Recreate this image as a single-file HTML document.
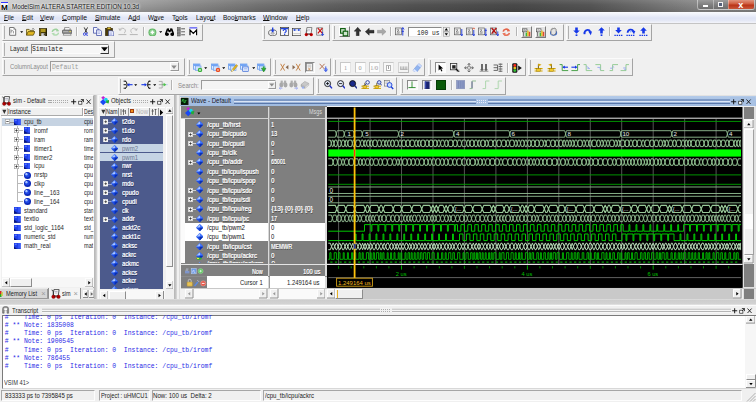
<!DOCTYPE html><html><head><meta charset="utf-8"><title>ModelSim ALTERA STARTER EDITION 10.3d</title>
<style>
html,body{margin:0;padding:0}
body{width:756px;height:402px;overflow:hidden;background:#f0f0f0;position:relative;
 font-family:"Liberation Sans","DejaVu Sans",sans-serif;}
div,span.t,span.m,svg{position:absolute;box-sizing:border-box}
span.t{white-space:pre;}
span.m{white-space:pre;font-family:"Liberation Mono","DejaVu Sans Mono",monospace}
u{text-decoration:underline;text-decoration-thickness:0.55px;text-underline-offset:0.1px}
.tb{border:1px solid;border-color:#fbfbfb #a4a4a4 #a4a4a4 #fbfbfb;background:#f0f0f0}
.tb:before{content:"";position:absolute;left:1px;top:1px;bottom:1px;width:1px;background:#b0b0b0;}
</style></head><body>
<div style="left:0px;top:0px;width:756px;height:12px;background:linear-gradient(90deg,#dedede 0,#cecece 1.2%,#c4c4c4 5%,#b8b8b8 10%,#a2a2a2 17%,#8a8a8a 25%,#727272 34%,#5e5e5e 45%,#525252 55%,#494949 68%,#555 78%,#707070 86%,#868686 92%,#848484 100%);"></div>
<div style="left:0px;top:0px;width:756px;height:12px;background:linear-gradient(180deg,rgba(255,255,255,.10) 0,rgba(0,0,0,0) 40%,rgba(0,0,0,.12) 100%);"></div>
<div style="left:0.6px;top:2px;width:7.8px;height:8.2px;background:#f6f6f6;border-top:1.3px solid #3434ff;"></div>
<span class="t" style="left:1.20px;top:4.00px;font-size:6.6px;line-height:8.6px;color:#000;transform:scaleX(1.201);transform-origin:0 0;text-shadow:.3px 0 0 #000;">M</span>
<span class="t" style="left:12.00px;top:2.00px;font-size:7px;line-height:9px;color:#1a1a1a;transform:scaleX(0.890);transform-origin:0 0;text-shadow:0 0 3px #fff,0 0 3px #fff;">ModelSim ALTERA STARTER EDITION 10.3d</span>
<div style="left:697px;top:0px;width:58px;height:10px;border:1px solid rgba(255,255,255,.45);border-top:none;border-radius:0 0 3px 3px;background:linear-gradient(180deg,#9c9c9c,#7e7e7e 55%,#6e6e6e);"></div>
<div style="left:728px;top:0px;width:26px;height:9px;background:linear-gradient(180deg,#e0957f,#cf5a3c 45%,#b93317 55%,#c9573a);border-radius:0 0 2px 0;"></div>
<div style="left:713px;top:0px;width:1px;height:9px;background:rgba(255,255,255,.35)"></div>
<div style="left:728px;top:0px;width:1px;height:9px;background:rgba(255,255,255,.35)"></div>
<div style="left:703px;top:5px;width:5px;height:2px;background:#fff;"></div>
<div style="left:717.5px;top:2px;width:5.5px;height:4.5px;border:1px solid #f4f4f4;background:#55607a"></div>
<span class="t" style="left:738.30px;top:0.00px;font-size:9px;line-height:11px;color:#fff;font-weight:bold;">x</span>
<div style="left:0px;top:11.5px;width:756px;height:11.5px;background:linear-gradient(180deg,#fafbfe 0,#eef1fa 25%,#dfe4f5 55%,#e3e7f5 75%,#f3f4fa 100%);"></div>
<span class="t" style="left:4.00px;top:14.00px;font-size:6.8px;line-height:8.8px;color:#111;transform:scaleX(0.913);transform-origin:0 0;"><u>F</u>ile</span>
<span class="t" style="left:21.70px;top:14.00px;font-size:6.8px;line-height:8.8px;color:#111;transform:scaleX(0.947);transform-origin:0 0;"><u>E</u>dit</span>
<span class="t" style="left:40.30px;top:14.00px;font-size:6.8px;line-height:8.8px;color:#111;transform:scaleX(0.951);transform-origin:0 0;"><u>V</u>iew</span>
<span class="t" style="left:62.00px;top:14.00px;font-size:6.8px;line-height:8.8px;color:#111;"><u>C</u>ompile</span>
<span class="t" style="left:94.70px;top:14.00px;font-size:6.8px;line-height:8.8px;color:#111;transform:scaleX(0.956);transform-origin:0 0;"><u>S</u>imulate</span>
<span class="t" style="left:128.00px;top:14.00px;font-size:6.8px;line-height:8.8px;color:#111;transform:scaleX(0.992);transform-origin:0 0;">A<u>d</u>d</span>
<span class="t" style="left:148.00px;top:14.00px;font-size:6.8px;line-height:8.8px;color:#111;transform:scaleX(0.934);transform-origin:0 0;">W<u>a</u>ve</span>
<span class="t" style="left:172.00px;top:14.00px;font-size:6.8px;line-height:8.8px;color:#111;transform:scaleX(0.989);transform-origin:0 0;">T<u>o</u>ols</span>
<span class="t" style="left:195.70px;top:14.00px;font-size:6.8px;line-height:8.8px;color:#111;transform:scaleX(0.955);transform-origin:0 0;">Layo<u>u</u>t</span>
<span class="t" style="left:223.00px;top:14.00px;font-size:6.8px;line-height:8.8px;color:#111;transform:scaleX(0.962);transform-origin:0 0;">Boo<u>k</u>marks</span>
<span class="t" style="left:263.30px;top:14.00px;font-size:6.8px;line-height:8.8px;color:#111;transform:scaleX(1.013);transform-origin:0 0;"><u>W</u>indow</span>
<span class="t" style="left:295.70px;top:14.00px;font-size:6.8px;line-height:8.8px;color:#111;transform:scaleX(0.951);transform-origin:0 0;"><u>H</u>elp</span>
<div style="left:0px;top:23px;width:756px;height:1px;background:#c4c4c4"></div>
<div class="tb" style="left:2px;top:24px;width:201px;height:17px"></div>
<div class="tb" style="left:262px;top:24px;width:68px;height:17px"></div>
<div class="tb" style="left:332px;top:24px;width:232px;height:17px"></div>
<div class="tb" style="left:566px;top:24px;width:86px;height:17px"></div>
<div class="tb" style="left:2px;top:41px;width:113px;height:17px"></div>
<div class="tb" style="left:2px;top:58px;width:183px;height:18px"></div>
<div class="tb" style="left:187px;top:58px;width:84px;height:18px"></div>
<div class="tb" style="left:273px;top:58px;width:58px;height:18px"></div>
<div class="tb" style="left:333px;top:58px;width:92px;height:18px"></div>
<div class="tb" style="left:428px;top:58px;width:98px;height:18px"></div>
<div class="tb" style="left:528px;top:58px;width:105px;height:18px"></div>
<div class="tb" style="left:118px;top:76.5px;width:196px;height:18.0px"></div>
<div class="tb" style="left:316px;top:76.5px;width:81px;height:18.0px"></div>
<div class="tb" style="left:400px;top:76.5px;width:106px;height:18.0px"></div>
<svg style="left:9.2px;top:27.3px" width="7.6" height="9" viewBox="0 0 7.6 9"><path d="M.6,.5h4.2l1.9,1.9v5.9h-6.1z" fill="#fff" stroke="#555" stroke-width=".8"/><path d="M2,2.4v4M2,4.2q1.6,-1.2 2.4,0v2.2" stroke="#555" stroke-width=".6" fill="none"/><path d="M4.8,.5v1.9h1.9" fill="none" stroke="#6a6a6a" stroke-width=".5"/></svg>
<svg style="left:20.2px;top:31.2px" width="3.4" height="2.4" viewBox="0 0 3.4 2.4"><polygon points="0.2,0.3 3.2,0.3 1.7,2.1" fill="#000"/></svg>
<svg style="left:25.6px;top:27.8px" width="9.6" height="8" viewBox="0 0 9.6 8"><path d="M.5,7.2V1.4h2.6l.8,1h3.6v1.2" fill="#f4dc6a" stroke="#4a3c00" stroke-width=".7"/><path d="M.5,7.2l1.6,-3.6h7l-1.8,3.6z" fill="#e2b822" stroke="#4a3c00" stroke-width=".7"/><path d="M6,1.2c1,-1 2,-.6 2.4,.4" stroke="#222" stroke-width=".5" fill="none"/></svg>
<svg style="left:38.6px;top:27.6px" width="8.4" height="8.4" viewBox="0 0 8.4 8.4"><rect x=".4" y=".4" width="7.6" height="7.6" fill="#2c2400" stroke="#1a1600" stroke-width=".5"/><rect x="1.8" y=".8" width="4.8" height="3.4" fill="#b09820"/><rect x="2.2" y="5.2" width="4" height="2.8" fill="#d0d0d0"/><rect x="4.8" y="5.4" width="1" height="2" fill="#2c2400"/><rect x=".8" y=".8" width=".9" height="6.8" fill="#8a7410"/></svg>
<svg style="left:50.6px;top:27.6px" width="8.8" height="8.4" viewBox="0 0 8.8 8.4"><path d="M1.2,3.8a3.2,3 0 0 1 5.6,-1.4" fill="none" stroke="#9ed29e" stroke-width="1.5"/><polygon points="5.6,.6 8.4,3.2 5.2,3.6" fill="#9ed29e"/><path d="M7.6,4.6a3.2,3 0 0 1 -5.6,1.4" fill="none" stroke="#b2dcb2" stroke-width="1.5"/><polygon points="3.2,7.8 .4,5.2 3.6,4.8" fill="#b2dcb2"/></svg>
<svg style="left:61.8px;top:27.4px" width="10.4" height="8.8" viewBox="0 0 10.4 8.8"><path d="M2.6,3V.6h4.6l.8,.8V3" fill="#fff" stroke="#555" stroke-width=".6"/><rect x=".5" y="3" width="9.4" height="3.6" rx=".8" fill="#8c8c8c" stroke="#3a3a3a" stroke-width=".6"/><path d="M2,6.6l-.8,1.7h8l-.8,-1.7z" fill="#f2f2f2" stroke="#555" stroke-width=".5"/><rect x="7.4" y="4" width="1.4" height=".9" fill="#f0e040"/><path d="M1.2,4.4h5" stroke="#d0d0d0" stroke-width=".6"/></svg>
<div style="left:76px;top:27px;width:1px;height:9px;background:#b4b4b4"></div>
<div style="left:77px;top:27px;width:1px;height:9px;background:#fcfcfc"></div>
<svg style="left:82.6px;top:27.2px" width="5.8" height="9.2" viewBox="0 0 5.8 9.2"><path d="M1.2,.4l2.8,5.4M4.6,.4l-2.8,5.4" stroke="#222" stroke-width=".9"/><circle cx="1.5" cy="7.2" r="1.2" fill="none" stroke="#2a3ce0" stroke-width=".9"/><circle cx="4.3" cy="7.2" r="1.2" fill="none" stroke="#2a3ce0" stroke-width=".9"/></svg>
<svg style="left:92.8px;top:27px" width="9.4" height="9" viewBox="0 0 9.4 9"><path d="M.5,.5h3.4l1.3,1.3v4.4h-4.7z" fill="#f4f6ff" stroke="#2c3c9c" stroke-width=".7"/><path d="M3.6,2.9h3.6l1.4,1.4v4.2h-5z" fill="#f4f6ff" stroke="#2c3c9c" stroke-width=".7"/><path d="M4.6,5h2.6M4.6,6.4h2.6" stroke="#6878c8" stroke-width=".5"/></svg>
<svg style="left:105.2px;top:26.8px" width="9.2" height="9.4" viewBox="0 0 9.2 9.4"><rect x=".5" y="1.3" width="7" height="7.4" fill="#4a3a08" stroke="#2a2000" stroke-width=".6"/><rect x="2.2" y=".4" width="3.6" height="1.8" fill="#e0c030" stroke="#4a3a08" stroke-width=".5"/><path d="M3.6,3.8h3.8l1.3,1.3v3.8h-5.1z" fill="#f2f4ff" stroke="#2c3c9c" stroke-width=".6"/><path d="M4.6,6h2.6M4.6,7.3h2.6" stroke="#6878c8" stroke-width=".5"/></svg>
<svg style="left:117.6px;top:27.2px" width="9.2" height="8.6" viewBox="0 0 9.2 8.6"><path d="M1.6,3A3,2.7 0 1 1 6,6.2" fill="none" stroke="#b0b0b0" stroke-width=".8"/><path d="M1,1.2l.6,2.2l2,-.8" fill="none" stroke="#a8a8a8" stroke-width=".7"/><path d="M.4,7.6h8" stroke="#a8a8a8" stroke-width=".8"/></svg>
<svg style="left:128.8px;top:27.2px" width="9.2" height="8.6" viewBox="0 0 9.2 8.6"><path d="M7.6,3A3,2.7 0 1 0 3.2,6.2" fill="none" stroke="#b8b8b8" stroke-width=".8"/><path d="M8.2,1.2l-.6,2.2l-2,-.8" fill="none" stroke="#a8a8a8" stroke-width=".7"/><path d="M.8,7.6h8" stroke="#a8a8a8" stroke-width=".8"/></svg>
<div style="left:142.6px;top:27px;width:1px;height:9px;background:#b4b4b4"></div>
<div style="left:143.6px;top:27px;width:1px;height:9px;background:#fcfcfc"></div>
<svg style="left:147.8px;top:27.6px" width="8.8" height="8.8" viewBox="0 0 8.8 8.8"><circle cx="4.4" cy="4.4" r="4" fill="#62b866"/><circle cx="4.4" cy="4.4" r="3" fill="#8ed092"/><path d="M4.4,2.6v3.6M2.6,4.4h3.6" stroke="#fff" stroke-width="1.3"/><circle cx="4.4" cy="4.4" r="1.1" fill="#fff"/></svg>
<svg style="left:159px;top:31.2px" width="3.4" height="2.4" viewBox="0 0 3.4 2.4"><polygon points="0.2,0.3 3.2,0.3 1.7,2.1" fill="#000"/></svg>
<svg style="left:164.6px;top:27.8px" width="9.2" height="8.2" viewBox="0 0 9.2 8.2"><path d="M2.6,.8l-2,5.4M6.6,.8l2,5.4" stroke="#000" stroke-width="1.5"/><rect x="2.4" y=".4" width="1.7" height="3" fill="#000"/><rect x="5.1" y=".4" width="1.7" height="3" fill="#000"/><rect x="3.6" y="2" width="2" height="2.2" fill="#000"/><ellipse cx="2" cy="6.2" rx="1.9" ry="1.8" fill="#000"/><ellipse cx="7.2" cy="6.2" rx="1.9" ry="1.8" fill="#000"/></svg>
<svg style="left:176.6px;top:27.2px" width="8.8" height="9.4" viewBox="0 0 8.8 9.4"><rect x=".4" y=".6" width="2.8" height="2.4" fill="#8a8a8a" stroke="#4a4a4a" stroke-width=".5"/><rect x=".4" y="3.6" width="2.8" height="2.4" fill="#8a8a8a" stroke="#4a4a4a" stroke-width=".5"/><rect x=".4" y="6.6" width="2.8" height="2.4" fill="#8a8a8a" stroke="#4a4a4a" stroke-width=".5"/><path d="M4.2,1.8h4.2M4.2,4.8h4.2M4.2,7.8h4.2" stroke="#3a3a3a" stroke-width=".8"/></svg>
<svg style="left:189.4px;top:27.2px" width="8.6" height="9" viewBox="0 0 8.6 9"><rect x=".2" y=".8" width="8.2" height="8" fill="#fbfbfb"/><rect x=".4" y=".4" width="7.8" height="1" fill="#2a2af8"/><path d="M1,8.2V3l3.3,3.4L7.6,3v5.2" fill="none" stroke="#000" stroke-width="1.2"/></svg>
<svg style="left:267.8px;top:27.2px" width="9.4" height="9.2" viewBox="0 0 9.4 9.2"><ellipse cx="4.7" cy="5.8" rx="4.1" ry="3" fill="#f2f2f4" stroke="#4a4a4a" stroke-width=".8"/><ellipse cx="4.7" cy="6.3" rx="1.7" ry="1" fill="#c8c8d0" stroke="#777" stroke-width=".4"/><path d="M4.7,.4v3.6" stroke="#1a3ce0" stroke-width="1.3"/><polygon points="2.7,3.2 6.7,3.2 4.7,5.6" fill="#1a3ce0"/></svg>
<svg style="left:279.8px;top:27.2px" width="9.4" height="9.2" viewBox="0 0 9.4 9.2"><rect x=".5" y=".6" width="8.2" height="7.8" fill="#f6f6f6" stroke="#333" stroke-width=".7"/><rect x=".9" y="1" width="7.4" height="1.3" fill="#2244d8"/><path d="M3.2,4a1.5,1.4 0 1 1 2.2,1.2q-.7,.4 -.7,1.2" stroke="#1a3ce0" stroke-width="1.1" fill="none"/><rect x="4.1" y="7" width="1.1" height="1" fill="#1a3ce0"/></svg>
<svg style="left:291.8px;top:27.6px" width="9.6" height="8.4" viewBox="0 0 9.6 8.4"><rect x=".5" y=".5" width="8.6" height="7.2" fill="#f8f8f8" stroke="#333" stroke-width=".7"/><rect x=".9" y=".9" width="7.8" height="1.8" fill="#c8d4f0"/><rect x="1.8" y="1.2" width="1.6" height="1.6" fill="#1a3ce0"/><rect x="6" y="1.2" width="1.6" height="1.6" fill="#1a3ce0"/><path d="M1.4,5.6h6.8" stroke="#b0b0b0" stroke-width=".6"/></svg>
<svg style="left:303.8px;top:27.2px" width="10" height="9.4" viewBox="0 0 10 9.4"><rect x="3" y=".6" width="5" height="6" fill="#fff" stroke="#555" stroke-width=".7" transform="skewX(-8)"/><path d="M3.4,2.4h3M3.2,3.8h3" stroke="#99a" stroke-width=".5"/><path d="M2.2,7.6L3,3" stroke="#555" stroke-width=".6"/><circle cx="2.3" cy="7.6" r="1.6" fill="#c40000"/><circle cx="7.3" cy="7.6" r="1.6" fill="#c40000"/><path d="M2.3,7.6h5" stroke="#600" stroke-width=".6"/></svg>
<svg style="left:316px;top:27.2px" width="9.6" height="9.4" viewBox="0 0 9.6 9.4"><path d="M.6,.8h6v7.4h-6z" fill="#f2f2f2" stroke="#666" stroke-width=".7"/><path d="M1.8,1.2l4.6,5.2M6.4,1.2l-4.6,5.2" stroke="#c81010" stroke-width="1.2"/><path d="M6.6,5v3.4M5.2,7l1.4,1.6l1.4,-1.6" stroke="#1a3ce0" stroke-width=".8" fill="none"/></svg>
<div style="left:338.6px;top:26.4px;width:11px;height:11px;background:#efefef;border:1px solid;border-color:#fdfdfd #7a7a7a #7a7a7a #fdfdfd"></div>
<svg style="left:340.2px;top:28px" width="8.6" height="8.6" viewBox="0 0 8.6 8.6"><rect x=".6" y=".6" width="4.6" height="4.6" fill="#cfe6cf" stroke="#0a5a0a" stroke-width="1.1"/><rect x="3.2" y="3.2" width="4.6" height="4.6" fill="#cfe6cf" stroke="#0a5a0a" stroke-width="1.1"/></svg>
<svg style="left:353.8px;top:27.2px" width="7.4" height="9.2" viewBox="0 0 7.4 9.2"><polygon points="3.7,.3 7.2,4.2 5.1,4.2 5.1,8.8 2.3,8.8 2.3,4.2 .2,4.2" fill="#333" stroke="#111" stroke-width=".4"/></svg>
<svg style="left:365.2px;top:28.2px" width="9.4" height="7.4" viewBox="0 0 9.4 7.4"><polygon points=".3,3.7 4.2,.2 4.2,2.3 9,2.3 9,5.1 4.2,5.1 4.2,7.2" fill="#333" stroke="#111" stroke-width=".4"/></svg>
<svg style="left:376.8px;top:28.2px" width="9.4" height="7.4" viewBox="0 0 9.4 7.4"><polygon points="9.1,3.7 5.2,.2 5.2,2.3 .4,2.3 .4,5.1 5.2,5.1 5.2,7.2" fill="#a8a8a8" stroke="#8c8c8c" stroke-width=".4"/></svg>
<div style="left:390px;top:27px;width:1px;height:9px;background:#b4b4b4"></div>
<div style="left:391px;top:27px;width:1px;height:9px;background:#fcfcfc"></div>
<svg style="left:395.4px;top:27.2px" width="9.6" height="9.4" viewBox="0 0 9.6 9.4"><rect x=".5" y="1" width="5.8" height="6.8" fill="#f4f4f4" stroke="#5a5a5a" stroke-width=".7"/><path d="M1.6,2.8h2.4l-1.8,2.2h2.6M1.6,6.2h3" stroke="#555" stroke-width=".6" fill="none"/><path d="M7.8,.6v8" stroke="#1a34d8" stroke-width=".9"/><path d="M6.4,2.4l1.4,-1.8l1.4,1.8M6.6,4.4h2.4" stroke="#1a34d8" stroke-width=".8" fill="none"/></svg>
<div style="left:408.3px;top:27.4px;width:34px;height:9.6px;background:#fff;border:1px solid;border-color:#8a8a8a #e8e8e8 #e8e8e8 #8a8a8a"></div>
<span class="m" style="left:417.00px;top:30.00px;font-size:6.3px;line-height:8.3px;color:#222;transform:scaleX(0.992);transform-origin:0 0;">100 us</span>
<svg style="left:443px;top:27.4px" width="6.6" height="9.6" viewBox="0 0 6.6 9.6"><rect x=".3" y=".3" width="6" height="4.2" fill="#f0f0f0" stroke="#8a8a8a" stroke-width=".5"/><rect x=".3" y="5" width="6" height="4.2" fill="#f0f0f0" stroke="#8a8a8a" stroke-width=".5"/><polygon points="1.6,3.4 5,3.4 3.3,1" fill="#000"/><polygon points="1.6,6.2 5,6.2 3.3,8.6" fill="#000"/></svg>
<svg style="left:453.6px;top:27.2px" width="9.6" height="9.4" viewBox="0 0 9.6 9.4"><rect x=".5" y="1" width="5.8" height="6.8" fill="#f4f4f4" stroke="#5a5a5a" stroke-width=".7"/><path d="M1.6,2.8h2.4l-1.8,2.2h2.6M1.6,6.2h3" stroke="#555" stroke-width=".6" fill="none"/><path d="M7.8,2v6.6M6.4,7l1.4,1.8l1.4,-1.8" stroke="#1a34d8" stroke-width=".9" fill="none"/></svg>
<svg style="left:465.8px;top:27.2px" width="9.6" height="9.4" viewBox="0 0 9.6 9.4"><rect x=".5" y="1" width="5.8" height="6.8" fill="#f4f4f4" stroke="#5a5a5a" stroke-width=".7"/><path d="M1.6,2.8h2.4l-1.8,2.2h2.6M1.6,6.2h3" stroke="#555" stroke-width=".6" fill="none"/><path d="M7.8,3v5.6M6.4,7l1.4,1.8l1.4,-1.8" stroke="#1a34d8" stroke-width=".9" fill="none"/><path d="M6.6,2.4l1.2,-1.6l1.2,1.6" stroke="#e04a2a" stroke-width=".8" fill="none"/></svg>
<svg style="left:477.8px;top:27.2px" width="9.6" height="9.4" viewBox="0 0 9.6 9.4"><rect x=".5" y="1" width="5.8" height="6.8" fill="#f4f4f4" stroke="#5a5a5a" stroke-width=".7"/><path d="M1.6,2.8h2.4l-1.8,2.2h2.6M1.6,6.2h3" stroke="#555" stroke-width=".6" fill="none"/><path d="M7.8,1.4v7.2M6.4,7l1.4,1.8l1.4,-1.8" stroke="#1a34d8" stroke-width=".9" fill="none"/><path d="M6.6,3.4h2.4" stroke="#1a34d8" stroke-width=".7"/></svg>
<svg style="left:489.8px;top:27.2px" width="9.6" height="9.4" viewBox="0 0 9.6 9.4"><rect x=".5" y="1" width="5.8" height="6.8" fill="#f4f4f4" stroke="#5a5a5a" stroke-width=".7"/><path d="M1.6,2.8h2.4l-1.8,2.2h2.6M1.6,6.2h3" stroke="#555" stroke-width=".6" fill="none"/><path d="M1.6,1l4.8,5.6M6.4,1l-4.8,5.6" stroke="#b80c0c" stroke-width="1.2"/><path d="M7.8,4.4v4.2M6.4,7l1.4,1.8l1.4,-1.8" stroke="#1a34d8" stroke-width=".9" fill="none"/></svg>
<svg style="left:501.8px;top:27.8px" width="8.6" height="8.4" viewBox="0 0 8.6 8.4"><path d="M1.2,3.6a3.1,2.9 0 0 1 5.6,-1.2" fill="none" stroke="#e4664c" stroke-width="1.7"/><polygon points="5.6,.4 8.4,3.2 5,3.6" fill="#e4664c"/><path d="M7.4,4.8a3.1,2.9 0 0 1 -5.6,1.2" fill="none" stroke="#e8765c" stroke-width="1.7"/><polygon points="3,8 .2,5.2 3.6,4.8" fill="#e8765c"/></svg>
<div style="left:515.6px;top:27px;width:1px;height:9px;background:#b4b4b4"></div>
<div style="left:516.6px;top:27px;width:1px;height:9px;background:#fcfcfc"></div>
<div style="left:520.8px;top:26.4px;width:11.4px;height:11.2px;background:#e2e2e2;border:1px solid;border-color:#fdfdfd #7a7a7a #7a7a7a #fdfdfd"></div>
<svg style="left:522px;top:27.6px" width="9" height="9" viewBox="0 0 9 9"><rect x=".6" y=".8" width="4.4" height="3" fill="#e8e8e8" stroke="#444" stroke-width=".6"/><path d="M1.2,2.6l1,-1l.8,1l1,-1" stroke="#222" stroke-width=".5" fill="none"/><path d="M1.6,3.8v4.6" stroke="#444" stroke-width=".7"/><rect x="3.6" y="4.6" width="1.5" height="3.8" fill="#3cb83c"/><rect x="5.2" y="2.6" width="1.5" height="5.8" fill="#e8c020"/><rect x="6.8" y="3.8" width="1.5" height="4.6" fill="#e04830"/><path d="M.6,8.6h8.2" stroke="#888" stroke-width=".5"/></svg>
<div style="left:535px;top:26.4px;width:11.4px;height:11.2px;background:#e2e2e2;border:1px solid;border-color:#fdfdfd #7a7a7a #7a7a7a #fdfdfd"></div>
<svg style="left:536.2px;top:27.6px" width="9" height="9" viewBox="0 0 9 9"><rect x=".6" y=".8" width="4.4" height="3" fill="#fff" stroke="#444" stroke-width=".6"/><path d="M1.2,2.6l1,-1l.8,1l1,-1" stroke="#222" stroke-width=".5" fill="none"/><path d="M1.6,3.8v4.6" stroke="#444" stroke-width=".7"/><rect x="3.6" y="4.6" width="1.5" height="3.8" fill="#3cb83c"/><rect x="5.2" y="2.6" width="1.5" height="5.8" fill="#e8c020"/><rect x="6.8" y="3.8" width="1.5" height="4.6" fill="#e04830"/><path d="M.6,8.6h8.2" stroke="#888" stroke-width=".5"/></svg>
<svg style="left:549px;top:27.2px" width="9" height="9.4" viewBox="0 0 9 9.4"><ellipse cx="4.6" cy="6" rx="3.6" ry="2.8" fill="#4a78d8"/><ellipse cx="4.2" cy="6.6" rx="2" ry="1.2" fill="#b8ccf4"/><path d="M2,5V2.6q.7,-.8 1.2,0V1.6q.7,-.9 1.3,0V1.4q.7,-.9 1.3,0V2q.8,-.7 1.3,.2V5.6q0,2 -2.4,2.4q-2,.2 -2.7,-1.6z" fill="#e4e4e4" stroke="#444" stroke-width=".55"/></svg>
<svg style="left:572.6px;top:27.2px" width="7" height="9.4" viewBox="0 0 7 9.4"><polygon points="2.2,.4 4.8,.4 4.8,3.4 6.8,3.4 3.5,6.8 .2,3.4 2.2,3.4" fill="#1638e8"/><rect x="2.6" y="7.4" width="1.8" height="1.6" fill="#1638e8"/></svg>
<svg style="left:583.4px;top:27.4px" width="9.2" height="8.6" viewBox="0 0 9.2 8.6"><path d="M1.4,6.4a3.2,3.6 0 0 1 6,-1.6" fill="none" stroke="#1638e8" stroke-width="1.8"/><polygon points="5.2,4.2 9,4.6 7.8,8.2" fill="#1638e8"/><rect x=".6" y="5.6" width="1.8" height="1.6" fill="#1638e8"/></svg>
<svg style="left:597.6px;top:27.2px" width="7" height="9.4" viewBox="0 0 7 9.4"><polygon points="2.2,6.6 4.8,6.6 4.8,3.6 6.8,3.6 3.5,.2 .2,3.6 2.2,3.6" fill="#1638e8"/><rect x="2.6" y="7.4" width="1.8" height="1.6" fill="#1638e8"/></svg>
<div style="left:609px;top:27px;width:1px;height:9px;background:#b4b4b4"></div>
<div style="left:610px;top:27px;width:1px;height:9px;background:#fcfcfc"></div>
<svg style="left:614.4px;top:27.2px" width="9" height="9.6" viewBox="0 0 9 9.6"><polygon points="3.2,.4 5.8,.4 5.8,3 7.8,3 4.5,6.4 1.2,3 3.2,3" fill="#1638e8"/><path d="M.4,8.4h8.2" stroke="#1638e8" stroke-width="1.4" stroke-dasharray="1.4 .8"/></svg>
<svg style="left:626px;top:27.2px" width="10" height="9.6" viewBox="0 0 10 9.6"><path d="M1.6,5.8a3.2,3.4 0 0 1 6,-1.4" fill="none" stroke="#1638e8" stroke-width="1.8"/><polygon points="5.4,3.6 9.4,4 8,7.2" fill="#1638e8"/><circle cx="4.6" cy="4.6" r="1" fill="#8fb0ff"/><path d="M.4,8.4h8.2" stroke="#1638e8" stroke-width="1.4" stroke-dasharray="1.4 .8"/></svg>
<svg style="left:639.2px;top:27.2px" width="9" height="9.6" viewBox="0 0 9 9.6"><polygon points="3.2,6.6 5.8,6.6 5.8,3.8 7.8,3.8 4.5,.3 1.2,3.8 3.2,3.8" fill="#1638e8"/><path d="M.4,8.4h8.2" stroke="#1638e8" stroke-width="1.4" stroke-dasharray="1.4 .8"/></svg>
<span class="t" style="left:9.70px;top:45.00px;font-size:6.6px;line-height:8.6px;color:#222;transform:scaleX(0.908);transform-origin:0 0;">Layout</span>
<div style="left:30.8px;top:44.2px;width:78.4px;height:9.6px;background:#f6f6f6;border:1px solid;border-color:#8a8a8a #fbfbfb #fbfbfb #8a8a8a"></div>
<span class="m" style="left:32.20px;top:46.00px;font-size:6.5px;line-height:8.5px;color:#222;transform:scaleX(0.987);transform-origin:0 0;">Simulate</span>
<div style="left:99.6px;top:44.8px;width:9.6px;height:8.8px;background:#f0f0f0;border:1px solid;border-color:#fff #555 #333 #fff"></div>
<svg style="left:101px;top:46.6px" width="7" height="4.8" viewBox="0 0 7 4.8"><polygon points=".2,.3 6.8,.3 3.5,4.5" fill="#000"/></svg>
<span class="t" style="left:9.70px;top:63.00px;font-size:6.6px;line-height:8.6px;color:#8a8a8a;transform:scaleX(0.888);transform-origin:0 0;">ColumnLayout</span>
<div style="left:50px;top:60.8px;width:129.4px;height:10.8px;background:#f2f2f2;border:1px solid;border-color:#9a9a9a #fbfbfb #fbfbfb #9a9a9a"></div>
<span class="m" style="left:51.70px;top:64.00px;font-size:6.5px;line-height:8.5px;color:#9a9a9a;transform:scaleX(0.974);transform-origin:0 0;">Default</span>
<div style="left:169.6px;top:61.6px;width:9.4px;height:9.4px;background:#f0f0f0;border:1px solid;border-color:#fff #999 #999 #fff"></div>
<svg style="left:171.4px;top:64.6px" width="6" height="4.4" viewBox="0 0 6 4.4"><polygon points=".3,.4 5.7,.4 3,4" fill="#8a8a8a"/></svg>
<svg style="left:193px;top:62.6px" width="9.8" height="9.6" viewBox="0 0 9.8 9.6"><rect x=".5" y="1" width="6.4" height="5.2" fill="#dcebff" stroke="#6a9cec" stroke-width=".8"/><rect x=".9" y="1.3" width="5.6" height="1.5" fill="#5a96f4"/><rect x="2.4" y="3" width="5.6" height="4.4" fill="#cfe2ff" stroke="#6a9cec" stroke-width=".7" opacity=".9"/><circle cx="7" cy="7" r="2.2" fill="#2fae2f"/><path d="M7,5.8v2.4M5.8,7h2.4" stroke="#fff" stroke-width=".7"/></svg>
<svg style="left:204.4px;top:66.6px" width="3.4" height="2.4" viewBox="0 0 3.4 2.4"><polygon points="0.2,0.3 3.2,0.3 1.7,2.1" fill="#000"/></svg>
<svg style="left:211.2px;top:62.6px" width="9.8" height="9.6" viewBox="0 0 9.8 9.6"><rect x=".5" y="1" width="6.4" height="5.2" fill="#dcebff" stroke="#6a9cec" stroke-width=".8"/><rect x=".9" y="1.3" width="5.6" height="1.5" fill="#5a96f4"/><rect x="2.4" y="3" width="5.6" height="4.4" fill="#cfe2ff" stroke="#6a9cec" stroke-width=".7" opacity=".9"/><circle cx="7" cy="7" r="2.2" fill="#e8421a"/><path d="M7,5.8v2.4M5.8,7h2.4" stroke="#ffd8b0" stroke-width=".7"/></svg>
<svg style="left:222px;top:66.6px" width="3.4" height="2.4" viewBox="0 0 3.4 2.4"><polygon points="0.2,0.3 3.2,0.3 1.7,2.1" fill="#000"/></svg>
<svg style="left:228px;top:62.6px" width="9.8" height="9.6" viewBox="0 0 9.8 9.6"><rect x=".5" y="1" width="6.4" height="5.2" fill="#dcebff" stroke="#6a9cec" stroke-width=".8"/><rect x=".9" y="1.3" width="5.6" height="1.5" fill="#5a96f4"/><rect x="2.4" y="3" width="5.6" height="4.4" fill="#cfe2ff" stroke="#6a9cec" stroke-width=".7" opacity=".9"/><path d="M3.4,8.6l1,-2.4l4,-4.6l1.2,1.2l-4,4.6z" fill="#f0c020" stroke="#8a6a00" stroke-width=".5"/><path d="M3.4,8.6l1,-2.4l1.2,1.4z" fill="#fff0b0"/></svg>
<svg style="left:240px;top:62.6px" width="9.8" height="9.6" viewBox="0 0 9.8 9.6"><rect x=".5" y="1" width="6.4" height="5.2" fill="#dcebff" stroke="#6a9cec" stroke-width=".8"/><rect x=".9" y="1.3" width="5.6" height="1.5" fill="#5a96f4"/><rect x="2.4" y="3" width="5.6" height="4.4" fill="#cfe2ff" stroke="#6a9cec" stroke-width=".7" opacity=".9"/><rect x="2.8" y="4" width="5.4" height="4.4" fill="#fff" stroke="#3a6ad8" stroke-width=".7"/><path d="M3.8,5.6h3.4M3.8,7h3.4" stroke="#6a94e8" stroke-width=".6"/></svg>
<svg style="left:251.6px;top:66.6px" width="3.4" height="2.4" viewBox="0 0 3.4 2.4"><polygon points="0.2,0.3 3.2,0.3 1.7,2.1" fill="#000"/></svg>
<svg style="left:257.4px;top:62.6px" width="9.8" height="9.6" viewBox="0 0 9.8 9.6"><rect x=".5" y="1" width="6.4" height="5.2" fill="#dcebff" stroke="#6a9cec" stroke-width=".8"/><rect x=".9" y="1.3" width="5.6" height="1.5" fill="#5a96f4"/><rect x="2.4" y="3" width="5.6" height="4.4" fill="#cfe2ff" stroke="#6a9cec" stroke-width=".7" opacity=".9"/><polygon points="4.4,5.2 9,5.2 6.7,9" fill="#2fae2f" stroke="#0a6a0a" stroke-width=".4"/><rect x="5.9" y="3.4" width="1.6" height="2" fill="#2fae2f"/></svg>
<svg style="left:280px;top:63px" width="9" height="8.6" viewBox="0 0 9 8.6"><path d="M.6,.8l4,6.8M4.6,.8l-4,6.8" stroke="#c07838" stroke-width=".9"/><polygon points="8.4,2 8.4,6.4 5.6,4.2" fill="#8a6a50"/></svg>
<svg style="left:291.6px;top:63px" width="9" height="8.6" viewBox="0 0 9 8.6"><path d="M4.2,.8l4,6.8M8.2,.8l-4,6.8" stroke="#c07838" stroke-width=".9"/><polygon points=".5,2 .5,6.4 3.3,4.2" fill="#8a6a50"/></svg>
<div style="left:304.6px;top:62px;width:10.6px;height:10.8px;background:#e9e9e9;border:1px solid;border-color:#8a8a8a #fdfdfd #fdfdfd #8a8a8a"></div>
<svg style="left:306.4px;top:63.4px" width="7.4" height="8.4" viewBox="0 0 7.4 8.4"><rect x=".5" y=".5" width="6" height="7.2" fill="#f4f4f4" stroke="#777" stroke-width=".7"/><path d="M1.6,2.2h3.6M1.6,3.8h3.6" stroke="#999" stroke-width=".5"/><path d="M2.2,5l2.4,2.2M4.6,5L2.2,7.2" stroke="#c07838" stroke-width=".7"/></svg>
<svg style="left:319px;top:63px" width="9.4" height="9" viewBox="0 0 9.4 9"><path d="M.6,.8l5,5.4M5.6,.8l-5,5.4" stroke="#b06a4a" stroke-width=".9"/><path d="M6.8,3.4v5M5.2,6.6l1.6,2l1.6,-2" stroke="#2a4ae0" stroke-width=".9" fill="none"/><rect x="5.6" y="5" width="2.6" height="3" fill="#4a6af0" opacity=".6"/></svg>
<div style="left:340.2px;top:62.4px;width:10.8px;height:10.2px;background:#fdfdfd;border:1px solid;border-color:#c8c8c8 #e4e4e4 #e4e4e4 #c8c8c8"></div>
<span class="t" style="left:343.88px;top:64.00px;font-size:6.2px;line-height:8.2px;color:#9a9a9a;font-family:'Liberation Serif',serif;">1</span>
<div style="left:354.6px;top:62.4px;width:11.4px;height:10.2px;background:#fdfdfd;border:1px solid;border-color:#c8c8c8 #e4e4e4 #e4e4e4 #c8c8c8"></div>
<span class="t" style="left:358.58px;top:64.00px;font-size:6.2px;line-height:8.2px;color:#9a9a9a;font-family:'Liberation Serif',serif;">0</span>
<div style="left:368.9px;top:62.4px;width:11.4px;height:10.2px;background:#fdfdfd;border:1px solid;border-color:#c8c8c8 #e4e4e4 #e4e4e4 #c8c8c8"></div>
<span class="t" style="left:370.29px;top:64.00px;font-size:6.2px;line-height:8.2px;color:#9a9a9a;font-family:'Liberation Serif',serif;">1/0</span>
<div style="left:383px;top:62.4px;width:10.8px;height:10.2px;background:#f8f8f8;border:1px solid;border-color:#c8c8c8 #e4e4e4 #e4e4e4 #c8c8c8"></div>
<div style="left:385.6px;top:64.6px;width:5.6px;height:6px;border:1px solid #b4b4b4;background:#fff"></div>
<div style="left:387.9px;top:66.2px;width:0.8px;height:3px;background:#a0a0a0"></div>
<div style="left:398px;top:62.4px;width:11px;height:10.2px;background:#f4f4f4;border:1px solid;border-color:#d4d4d4 #bbb #bbb #d4d4d4"></div>
<svg style="left:399.6px;top:65px" width="8" height="5" viewBox="0 0 8 5"><path d="M.4,4.4V1.4M2,4.4V1.4M3.6,4.4V1.4M5.2,4.4V1.4M6.8,4.4V1.4M.2,4.4h7.4" stroke="#8a8a8a" stroke-width=".6" fill="none"/></svg>
<svg style="left:411.8px;top:62.8px" width="10" height="9.6" viewBox="0 0 10 9.6"><path d="M1,7.4l4.2,-5.2l3.2,2.4l-4.2,5.2z" fill="#8fb4f0" stroke="#6a8ad0" stroke-width=".5"/><path d="M5.2,2.2l1.6,-1.8l3,2.4l-1.4,1.8z" fill="#c8dcff" stroke="#8aa4e0" stroke-width=".4"/><path d="M1,7.4l1.2,-1.4l3,2.4l-1.2,1.4z" fill="#dfe8ff"/></svg>
<div style="left:434.6px;top:62px;width:11.4px;height:10.8px;background:#fcfcfc;border:1px solid;border-color:#8a8a8a #fdfdfd #fdfdfd #8a8a8a"></div>
<svg style="left:437.6px;top:63.6px" width="6" height="8" viewBox="0 0 6 8"><polygon points=".6,.4 .6,6.4 2.2,5 3.4,7.6 4.4,7.1 3.2,4.6 5.2,4.6" fill="#000"/></svg>
<svg style="left:449.8px;top:62.8px" width="10.6" height="9.6" viewBox="0 0 10.6 9.6"><rect x=".6" y=".6" width="6.2" height="6.2" fill="#f4f4f4" stroke="#333" stroke-width=".8"/><rect x="2.2" y="2.2" width="3.4" height="3.4" fill="#222"/><path d="M5.8,5.8l3.2,3.2" stroke="#111" stroke-width="1.3"/><path d="M8.8,6.6v2.4h-2.4" stroke="#777" stroke-width=".7" fill="none"/></svg>
<svg style="left:464px;top:62.8px" width="10" height="9.6" viewBox="0 0 10 9.6"><path d="M5,.4v8.8M.6,4.8h8.8" stroke="#666" stroke-width=".9"/><path d="M3.6,2l1.4,-1.6l1.4,1.6M3.6,7.6l1.4,1.6l1.4,-1.6M2.2,3.4l-1.6,1.4l1.6,1.4M7.8,3.4l1.6,1.4l-1.6,1.4" stroke="#555" stroke-width=".8" fill="none"/><rect x="3.8" y="3.6" width="2.4" height="2.4" fill="#ddd" stroke="#666" stroke-width=".4"/></svg>
<svg style="left:478.6px;top:62.8px" width="10" height="9.6" viewBox="0 0 10 9.6"><path d="M3,1v6.4M7,1v6.4" stroke="#222" stroke-width="1.3"/><path d="M.6,8.2h8.8" stroke="#777" stroke-width=".8"/><path d="M1.4,6l1.6,1.6l1.6,-1.6M5.4,6l1.6,1.6l1.6,-1.6" stroke="#444" stroke-width=".6" fill="none"/></svg>
<svg style="left:493px;top:62.8px" width="10" height="9.6" viewBox="0 0 10 9.6"><path d="M.6,2h4v5.4h-4M.6,4.7h4" stroke="#444" stroke-width=".8" fill="none"/><path d="M5.6,1.2h3.8M5.6,3.6h3.8M5.6,6h3.8M5.6,8.2h3.8" stroke="#333" stroke-width=".8"/><path d="M7.4,.4v9" stroke="#666" stroke-width=".6"/></svg>
<div style="left:506.8px;top:62.6px;width:1px;height:9.999999999999993px;background:#b4b4b4"></div>
<div style="left:507.8px;top:62.6px;width:1px;height:9.999999999999993px;background:#fcfcfc"></div>
<svg style="left:512px;top:62.6px" width="10.2" height="10" viewBox="0 0 10.2 10"><rect x=".5" y=".5" width="4.6" height="9" rx=".8" fill="#2a2a2a" stroke="#000" stroke-width=".5"/><circle cx="2.8" cy="2.4" r="1.35" fill="#ff2a1a"/><circle cx="2.8" cy="5" r="1.35" fill="#e8c020"/><circle cx="2.8" cy="7.6" r="1.35" fill="#2fc02f"/><polygon points="6.2,2.4 9.8,5 6.2,7.6" fill="#111"/></svg>
<svg style="left:534.4px;top:62.8px" width="9.4" height="9.4" viewBox="0 0 9.4 9.4"><path d="M.6,8h8M.6,5.6h8" stroke="#d8a800" stroke-width="1.1"/><rect x="2.6" y="5.4" width="3.6" height="2.8" fill="#f0c828" stroke="#8a6a00" stroke-width=".4"/><path d="M4.4,5.4V1.2" stroke="#6a5200" stroke-width=".9"/><polygon points="4.4,.4 7.6,1.8 4.4,3.2" fill="#d8a800"/></svg>
<svg style="left:547px;top:62.8px" width="9.4" height="9.4" viewBox="0 0 9.4 9.4"><path d="M.6,8h8M.6,5.6h8" stroke="#d8a800" stroke-width="1.1"/><rect x="2.6" y="5.4" width="3.6" height="2.8" fill="#f0c828" stroke="#8a6a00" stroke-width=".4"/><path d="M4.4,5.4V1.2" stroke="#6a5200" stroke-width=".9"/><polygon points="4.4,.4 1.2,1.8 4.4,3.2" fill="#d8a800"/></svg>
<svg style="left:559.4px;top:62.8px" width="9.6" height="9.4" viewBox="0 0 9.6 9.4"><path d="M.6,1.6h2.6v6h6" stroke="#3a9a3a" stroke-width=".9" fill="none"/><path d="M9,4.2h-5" stroke="#1638e8" stroke-width="1.1"/><polygon points="3.4,4.2 5.8,2.6 5.8,5.8" fill="#1638e8"/></svg>
<svg style="left:570.6px;top:62.8px" width="9.6" height="9.4" viewBox="0 0 9.6 9.4"><path d="M.4,7.6h6.2v-6h2.6" stroke="#3a9a3a" stroke-width=".9" fill="none"/><path d="M.4,4.2h5" stroke="#1638e8" stroke-width="1.1"/><polygon points="6.4,4.2 4,2.6 4,5.8" fill="#1638e8"/></svg>
<svg style="left:583px;top:62.8px" width="9.6" height="9.4" viewBox="0 0 9.6 9.4"><path d="M.6,1.6h2.6v6h6" stroke="#8cc88c" stroke-width=".9" fill="none"/><path d="M3.4,3.2l3,2.2" stroke="#8a9cf0" stroke-width=".8"/><path d="M4.4,5.6h2.4" stroke="#8a9cf0" stroke-width=".7"/></svg>
<svg style="left:595.4px;top:62.8px" width="9.6" height="9.4" viewBox="0 0 9.6 9.4"><path d="M.4,1.6h5.2v6h3.6" stroke="#8cc88c" stroke-width=".9" fill="none"/><path d="M2.4,4.4h3" stroke="#8a9cf0" stroke-width=".8"/><path d="M4.4,5.8l1.2,1" stroke="#8a9cf0" stroke-width=".7"/></svg>
<svg style="left:608.6px;top:62.8px" width="9.6" height="9.4" viewBox="0 0 9.6 9.4"><path d="M.6,7.6h3v-6h5.6" stroke="#8cc88c" stroke-width=".9" fill="none"/><path d="M3.6,5.2h-2.4" stroke="#8a9cf0" stroke-width=".8"/><path d="M3.6,3.4l1.6,1" stroke="#8a9cf0" stroke-width=".7"/></svg>
<svg style="left:620.4px;top:62.8px" width="9.6" height="9.4" viewBox="0 0 9.6 9.4"><path d="M.6,7.6h5.4v-6h3" stroke="#8cc88c" stroke-width=".9" fill="none"/><path d="M3.2,5h2.8" stroke="#8a9cf0" stroke-width=".8"/><path d="M4.2,6.6h1.8" stroke="#8a9cf0" stroke-width=".7"/></svg>
<svg style="left:123px;top:80.2px" width="10" height="9.4" viewBox="0 0 10 9.4"><path d="M.6,1.2h2.2M.6,4.7h2.6M.6,8.2h2.2" stroke="#000" stroke-width=".9"/><path d="M2.4,.8q3.4,3.9 0,7.8" stroke="#000" stroke-width="1" fill="none"/><path d="M9.6,4.7h-4.4" stroke="#1638e8" stroke-width="1.1"/><polygon points="4,4.7 6.4,3 6.4,6.4" fill="#1638e8"/></svg>
<svg style="left:134.4px;top:84.4px" width="3.4" height="2.4" viewBox="0 0 3.4 2.4"><polygon points="0.2,0.3 3.2,0.3 1.7,2.1" fill="#000"/></svg>
<svg style="left:141px;top:80.2px" width="10.2" height="9.4" viewBox="0 0 10.2 9.4"><path d="M.4,4.7h4.4" stroke="#1638e8" stroke-width="1.1"/><polygon points="6,4.7 3.6,3 3.6,6.4" fill="#1638e8"/><path d="M9.6,1.2h-2M9.6,4.7h-2.6M9.6,8.2h-2" stroke="#000" stroke-width=".9"/><path d="M8.4,.8q-3.6,3.9 0,7.8" stroke="#000" stroke-width="1" fill="none"/></svg>
<svg style="left:152.6px;top:84.4px" width="3.4" height="2.4" viewBox="0 0 3.4 2.4"><polygon points="0.2,0.3 3.2,0.3 1.7,2.1" fill="#000"/></svg>
<svg style="left:157.6px;top:80.2px" width="10" height="9.4" viewBox="0 0 10 9.4"><path d="M.8,1.4h3.4v6.6h-3.4M.8,4.7h3.4" stroke="#9a9a9a" stroke-width=".8" fill="none"/><path d="M4.4,4.7h1.4" stroke="#3aa83a" stroke-width=".9"/><polygon points="8.4,4.7 5.6,2.8 5.6,6.6" fill="#4cc04c"/><path d="M8.6,4.7h1.2" stroke="#6a8ae8" stroke-width=".8" stroke-dasharray=".6 .4"/></svg>
<div style="left:171px;top:80.4px;width:1px;height:9.599999999999994px;background:#b4b4b4"></div>
<div style="left:172px;top:80.4px;width:1px;height:9.599999999999994px;background:#fcfcfc"></div>
<span class="t" style="left:178.00px;top:82.00px;font-size:6.6px;line-height:8.6px;color:#8a8a8a;transform:scaleX(0.915);transform-origin:0 0;">Search:</span>
<div style="left:201.3px;top:79.8px;width:74.8px;height:10.4px;background:#f4f4f4;border:1px solid;border-color:#9a9a9a #fbfbfb #fbfbfb #9a9a9a"></div>
<div style="left:267.8px;top:80.6px;width:8px;height:8.8px;background:#f0f0f0;border:1px solid;border-color:#fff #9a9a9a #9a9a9a #fff"></div>
<svg style="left:269px;top:83.4px" width="5.6" height="4" viewBox="0 0 5.6 4"><polygon points=".3,.4 5.3,.4 2.8,3.6" fill="#8a8a8a"/></svg>
<svg style="left:279px;top:80.2px" width="9" height="9.6" viewBox="0 0 9 9.6"><rect x="1.6" y=".6" width="2.2" height="3" fill="#b0b0b0"/><rect x="5" y=".6" width="2.2" height="3" fill="#b0b0b0"/><ellipse cx="2.3" cy="5" rx="2" ry="2.4" fill="#a8a8a8"/><ellipse cx="6.5" cy="5" rx="2" ry="2.4" fill="#a8a8a8"/><rect x="3.6" y="2.6" width="1.6" height="1.8" fill="#b8b8b8"/><path d="M.4,8.2h3M1.6,7l-1.4,1.2l1.4,1.2" stroke="#8a9af0" stroke-width=".7" fill="none"/></svg>
<svg style="left:288.6px;top:80.2px" width="9" height="9.6" viewBox="0 0 9 9.6"><rect x="1.6" y=".6" width="2.2" height="3" fill="#b0b0b0"/><rect x="5" y=".6" width="2.2" height="3" fill="#b0b0b0"/><ellipse cx="2.3" cy="5" rx="2" ry="2.4" fill="#a8a8a8"/><ellipse cx="6.5" cy="5" rx="2" ry="2.4" fill="#a8a8a8"/><rect x="3.6" y="2.6" width="1.6" height="1.8" fill="#b8b8b8"/><path d="M5.4,8.2h3M7.2,7l1.4,1.2l-1.4,1.2" stroke="#8a9af0" stroke-width=".7" fill="none"/></svg>
<svg style="left:300.4px;top:80.2px" width="9.8" height="9.4" viewBox="0 0 9.8 9.4"><path d="M1,4.6l3.8,-3.2l4,2l-3.8,3.2z" fill="#c8c8c8" stroke="#9a9a9a" stroke-width=".5"/><path d="M1,4.6v1.8l4,2v-1.8" fill="#b4b4b4" stroke="#9a9a9a" stroke-width=".4"/><path d="M5,8.4l3.8,-3.2v-1.8" fill="#d8d8d8" stroke="#9a9a9a" stroke-width=".4"/><circle cx="3" cy="7.6" r="1.2" fill="#9ab0f0"/></svg>
<svg style="left:324.2px;top:80.2px" width="8.4" height="9.4" viewBox="0 0 8.4 9.4"><circle cx="3.6" cy="3.6" r="3" fill="#e8f0ff" stroke="#111" stroke-width=".9"/><path d="M2,3.6h3.2M3.6,2v3.2" stroke="#000" stroke-width=".8"/><path d="M5.8,5.8l2.2,2.6" stroke="#1c2cc8" stroke-width="1.4"/></svg>
<svg style="left:336.6px;top:80.2px" width="8.4" height="9.4" viewBox="0 0 8.4 9.4"><circle cx="3.6" cy="3.6" r="3" fill="#e8f0ff" stroke="#111" stroke-width=".9"/><path d="M2,3.6h3.2" stroke="#000" stroke-width=".8"/><path d="M5.8,5.8l2.2,2.6" stroke="#1c2cc8" stroke-width="1.4"/></svg>
<svg style="left:348.6px;top:80.2px" width="8.4" height="9.4" viewBox="0 0 8.4 9.4"><circle cx="3.6" cy="3.6" r="3" fill="#1a2a8a" stroke="#111" stroke-width=".9"/><path d="M5.8,5.8l2.2,2.6" stroke="#1a2a8a" stroke-width="1.4"/></svg>
<svg style="left:360.8px;top:80.2px" width="9.4" height="9.4" viewBox="0 0 9.4 9.4"><path d="M.4,8.4h7.6M.4,6.2h7.6" stroke="#d8a800" stroke-width="1"/><rect x="2" y="5.8" width="3.6" height="2.8" fill="#f0c828" stroke="#8a6a00" stroke-width=".4"/><path d="M3.8,5.8V2.8" stroke="#6a5200" stroke-width=".8"/><circle cx="6.6" cy="2.4" r="1.8" fill="#e8f0ff" stroke="#1a2a8a" stroke-width=".8"/><path d="M5.2,3.8l-1.4,1.4" stroke="#1a2a8a" stroke-width=".8"/></svg>
<svg style="left:372.8px;top:80.2px" width="9.4" height="9.4" viewBox="0 0 9.4 9.4"><path d="M.4,8.4h7.6M.4,6.2h7.6" stroke="#d8a800" stroke-width="1"/><rect x="2" y="5.8" width="3.6" height="2.8" fill="#f0c828" stroke="#8a6a00" stroke-width=".4"/><path d="M3.8,5.8V2.8" stroke="#6a5200" stroke-width=".8"/><circle cx="6.2" cy="2.4" r="1.8" fill="#c8d8ff" stroke="#1a2a8a" stroke-width=".8"/><path d="M7.4,3.8l1.4,1.6" stroke="#1a2a8a" stroke-width=".9"/></svg>
<svg style="left:384px;top:80.2px" width="9.6" height="9.6" viewBox="0 0 9.6 9.6"><rect x=".5" y=".5" width="5" height="5.6" fill="#f4f4f4" stroke="#666" stroke-width=".6"/><path d="M1.4,2h3M1.4,3.4h3" stroke="#888" stroke-width=".5"/><circle cx="5.6" cy="5" r="2.4" fill="#c8dcff" stroke="#1a3cd8" stroke-width=".9"/><path d="M7.2,6.8l2,2.2" stroke="#1a3cd8" stroke-width="1.3"/></svg>
<div style="left:406.8px;top:79.6px;width:11.2px;height:10.8px;background:#fafafa;border:1px solid;border-color:#8a8a8a #fdfdfd #fdfdfd #8a8a8a"></div>
<svg style="left:408.4px;top:81.4px" width="8" height="7.4" viewBox="0 0 8 7.4"><path d="M4,.4v6.2M.4,6.6h7.2" stroke="#0a7a0a" stroke-width=".8"/></svg>
<div style="left:421.6px;top:79.6px;width:10.4px;height:10.8px;background:#f0f0f0;border:1px solid;border-color:#8a8a8a #fdfdfd #fdfdfd #8a8a8a"></div>
<svg style="left:423.6px;top:80.8px" width="6.4" height="8.6" viewBox="0 0 6.4 8.6"><rect x=".8" y=".4" width="4.8" height="7.6" fill="#1a2470"/><rect x=".8" y=".4" width="1.4" height="7.6" fill="#3a4ab0"/><path d="M0,8.2h6.4" stroke="#444" stroke-width=".6"/></svg>
<div style="left:436.4px;top:79.6px;width:9.8px;height:10.4px;background:#0a5a0a;border:1px solid #063c06"></div>
<div style="left:451.2px;top:80.4px;width:1px;height:9.599999999999994px;background:#b4b4b4"></div>
<div style="left:452.2px;top:80.4px;width:1px;height:9.599999999999994px;background:#fcfcfc"></div>
<svg style="left:455.8px;top:80.4px" width="9.4" height="9.4" viewBox="0 0 9.4 9.4"><rect x=".4" y=".4" width="8.4" height="8.4" fill="#7a88b8"/><path d="M1.6,.4v8.4M3.4,.4v8.4M5.2,.4v8.4M7,.4v8.4" stroke="#9aa8d0" stroke-width=".6"/><rect x=".4" y=".4" width="8.4" height="8.4" fill="none" stroke="#8a94b8" stroke-width=".5"/></svg>
<svg style="left:469px;top:80.4px" width="8" height="9.4" viewBox="0 0 8 9.4"><path d="M.6,8.6h2.6v-7.6h3.8" stroke="#8ab88a" stroke-width=".9" fill="none"/><rect x="2.2" y="1.4" width="1.6" height="6.8" fill="#8a90a8"/></svg>
<svg style="left:481.6px;top:80.4px" width="8" height="9.4" viewBox="0 0 8 9.4"><path d="M.6,8.6h3v-7.6h3.8" stroke="#a8d4a8" stroke-width=".9" fill="none"/></svg>
<svg style="left:493.6px;top:80.4px" width="8.6" height="9.4" viewBox="0 0 8.6 9.4"><path d="M.6,8.6h3.6v-7.6h3.8" stroke="#a8d4a8" stroke-width=".9" fill="none"/><path d="M4.8,2.6v4.6" stroke="#c4e4c4" stroke-width=".6"/></svg>
<div style="left:0px;top:94.4px;width:118px;height:0.8px;background:#e6e6e6"></div>
<div style="left:0px;top:95px;width:94px;height:205px;background:#f0f0f0;border:1px solid #fafafa;border-right-color:#a9a9a9;"></div>
<div style="left:94px;top:95px;width:3.2px;height:205px;background:linear-gradient(90deg,#b4b4b4,#c6c6c6 60%,#dcdcdc)"></div>
<svg style="left:2px;top:96px;" width="9" height="10" viewBox="0 0 9 10"><rect x="2.6" y="0.6" width="5" height="6.2" fill="#fdfdfd" stroke="#333" stroke-width=".8" transform="skewX(-8)"/><path d="M3.2,2.5h3M3.2,4h3" stroke="#8a8aa0" stroke-width=".6"/><path d="M.4,1l1.3,.6l.6,5" stroke="#222" stroke-width=".8" fill="none"/><circle cx="2.2" cy="7.7" r="1.7" fill="#c40000" stroke="#500" stroke-width=".4"/><circle cx="7" cy="7.7" r="1.7" fill="#c40000" stroke="#500" stroke-width=".4"/><path d="M2.2,7.7H7" stroke="#600" stroke-width=".7"/></svg>
<span class="t" style="left:13.00px;top:97.00px;font-size:6.6px;line-height:8.6px;color:#222;transform:scaleX(0.872);transform-origin:0 0;">sim - Default</span>
<svg style="left:48px;top:99px;" width="21" height="5" viewBox="0 0 21 5"><path d="M0,1.5H4M0,3.5H4" stroke="#888" stroke-width=".7"/><path d="M5,1.5H20M5,3.5H20" stroke="#999" stroke-width=".8" stroke-dasharray="1 1"/></svg>
<svg style="left:69.5px;top:97.5px" width="22.5" height="7.5" viewBox="0 0 24 8"><path d="M1.2,4H6.6M3.9,1.3V6.7" stroke="#111" stroke-width="1"/><rect x="9.3" y="3.4" width="3.4" height="3.2" fill="#fff" stroke="#111" stroke-width=".7"/><path d="M11.6,1.6h2.8v2.8M14.2,1.8l-2.2,2.2" stroke="#111" stroke-width=".8" fill="none"/><path d="M17.6,1.6l4.4,4.8M22,1.6l-4.4,4.8" stroke="#111" stroke-width=".9"/></svg>
<div style="left:1px;top:107px;width:92px;height:9px;background:#f0f0f0;border-top:1px solid #fff;border-bottom:1px solid #aaa;"></div>
<svg style="left:2px;top:109px;" width="5" height="6" viewBox="0 0 5 6"><polygon points="0.3,0.8 4.4,0.8 2.35,5" fill="#333"/></svg>
<div style="left:7px;top:108px;width:1px;height:8px;background:#b4b4b4"></div>
<span class="t" style="left:8.00px;top:108.00px;font-size:6.6px;line-height:8.6px;color:#222;transform:scaleX(0.922);transform-origin:0 0;">Instance</span>
<div style="left:82px;top:108px;width:1px;height:8px;background:#a8a8a8"></div>
<div style="left:83px;top:108px;width:1px;height:8px;background:#fff"></div>
<span class="t" style="left:84.30px;top:108.00px;font-size:6.6px;line-height:8.6px;color:#222;transform:scaleX(0.767);transform-origin:0 0;">Des</span>
<div style="left:1.5px;top:116px;width:92px;height:161px;background:#fff"></div>
<div style="left:2px;top:117.7px;width:91px;height:8px;background:#c6d3e2"></div>
<div style="left:16.6px;top:126px;width:0.8px;height:75.55000000000001px;background:#b9b9b9"></div>
<div style="left:9px;top:121.5px;width:5px;height:0.8px;background:#9a9a9a"></div>
<svg style="left:14px;top:118.6px;" width="6.6" height="6.6" viewBox="0 0 6.6 6.6"><rect width="6.6" height="6.6" fill="#1f40ea"/><rect x="4.092" width="2.508" height="6.6" fill="#3558fa"/><polygon points="0,3.3 3.63,6.6 0,6.6" fill="#0a187c"/><rect y="5.808" width="6.6" height="0.7919999999999999" fill="#0a187c"/><rect x="0.7919999999999999" y="0.66" width="1.9799999999999998" height="1.452" fill="#6f8cff" opacity=".7"/></svg>
<svg style="left:5.1px;top:119.4px;" width="5.0" height="5.0" viewBox="0 0 5.0 5.0"><rect x=".3" y=".3" width="4.4" height="4.4" fill="#fff" stroke="#9a9a9a" stroke-width=".6"/><path d="M1.25,2.5H3.75" stroke="#222" stroke-width=".7"/></svg>
<span class="t" style="left:24.20px;top:118.00px;font-size:6.6px;line-height:8.6px;color:#2a2a2a;transform:scaleX(0.883);transform-origin:0 0;">cpu_tb</span>
<span class="t" style="left:83.80px;top:118.00px;font-size:6.6px;line-height:8.6px;color:#2a2a2a;transform:scaleX(0.865);transform-origin:0 0;clip-path:inset(0 0 0 0);">cpu</span>
<div style="left:16.6px;top:130.35px;width:6.5px;height:0.8px;background:#b9b9b9"></div>
<svg style="left:23.8px;top:127.45px;" width="6.6" height="6.6" viewBox="0 0 6.6 6.6"><rect width="6.6" height="6.6" fill="#1f40ea"/><rect x="4.092" width="2.508" height="6.6" fill="#3558fa"/><polygon points="0,3.3 3.63,6.6 0,6.6" fill="#0a187c"/><rect y="5.808" width="6.6" height="0.7919999999999999" fill="#0a187c"/><rect x="0.7919999999999999" y="0.66" width="1.9799999999999998" height="1.452" fill="#6f8cff" opacity=".7"/></svg>
<svg style="left:14.2px;top:128.25px;" width="5.0" height="5.0" viewBox="0 0 5.0 5.0"><rect x=".3" y=".3" width="4.4" height="4.4" fill="#fff" stroke="#9a9a9a" stroke-width=".6"/><path d="M1.25,2.5H3.75" stroke="#222" stroke-width=".7"/><path d="M2.5,1.25V3.75" stroke="#222" stroke-width=".7"/></svg>
<span class="t" style="left:33.80px;top:127.00px;font-size:6.6px;line-height:8.6px;color:#2a2a2a;transform:scaleX(0.934);transform-origin:0 0;">iromf</span>
<span class="t" style="left:83.80px;top:127.00px;font-size:6.6px;line-height:8.6px;color:#2a2a2a;transform:scaleX(0.836);transform-origin:0 0;clip-path:inset(0 0 0 0);">rom</span>
<div style="left:16.6px;top:139.2px;width:6.5px;height:0.8px;background:#b9b9b9"></div>
<svg style="left:23.8px;top:136.3px;" width="6.6" height="6.6" viewBox="0 0 6.6 6.6"><rect width="6.6" height="6.6" fill="#1f40ea"/><rect x="4.092" width="2.508" height="6.6" fill="#3558fa"/><polygon points="0,3.3 3.63,6.6 0,6.6" fill="#0a187c"/><rect y="5.808" width="6.6" height="0.7919999999999999" fill="#0a187c"/><rect x="0.7919999999999999" y="0.66" width="1.9799999999999998" height="1.452" fill="#6f8cff" opacity=".7"/></svg>
<svg style="left:14.2px;top:137.1px;" width="5.0" height="5.0" viewBox="0 0 5.0 5.0"><rect x=".3" y=".3" width="4.4" height="4.4" fill="#fff" stroke="#9a9a9a" stroke-width=".6"/><path d="M1.25,2.5H3.75" stroke="#222" stroke-width=".7"/><path d="M2.5,1.25V3.75" stroke="#222" stroke-width=".7"/></svg>
<span class="t" style="left:33.80px;top:136.00px;font-size:6.6px;line-height:8.6px;color:#2a2a2a;transform:scaleX(0.857);transform-origin:0 0;">iram</span>
<span class="t" style="left:83.80px;top:136.00px;font-size:6.6px;line-height:8.6px;color:#2a2a2a;transform:scaleX(0.818);transform-origin:0 0;clip-path:inset(0 0 0 0);">ram</span>
<div style="left:16.6px;top:148.04999999999998px;width:6.5px;height:0.8px;background:#b9b9b9"></div>
<svg style="left:23.8px;top:145.15px;" width="6.6" height="6.6" viewBox="0 0 6.6 6.6"><rect width="6.6" height="6.6" fill="#1f40ea"/><rect x="4.092" width="2.508" height="6.6" fill="#3558fa"/><polygon points="0,3.3 3.63,6.6 0,6.6" fill="#0a187c"/><rect y="5.808" width="6.6" height="0.7919999999999999" fill="#0a187c"/><rect x="0.7919999999999999" y="0.66" width="1.9799999999999998" height="1.452" fill="#6f8cff" opacity=".7"/></svg>
<svg style="left:14.2px;top:145.95px;" width="5.0" height="5.0" viewBox="0 0 5.0 5.0"><rect x=".3" y=".3" width="4.4" height="4.4" fill="#fff" stroke="#9a9a9a" stroke-width=".6"/><path d="M1.25,2.5H3.75" stroke="#222" stroke-width=".7"/><path d="M2.5,1.25V3.75" stroke="#222" stroke-width=".7"/></svg>
<span class="t" style="left:33.80px;top:145.00px;font-size:6.6px;line-height:8.6px;color:#2a2a2a;transform:scaleX(0.934);transform-origin:0 0;">itimer1</span>
<span class="t" style="left:83.80px;top:145.00px;font-size:6.6px;line-height:8.6px;color:#2a2a2a;transform:scaleX(0.770);transform-origin:0 0;clip-path:inset(0 0 0 0);">time</span>
<div style="left:16.6px;top:156.9px;width:6.5px;height:0.8px;background:#b9b9b9"></div>
<svg style="left:23.8px;top:154.0px;" width="6.6" height="6.6" viewBox="0 0 6.6 6.6"><rect width="6.6" height="6.6" fill="#1f40ea"/><rect x="4.092" width="2.508" height="6.6" fill="#3558fa"/><polygon points="0,3.3 3.63,6.6 0,6.6" fill="#0a187c"/><rect y="5.808" width="6.6" height="0.7919999999999999" fill="#0a187c"/><rect x="0.7919999999999999" y="0.66" width="1.9799999999999998" height="1.452" fill="#6f8cff" opacity=".7"/></svg>
<svg style="left:14.2px;top:154.8px;" width="5.0" height="5.0" viewBox="0 0 5.0 5.0"><rect x=".3" y=".3" width="4.4" height="4.4" fill="#fff" stroke="#9a9a9a" stroke-width=".6"/><path d="M1.25,2.5H3.75" stroke="#222" stroke-width=".7"/><path d="M2.5,1.25V3.75" stroke="#222" stroke-width=".7"/></svg>
<span class="t" style="left:33.80px;top:154.00px;font-size:6.6px;line-height:8.6px;color:#2a2a2a;transform:scaleX(0.934);transform-origin:0 0;">itimer2</span>
<span class="t" style="left:83.80px;top:154.00px;font-size:6.6px;line-height:8.6px;color:#2a2a2a;transform:scaleX(0.770);transform-origin:0 0;clip-path:inset(0 0 0 0);">time</span>
<div style="left:16.6px;top:165.75px;width:6.5px;height:0.8px;background:#b9b9b9"></div>
<svg style="left:23.8px;top:162.85px;" width="6.6" height="6.6" viewBox="0 0 6.6 6.6"><rect width="6.6" height="6.6" fill="#1f40ea"/><rect x="4.092" width="2.508" height="6.6" fill="#3558fa"/><polygon points="0,3.3 3.63,6.6 0,6.6" fill="#0a187c"/><rect y="5.808" width="6.6" height="0.7919999999999999" fill="#0a187c"/><rect x="0.7919999999999999" y="0.66" width="1.9799999999999998" height="1.452" fill="#6f8cff" opacity=".7"/></svg>
<svg style="left:14.2px;top:163.65px;" width="5.0" height="5.0" viewBox="0 0 5.0 5.0"><rect x=".3" y=".3" width="4.4" height="4.4" fill="#fff" stroke="#9a9a9a" stroke-width=".6"/><path d="M1.25,2.5H3.75" stroke="#222" stroke-width=".7"/><path d="M2.5,1.25V3.75" stroke="#222" stroke-width=".7"/></svg>
<span class="t" style="left:33.80px;top:162.00px;font-size:6.6px;line-height:8.6px;color:#2a2a2a;transform:scaleX(0.867);transform-origin:0 0;">icpu</span>
<span class="t" style="left:83.80px;top:162.00px;font-size:6.6px;line-height:8.6px;color:#2a2a2a;transform:scaleX(0.865);transform-origin:0 0;clip-path:inset(0 0 0 0);">cpu</span>
<div style="left:16.6px;top:174.6px;width:6.5px;height:0.8px;background:#b9b9b9"></div>
<svg style="left:23.5px;top:171.5px;" width="7.0" height="7.0" viewBox="0 0 7.0 7.0"><circle cx="3.5" cy="3.5" r="3.5" fill="#0a26b4"/><circle cx="3.15" cy="2.975" r="2.52" fill="#1c44e0"/><circle cx="2.52" cy="2.17" r="1.26" fill="#7fa4ff"/><circle cx="2.31" cy="1.9600000000000002" r="0.5950000000000001" fill="#f0f5ff"/></svg>
<span class="t" style="left:33.80px;top:171.00px;font-size:6.6px;line-height:8.6px;color:#2a2a2a;transform:scaleX(0.920);transform-origin:0 0;">nrstp</span>
<span class="t" style="left:83.80px;top:171.00px;font-size:6.6px;line-height:8.6px;color:#2a2a2a;transform:scaleX(0.865);transform-origin:0 0;clip-path:inset(0 0 0 0);">cpu</span>
<div style="left:16.6px;top:183.45px;width:6.5px;height:0.8px;background:#b9b9b9"></div>
<svg style="left:23.5px;top:180.35px;" width="7.0" height="7.0" viewBox="0 0 7.0 7.0"><circle cx="3.5" cy="3.5" r="3.5" fill="#0a26b4"/><circle cx="3.15" cy="2.975" r="2.52" fill="#1c44e0"/><circle cx="2.52" cy="2.17" r="1.26" fill="#7fa4ff"/><circle cx="2.31" cy="1.9600000000000002" r="0.5950000000000001" fill="#f0f5ff"/></svg>
<span class="t" style="left:33.80px;top:180.00px;font-size:6.6px;line-height:8.6px;color:#2a2a2a;transform:scaleX(0.895);transform-origin:0 0;">clkp</span>
<span class="t" style="left:83.80px;top:180.00px;font-size:6.6px;line-height:8.6px;color:#2a2a2a;transform:scaleX(0.865);transform-origin:0 0;clip-path:inset(0 0 0 0);">cpu</span>
<div style="left:16.6px;top:192.29999999999998px;width:6.5px;height:0.8px;background:#b9b9b9"></div>
<svg style="left:23.5px;top:189.2px;" width="7.0" height="7.0" viewBox="0 0 7.0 7.0"><circle cx="3.5" cy="3.5" r="3.5" fill="#0a26b4"/><circle cx="3.15" cy="2.975" r="2.52" fill="#1c44e0"/><circle cx="2.52" cy="2.17" r="1.26" fill="#7fa4ff"/><circle cx="2.31" cy="1.9600000000000002" r="0.5950000000000001" fill="#f0f5ff"/></svg>
<span class="t" style="left:33.80px;top:189.00px;font-size:6.6px;line-height:8.6px;color:#2a2a2a;transform:scaleX(0.891);transform-origin:0 0;">line__163</span>
<span class="t" style="left:83.80px;top:189.00px;font-size:6.6px;line-height:8.6px;color:#2a2a2a;transform:scaleX(0.865);transform-origin:0 0;clip-path:inset(0 0 0 0);">cpu</span>
<div style="left:16.6px;top:201.15px;width:6.5px;height:0.8px;background:#b9b9b9"></div>
<svg style="left:23.5px;top:198.05px;" width="7.0" height="7.0" viewBox="0 0 7.0 7.0"><circle cx="3.5" cy="3.5" r="3.5" fill="#0a26b4"/><circle cx="3.15" cy="2.975" r="2.52" fill="#1c44e0"/><circle cx="2.52" cy="2.17" r="1.26" fill="#7fa4ff"/><circle cx="2.31" cy="1.9600000000000002" r="0.5950000000000001" fill="#f0f5ff"/></svg>
<span class="t" style="left:33.80px;top:198.00px;font-size:6.6px;line-height:8.6px;color:#2a2a2a;transform:scaleX(0.891);transform-origin:0 0;">line__164</span>
<span class="t" style="left:83.80px;top:198.00px;font-size:6.6px;line-height:8.6px;color:#2a2a2a;transform:scaleX(0.865);transform-origin:0 0;clip-path:inset(0 0 0 0);">cpu</span>
<svg style="left:14px;top:207.1px;" width="6.6" height="6.6" viewBox="0 0 6.6 6.6"><rect width="6.6" height="6.6" fill="#1f40ea"/><rect x="4.092" width="2.508" height="6.6" fill="#3558fa"/><polygon points="0,3.3 3.63,6.6 0,6.6" fill="#0a187c"/><rect y="5.808" width="6.6" height="0.7919999999999999" fill="#0a187c"/><rect x="0.7919999999999999" y="0.66" width="1.9799999999999998" height="1.452" fill="#6f8cff" opacity=".7"/></svg>
<span class="t" style="left:24.20px;top:207.00px;font-size:6.6px;line-height:8.6px;color:#2a2a2a;transform:scaleX(0.915);transform-origin:0 0;">standard</span>
<span class="t" style="left:83.80px;top:207.00px;font-size:6.6px;line-height:8.6px;color:#2a2a2a;transform:scaleX(0.770);transform-origin:0 0;clip-path:inset(0 0 0 0);">stan</span>
<svg style="left:14px;top:215.95px;" width="6.6" height="6.6" viewBox="0 0 6.6 6.6"><rect width="6.6" height="6.6" fill="#1f40ea"/><rect x="4.092" width="2.508" height="6.6" fill="#3558fa"/><polygon points="0,3.3 3.63,6.6 0,6.6" fill="#0a187c"/><rect y="5.808" width="6.6" height="0.7919999999999999" fill="#0a187c"/><rect x="0.7919999999999999" y="0.66" width="1.9799999999999998" height="1.452" fill="#6f8cff" opacity=".7"/></svg>
<span class="t" style="left:24.20px;top:215.00px;font-size:6.6px;line-height:8.6px;color:#2a2a2a;transform:scaleX(0.951);transform-origin:0 0;">textio</span>
<span class="t" style="left:83.80px;top:215.00px;font-size:6.6px;line-height:8.6px;color:#2a2a2a;transform:scaleX(0.902);transform-origin:0 0;clip-path:inset(0 0 0 0);">text</span>
<svg style="left:14px;top:224.8px;" width="6.6" height="6.6" viewBox="0 0 6.6 6.6"><rect width="6.6" height="6.6" fill="#1f40ea"/><rect x="4.092" width="2.508" height="6.6" fill="#3558fa"/><polygon points="0,3.3 3.63,6.6 0,6.6" fill="#0a187c"/><rect y="5.808" width="6.6" height="0.7919999999999999" fill="#0a187c"/><rect x="0.7919999999999999" y="0.66" width="1.9799999999999998" height="1.452" fill="#6f8cff" opacity=".7"/></svg>
<span class="t" style="left:24.20px;top:224.00px;font-size:6.6px;line-height:8.6px;color:#2a2a2a;transform:scaleX(0.911);transform-origin:0 0;">std_logic_1164</span>
<span class="t" style="left:83.80px;top:224.00px;font-size:6.6px;line-height:8.6px;color:#2a2a2a;transform:scaleX(0.770);transform-origin:0 0;clip-path:inset(0 0 0 0);">std_</span>
<svg style="left:14px;top:233.65px;" width="6.6" height="6.6" viewBox="0 0 6.6 6.6"><rect width="6.6" height="6.6" fill="#1f40ea"/><rect x="4.092" width="2.508" height="6.6" fill="#3558fa"/><polygon points="0,3.3 3.63,6.6 0,6.6" fill="#0a187c"/><rect y="5.808" width="6.6" height="0.7919999999999999" fill="#0a187c"/><rect x="0.7919999999999999" y="0.66" width="1.9799999999999998" height="1.452" fill="#6f8cff" opacity=".7"/></svg>
<span class="t" style="left:24.20px;top:233.00px;font-size:6.6px;line-height:8.6px;color:#2a2a2a;transform:scaleX(0.876);transform-origin:0 0;">numeric_std</span>
<span class="t" style="left:83.80px;top:233.00px;font-size:6.6px;line-height:8.6px;color:#2a2a2a;transform:scaleX(0.748);transform-origin:0 0;clip-path:inset(0 0 0 0);">num</span>
<svg style="left:14px;top:242.5px;" width="6.6" height="6.6" viewBox="0 0 6.6 6.6"><rect width="6.6" height="6.6" fill="#1f40ea"/><rect x="4.092" width="2.508" height="6.6" fill="#3558fa"/><polygon points="0,3.3 3.63,6.6 0,6.6" fill="#0a187c"/><rect y="5.808" width="6.6" height="0.7919999999999999" fill="#0a187c"/><rect x="0.7919999999999999" y="0.66" width="1.9799999999999998" height="1.452" fill="#6f8cff" opacity=".7"/></svg>
<span class="t" style="left:24.20px;top:242.00px;font-size:6.6px;line-height:8.6px;color:#2a2a2a;transform:scaleX(0.903);transform-origin:0 0;">math_real</span>
<span class="t" style="left:83.80px;top:242.00px;font-size:6.6px;line-height:8.6px;color:#2a2a2a;transform:scaleX(0.845);transform-origin:0 0;clip-path:inset(0 0 0 0);">mat</span>
<div style="left:1.5px;top:277px;width:92px;height:10px;background:#f7f7f7"></div>
<svg style="left:1.5px;top:277.5px;" width="8.5" height="9.5" viewBox="0 0 8.5 9.5"><rect x=".5" y=".5" width="7.5" height="8.5" fill="#f0f0f0" stroke="#fdfdfd"/><path d="M8.0,0V9.0H0" stroke="#8c8c8c" fill="none"/><polygon points="5.27,3.05 5.27,6.45 2.8899999999999997,4.75" fill="#000"/></svg>
<svg style="left:84.5px;top:277.5px;" width="8.5" height="9.5" viewBox="0 0 8.5 9.5"><rect x=".5" y=".5" width="7.5" height="8.5" fill="#f0f0f0" stroke="#fdfdfd"/><path d="M8.0,0V9.0H0" stroke="#8c8c8c" fill="none"/><polygon points="3.23,3.05 3.23,6.45 5.61,4.75" fill="#000"/></svg>
<div style="left:10px;top:277.5px;width:21.5px;height:9.5px;background:#f0f0f0;border:1px solid;border-color:#fff #8c8c8c #8c8c8c #fff"></div>
<div style="left:0px;top:288px;width:94px;height:12px;background:#e8e8e8"></div>
<div style="left:0px;top:288.5px;width:47.5px;height:10.5px;background:#d6d6d6;border:1px solid #9a9a9a;border-top:none;border-left:none"></div>
<svg style="left:0px;top:291px;" width="3" height="6" viewBox="0 0 3 6"><rect width="1.5" height="3" fill="#d22"/><rect y="3" width="1.5" height="3" fill="#2a2"/><rect x="1.5" y="1" width="1.2" height="4" fill="#cc2"/></svg>
<span class="t" style="left:6.00px;top:290.00px;font-size:6.6px;line-height:8.6px;color:#222;transform:scaleX(0.863);transform-origin:0 0;">Memory List</span>
<span class="t" style="left:41.20px;top:289.00px;font-size:7.5px;line-height:9.5px;color:#9a9a9a;">×</span>
<div style="left:48px;top:288px;width:33px;height:11.5px;background:#f4f4f4;border:1px solid #8e8e8e;border-top:none;border-radius:0 0 2px 2px"></div>
<svg style="left:51px;top:289px;" width="10" height="10" viewBox="0 0 10 10"><rect x="3" y="0.6" width="5.2" height="6.2" fill="#fdfdfd" stroke="#333" stroke-width=".8" transform="skewX(-8)"/><path d="M3.6,2.5h3M3.6,4h3" stroke="#8a8aa0" stroke-width=".6"/><path d="M.6,1l1.4,.6l.6,5" stroke="#222" stroke-width=".8" fill="none"/><circle cx="2.5" cy="7.8" r="1.8" fill="#c40000" stroke="#500" stroke-width=".4"/><circle cx="7.5" cy="7.8" r="1.8" fill="#c40000" stroke="#500" stroke-width=".4"/><path d="M2.5,7.8H7.5" stroke="#600" stroke-width=".7"/></svg>
<span class="t" style="left:61.70px;top:290.00px;font-size:6.6px;line-height:8.6px;color:#222;transform:scaleX(0.828);transform-origin:0 0;">sim</span>
<span class="t" style="left:73.60px;top:289.00px;font-size:7.5px;line-height:9.5px;color:#9a9a9a;">×</span>
<svg style="left:83px;top:289.5px;" width="5.5" height="8" viewBox="0 0 5.5 8"><rect x=".5" y=".5" width="4.5" height="7" fill="#f0f0f0" stroke="#fdfdfd"/><path d="M5.0,0V7.5H0" stroke="#8c8c8c" fill="none"/><polygon points="3.77,2.3 3.77,5.7 1.39,4.0" fill="#000"/></svg>
<svg style="left:88.5px;top:289.5px;" width="5.5" height="8" viewBox="0 0 5.5 8"><rect x=".5" y=".5" width="4.5" height="7" fill="#f0f0f0" stroke="#fdfdfd"/><path d="M5.0,0V7.5H0" stroke="#8c8c8c" fill="none"/><polygon points="1.73,2.3 1.73,5.7 4.11,4.0" fill="#666"/></svg>
<div style="left:98px;top:95px;width:76.5px;height:205px;background:#f0f0f0;border:1px solid #fafafa;border-right-color:#c4c4c4;"></div>
<div style="left:174.3px;top:95px;width:2.6px;height:205px;background:linear-gradient(90deg,#b4b4b4,#c6c6c6 60%,#dcdcdc)"></div>
<svg style="left:99.6px;top:96.2px;" width="9.6" height="9.4" viewBox="0 0 9.6 9.4"><polygon points="3.2,0 5.2,1.7 3.2,3.6 1.2,1.7" fill="#c020d8"/><polygon points="3.2,3 6.4,6 3.2,9.2 0,6" fill="#1848f4"/><circle cx="5.9" cy="3.6" r="1.8" fill="#14d4f0"/><polygon points="6.2,4.6 9.4,4 8.6,7.6 6,6.8" fill="#1fae3a"/></svg>
<span class="t" style="left:110.50px;top:97.00px;font-size:6.6px;line-height:8.6px;color:#222;transform:scaleX(0.894);transform-origin:0 0;">Objects</span>
<svg style="left:133px;top:99px;" width="17" height="5" viewBox="0 0 17 5"><path d="M0,1.5H16M0,3.5H16" stroke="#999" stroke-width=".8" stroke-dasharray="1 1"/></svg>
<svg style="left:148.8px;top:97.5px" width="22.5" height="7.5" viewBox="0 0 24 8"><path d="M1.2,4H6.6M3.9,1.3V6.7" stroke="#111" stroke-width="1"/><rect x="9.3" y="3.4" width="3.4" height="3.2" fill="#fff" stroke="#111" stroke-width=".7"/><path d="M11.6,1.6h2.8v2.8M14.2,1.8l-2.2,2.2" stroke="#111" stroke-width=".8" fill="none"/><path d="M17.6,1.6l4.4,4.8M22,1.6l-4.4,4.8" stroke="#111" stroke-width=".9"/></svg>
<div style="left:99px;top:107px;width:66px;height:9px;background:#f0f0f0;border-top:1px solid #fff;"></div>
<svg style="left:100.5px;top:109px;" width="5" height="6" viewBox="0 0 5 6"><polygon points="0.3,0.8 4.4,0.8 2.35,5" fill="#333"/></svg>
<div style="left:104.8px;top:108px;width:1px;height:8px;background:#b4b4b4"></div>
<span class="t" style="left:106.00px;top:108.00px;font-size:6.6px;line-height:8.6px;color:#222;transform:scaleX(0.825);transform-origin:0 0;">Nam</span>
<div style="left:118px;top:107.5px;width:1px;height:8.5px;background:#999"></div>
<svg style="left:119.5px;top:108px;" width="7" height="8" viewBox="0 0 7 8"><path d="M1,1v6M3.5,1v6M2,3h3M5.5,2v4" stroke="#444" stroke-width=".7" fill="none"/></svg>
<div style="left:127.5px;top:107.5px;width:1px;height:8.5px;background:#999"></div>
<div style="left:130px;top:109.3px;width:3.8px;height:3.8px;background:#f0901c;border:.6px solid #a04010"></div>
<span class="t" style="left:135.50px;top:108.00px;font-size:6.6px;line-height:8.6px;color:#b0b0b0;transform:scaleX(0.909);transform-origin:0 0;">Now</span>
<div style="left:149px;top:107.5px;width:1px;height:8.5px;background:#999"></div>
<svg style="left:150.5px;top:108px;" width="7" height="8" viewBox="0 0 7 8"><path d="M1.5,1v6M0.5,3h2.5M4.5,1v6M3.5,2l1,-1l1,1" stroke="#444" stroke-width=".7" fill="none"/></svg>
<div style="left:157.5px;top:107.5px;width:1px;height:8.5px;background:#999"></div>
<svg style="left:159px;top:108.5px;" width="5" height="7" viewBox="0 0 5 7"><polygon points="1,0.5 4.2,3.5 1,6.5" fill="#000"/></svg>
<div style="left:99.5px;top:115.5px;width:63.5px;height:173.5px;background:#4c5a8c"></div>
<svg style="left:102.7px;top:119.3px;" width="5.4" height="5.4" viewBox="0 0 5.4 5.4"><rect x=".3" y=".3" width="4.800000000000001" height="4.800000000000001" fill="#fff" stroke="#dcdcdc" stroke-width=".6"/><path d="M1.35,2.7H4.050000000000001" stroke="#222" stroke-width=".7"/><path d="M2.7,1.35V4.050000000000001" stroke="#222" stroke-width=".7"/></svg>
<div style="left:107.6px;top:121.60000000000001px;width:4px;height:0.6px;background:#9aa6cc"></div>
<svg style="left:111.0px;top:118.3px;" width="7.2" height="7.2" viewBox="0 0 7.2 7.2"><polygon points="3.6,0 7.2,3.6 3.6,7.2 0,3.6" fill="#1f4ee6"/><polygon points="3.6,0 7.2,3.6 3.6,3.6" fill="#3f74ff"/><polygon points="3.6,0 3.6,3.6 0,3.6" fill="#7fa8ff"/><polygon points="3.6,7.2 7.2,3.6 3.6,3.6" fill="#0a2fb0"/><polygon points="1.9800000000000002,2.7 3.6,1.08 4.14,2.7" fill="#dfe9ff" opacity=".85"/></svg>
<span class="t" style="left:121.50px;top:118.00px;font-size:6.6px;line-height:8.6px;color:#f2f4fa;transform:scaleX(0.973);transform-origin:0 0;text-shadow:.3px 0 0 #f2f4fa,.5px .5px 0 #232c50;">t2do</span>
<svg style="left:102.7px;top:128.15px;" width="5.4" height="5.4" viewBox="0 0 5.4 5.4"><rect x=".3" y=".3" width="4.800000000000001" height="4.800000000000001" fill="#fff" stroke="#dcdcdc" stroke-width=".6"/><path d="M1.35,2.7H4.050000000000001" stroke="#222" stroke-width=".7"/><path d="M2.7,1.35V4.050000000000001" stroke="#222" stroke-width=".7"/></svg>
<div style="left:107.6px;top:130.45px;width:4px;height:0.6px;background:#9aa6cc"></div>
<svg style="left:111.0px;top:127.15px;" width="7.2" height="7.2" viewBox="0 0 7.2 7.2"><polygon points="3.6,0 7.2,3.6 3.6,7.2 0,3.6" fill="#1f4ee6"/><polygon points="3.6,0 7.2,3.6 3.6,3.6" fill="#3f74ff"/><polygon points="3.6,0 3.6,3.6 0,3.6" fill="#7fa8ff"/><polygon points="3.6,7.2 7.2,3.6 3.6,3.6" fill="#0a2fb0"/><polygon points="1.9800000000000002,2.7 3.6,1.08 4.14,2.7" fill="#dfe9ff" opacity=".85"/></svg>
<span class="t" style="left:121.50px;top:127.00px;font-size:6.6px;line-height:8.6px;color:#f2f4fa;transform:scaleX(0.973);transform-origin:0 0;text-shadow:.3px 0 0 #f2f4fa,.5px .5px 0 #232c50;">t1do</span>
<svg style="left:102.7px;top:137.0px;" width="5.4" height="5.4" viewBox="0 0 5.4 5.4"><rect x=".3" y=".3" width="4.800000000000001" height="4.800000000000001" fill="#fff" stroke="#dcdcdc" stroke-width=".6"/><path d="M1.35,2.7H4.050000000000001" stroke="#222" stroke-width=".7"/><path d="M2.7,1.35V4.050000000000001" stroke="#222" stroke-width=".7"/></svg>
<div style="left:107.6px;top:139.29999999999998px;width:4px;height:0.6px;background:#9aa6cc"></div>
<svg style="left:111.0px;top:136.0px;" width="7.2" height="7.2" viewBox="0 0 7.2 7.2"><polygon points="3.6,0 7.2,3.6 3.6,7.2 0,3.6" fill="#1f4ee6"/><polygon points="3.6,0 7.2,3.6 3.6,3.6" fill="#3f74ff"/><polygon points="3.6,0 3.6,3.6 0,3.6" fill="#7fa8ff"/><polygon points="3.6,7.2 7.2,3.6 3.6,3.6" fill="#0a2fb0"/><polygon points="1.9800000000000002,2.7 3.6,1.08 4.14,2.7" fill="#dfe9ff" opacity=".85"/></svg>
<span class="t" style="left:121.50px;top:136.00px;font-size:6.6px;line-height:8.6px;color:#f2f4fa;transform:scaleX(0.944);transform-origin:0 0;text-shadow:.3px 0 0 #f2f4fa,.5px .5px 0 #232c50;">rdo</span>
<div style="left:99.5px;top:144.35px;width:63.5px;height:8.0px;background:#c5d4e4"></div>
<svg style="left:111.0px;top:144.85px;" width="7.2" height="7.2" viewBox="0 0 7.2 7.2"><polygon points="3.6,0 7.2,3.6 3.6,7.2 0,3.6" fill="#1f4ee6"/><polygon points="3.6,0 7.2,3.6 3.6,3.6" fill="#3f74ff"/><polygon points="3.6,0 3.6,3.6 0,3.6" fill="#7fa8ff"/><polygon points="3.6,7.2 7.2,3.6 3.6,3.6" fill="#0a2fb0"/><polygon points="1.9800000000000002,2.7 3.6,1.08 4.14,2.7" fill="#dfe9ff" opacity=".85"/></svg>
<span class="t" style="left:121.50px;top:145.00px;font-size:6.6px;line-height:8.6px;color:#6e7890;transform:scaleX(0.909);transform-origin:0 0;">pwm2</span>
<div style="left:99.5px;top:153.20000000000002px;width:63.5px;height:8.0px;background:#c5d4e4"></div>
<svg style="left:111.0px;top:153.7px;" width="7.2" height="7.2" viewBox="0 0 7.2 7.2"><polygon points="3.6,0 7.2,3.6 3.6,7.2 0,3.6" fill="#1f4ee6"/><polygon points="3.6,0 7.2,3.6 3.6,3.6" fill="#3f74ff"/><polygon points="3.6,0 3.6,3.6 0,3.6" fill="#7fa8ff"/><polygon points="3.6,7.2 7.2,3.6 3.6,3.6" fill="#0a2fb0"/><polygon points="1.9800000000000002,2.7 3.6,1.08 4.14,2.7" fill="#dfe9ff" opacity=".85"/></svg>
<span class="t" style="left:121.50px;top:154.00px;font-size:6.6px;line-height:8.6px;color:#6e7890;transform:scaleX(0.909);transform-origin:0 0;">pwm1</span>
<svg style="left:111.0px;top:162.55px;" width="7.2" height="7.2" viewBox="0 0 7.2 7.2"><polygon points="3.6,0 7.2,3.6 3.6,7.2 0,3.6" fill="#1f4ee6"/><polygon points="3.6,0 7.2,3.6 3.6,3.6" fill="#3f74ff"/><polygon points="3.6,0 3.6,3.6 0,3.6" fill="#7fa8ff"/><polygon points="3.6,7.2 7.2,3.6 3.6,3.6" fill="#0a2fb0"/><polygon points="1.9800000000000002,2.7 3.6,1.08 4.14,2.7" fill="#dfe9ff" opacity=".85"/></svg>
<span class="t" style="left:121.50px;top:162.00px;font-size:6.6px;line-height:8.6px;color:#f2f4fa;transform:scaleX(0.893);transform-origin:0 0;text-shadow:.3px 0 0 #f2f4fa,.5px .5px 0 #232c50;">nwr</span>
<svg style="left:111.0px;top:171.4px;" width="7.2" height="7.2" viewBox="0 0 7.2 7.2"><polygon points="3.6,0 7.2,3.6 3.6,7.2 0,3.6" fill="#1f4ee6"/><polygon points="3.6,0 7.2,3.6 3.6,3.6" fill="#3f74ff"/><polygon points="3.6,0 3.6,3.6 0,3.6" fill="#7fa8ff"/><polygon points="3.6,7.2 7.2,3.6 3.6,3.6" fill="#0a2fb0"/><polygon points="1.9800000000000002,2.7 3.6,1.08 4.14,2.7" fill="#dfe9ff" opacity=".85"/></svg>
<span class="t" style="left:121.50px;top:171.00px;font-size:6.6px;line-height:8.6px;color:#f2f4fa;transform:scaleX(0.909);transform-origin:0 0;text-shadow:.3px 0 0 #f2f4fa,.5px .5px 0 #232c50;">nrst</span>
<svg style="left:102.7px;top:181.25px;" width="5.4" height="5.4" viewBox="0 0 5.4 5.4"><rect x=".3" y=".3" width="4.800000000000001" height="4.800000000000001" fill="#fff" stroke="#dcdcdc" stroke-width=".6"/><path d="M1.35,2.7H4.050000000000001" stroke="#222" stroke-width=".7"/><path d="M2.7,1.35V4.050000000000001" stroke="#222" stroke-width=".7"/></svg>
<div style="left:107.6px;top:183.54999999999998px;width:4px;height:0.6px;background:#9aa6cc"></div>
<svg style="left:111.0px;top:180.25px;" width="7.2" height="7.2" viewBox="0 0 7.2 7.2"><polygon points="3.6,0 7.2,3.6 3.6,7.2 0,3.6" fill="#1f4ee6"/><polygon points="3.6,0 7.2,3.6 3.6,3.6" fill="#3f74ff"/><polygon points="3.6,0 3.6,3.6 0,3.6" fill="#7fa8ff"/><polygon points="3.6,7.2 7.2,3.6 3.6,3.6" fill="#0a2fb0"/><polygon points="1.9800000000000002,2.7 3.6,1.08 4.14,2.7" fill="#dfe9ff" opacity=".85"/></svg>
<span class="t" style="left:121.50px;top:180.00px;font-size:6.6px;line-height:8.6px;color:#f2f4fa;transform:scaleX(0.896);transform-origin:0 0;text-shadow:.3px 0 0 #f2f4fa,.5px .5px 0 #232c50;">mdo</span>
<svg style="left:102.7px;top:190.1px;" width="5.4" height="5.4" viewBox="0 0 5.4 5.4"><rect x=".3" y=".3" width="4.800000000000001" height="4.800000000000001" fill="#fff" stroke="#dcdcdc" stroke-width=".6"/><path d="M1.35,2.7H4.050000000000001" stroke="#222" stroke-width=".7"/><path d="M2.7,1.35V4.050000000000001" stroke="#222" stroke-width=".7"/></svg>
<div style="left:107.6px;top:192.39999999999998px;width:4px;height:0.6px;background:#9aa6cc"></div>
<svg style="left:111.0px;top:189.1px;" width="7.2" height="7.2" viewBox="0 0 7.2 7.2"><polygon points="3.6,0 7.2,3.6 3.6,7.2 0,3.6" fill="#1f4ee6"/><polygon points="3.6,0 7.2,3.6 3.6,3.6" fill="#3f74ff"/><polygon points="3.6,0 3.6,3.6 0,3.6" fill="#7fa8ff"/><polygon points="3.6,7.2 7.2,3.6 3.6,3.6" fill="#0a2fb0"/><polygon points="1.9800000000000002,2.7 3.6,1.08 4.14,2.7" fill="#dfe9ff" opacity=".85"/></svg>
<span class="t" style="left:121.50px;top:189.00px;font-size:6.6px;line-height:8.6px;color:#f2f4fa;transform:scaleX(0.918);transform-origin:0 0;text-shadow:.3px 0 0 #f2f4fa,.5px .5px 0 #232c50;">cpudo</span>
<svg style="left:102.7px;top:198.95px;" width="5.4" height="5.4" viewBox="0 0 5.4 5.4"><rect x=".3" y=".3" width="4.800000000000001" height="4.800000000000001" fill="#fff" stroke="#dcdcdc" stroke-width=".6"/><path d="M1.35,2.7H4.050000000000001" stroke="#222" stroke-width=".7"/><path d="M2.7,1.35V4.050000000000001" stroke="#222" stroke-width=".7"/></svg>
<div style="left:107.6px;top:201.25px;width:4px;height:0.6px;background:#9aa6cc"></div>
<svg style="left:111.0px;top:197.95px;" width="7.2" height="7.2" viewBox="0 0 7.2 7.2"><polygon points="3.6,0 7.2,3.6 3.6,7.2 0,3.6" fill="#1f4ee6"/><polygon points="3.6,0 7.2,3.6 3.6,3.6" fill="#3f74ff"/><polygon points="3.6,0 3.6,3.6 0,3.6" fill="#7fa8ff"/><polygon points="3.6,7.2 7.2,3.6 3.6,3.6" fill="#0a2fb0"/><polygon points="1.9800000000000002,2.7 3.6,1.08 4.14,2.7" fill="#dfe9ff" opacity=".85"/></svg>
<span class="t" style="left:121.50px;top:198.00px;font-size:6.6px;line-height:8.6px;color:#f2f4fa;transform:scaleX(0.919);transform-origin:0 0;text-shadow:.3px 0 0 #f2f4fa,.5px .5px 0 #232c50;">cpudi</span>
<svg style="left:111.0px;top:206.8px;" width="7.2" height="7.2" viewBox="0 0 7.2 7.2"><polygon points="3.6,0 7.2,3.6 3.6,7.2 0,3.6" fill="#1f4ee6"/><polygon points="3.6,0 7.2,3.6 3.6,3.6" fill="#3f74ff"/><polygon points="3.6,0 3.6,3.6 0,3.6" fill="#7fa8ff"/><polygon points="3.6,7.2 7.2,3.6 3.6,3.6" fill="#0a2fb0"/><polygon points="1.9800000000000002,2.7 3.6,1.08 4.14,2.7" fill="#dfe9ff" opacity=".85"/></svg>
<span class="t" style="left:121.50px;top:207.00px;font-size:6.6px;line-height:8.6px;color:#f2f4fa;transform:scaleX(0.806);transform-origin:0 0;text-shadow:.3px 0 0 #f2f4fa,.5px .5px 0 #232c50;">clk</span>
<svg style="left:102.7px;top:216.65px;" width="5.4" height="5.4" viewBox="0 0 5.4 5.4"><rect x=".3" y=".3" width="4.800000000000001" height="4.800000000000001" fill="#fff" stroke="#dcdcdc" stroke-width=".6"/><path d="M1.35,2.7H4.050000000000001" stroke="#222" stroke-width=".7"/><path d="M2.7,1.35V4.050000000000001" stroke="#222" stroke-width=".7"/></svg>
<div style="left:107.6px;top:218.95px;width:4px;height:0.6px;background:#9aa6cc"></div>
<svg style="left:111.0px;top:215.65px;" width="7.2" height="7.2" viewBox="0 0 7.2 7.2"><polygon points="3.6,0 7.2,3.6 3.6,7.2 0,3.6" fill="#1f4ee6"/><polygon points="3.6,0 7.2,3.6 3.6,3.6" fill="#3f74ff"/><polygon points="3.6,0 3.6,3.6 0,3.6" fill="#7fa8ff"/><polygon points="3.6,7.2 7.2,3.6 3.6,3.6" fill="#0a2fb0"/><polygon points="1.9800000000000002,2.7 3.6,1.08 4.14,2.7" fill="#dfe9ff" opacity=".85"/></svg>
<span class="t" style="left:121.50px;top:215.00px;font-size:6.6px;line-height:8.6px;color:#f2f4fa;transform:scaleX(0.946);transform-origin:0 0;text-shadow:.3px 0 0 #f2f4fa,.5px .5px 0 #232c50;">addr</span>
<svg style="left:111.0px;top:224.5px;" width="7.2" height="7.2" viewBox="0 0 7.2 7.2"><polygon points="3.6,0 7.2,3.6 3.6,7.2 0,3.6" fill="#1f4ee6"/><polygon points="3.6,0 7.2,3.6 3.6,3.6" fill="#3f74ff"/><polygon points="3.6,0 3.6,3.6 0,3.6" fill="#7fa8ff"/><polygon points="3.6,7.2 7.2,3.6 3.6,3.6" fill="#0a2fb0"/><polygon points="1.9800000000000002,2.7 3.6,1.08 4.14,2.7" fill="#dfe9ff" opacity=".85"/></svg>
<span class="t" style="left:121.50px;top:224.00px;font-size:6.6px;line-height:8.6px;color:#f2f4fa;transform:scaleX(0.944);transform-origin:0 0;text-shadow:.3px 0 0 #f2f4fa,.5px .5px 0 #232c50;">ackt2c</span>
<svg style="left:111.0px;top:233.35px;" width="7.2" height="7.2" viewBox="0 0 7.2 7.2"><polygon points="3.6,0 7.2,3.6 3.6,7.2 0,3.6" fill="#1f4ee6"/><polygon points="3.6,0 7.2,3.6 3.6,3.6" fill="#3f74ff"/><polygon points="3.6,0 3.6,3.6 0,3.6" fill="#7fa8ff"/><polygon points="3.6,7.2 7.2,3.6 3.6,3.6" fill="#0a2fb0"/><polygon points="1.9800000000000002,2.7 3.6,1.08 4.14,2.7" fill="#dfe9ff" opacity=".85"/></svg>
<span class="t" style="left:121.50px;top:233.00px;font-size:6.6px;line-height:8.6px;color:#f2f4fa;transform:scaleX(0.944);transform-origin:0 0;text-shadow:.3px 0 0 #f2f4fa,.5px .5px 0 #232c50;">ackt1c</span>
<svg style="left:111.0px;top:242.2px;" width="7.2" height="7.2" viewBox="0 0 7.2 7.2"><polygon points="3.6,0 7.2,3.6 3.6,7.2 0,3.6" fill="#1f4ee6"/><polygon points="3.6,0 7.2,3.6 3.6,3.6" fill="#3f74ff"/><polygon points="3.6,0 3.6,3.6 0,3.6" fill="#7fa8ff"/><polygon points="3.6,7.2 7.2,3.6 3.6,3.6" fill="#0a2fb0"/><polygon points="1.9800000000000002,2.7 3.6,1.08 4.14,2.7" fill="#dfe9ff" opacity=".85"/></svg>
<span class="t" style="left:121.50px;top:242.00px;font-size:6.6px;line-height:8.6px;color:#f2f4fa;transform:scaleX(0.889);transform-origin:0 0;text-shadow:.3px 0 0 #f2f4fa,.5px .5px 0 #232c50;">acksc</span>
<svg style="left:111.0px;top:251.05px;" width="7.2" height="7.2" viewBox="0 0 7.2 7.2"><polygon points="3.6,0 7.2,3.6 3.6,7.2 0,3.6" fill="#1f4ee6"/><polygon points="3.6,0 7.2,3.6 3.6,3.6" fill="#3f74ff"/><polygon points="3.6,0 3.6,3.6 0,3.6" fill="#7fa8ff"/><polygon points="3.6,7.2 7.2,3.6 3.6,3.6" fill="#0a2fb0"/><polygon points="1.9800000000000002,2.7 3.6,1.08 4.14,2.7" fill="#dfe9ff" opacity=".85"/></svg>
<span class="t" style="left:121.50px;top:251.00px;font-size:6.6px;line-height:8.6px;color:#f2f4fa;transform:scaleX(0.888);transform-origin:0 0;text-shadow:.3px 0 0 #f2f4fa,.5px .5px 0 #232c50;">ackrc</span>
<svg style="left:111.0px;top:259.9px;" width="7.2" height="7.2" viewBox="0 0 7.2 7.2"><polygon points="3.6,0 7.2,3.6 3.6,7.2 0,3.6" fill="#1f4ee6"/><polygon points="3.6,0 7.2,3.6 3.6,3.6" fill="#3f74ff"/><polygon points="3.6,0 3.6,3.6 0,3.6" fill="#7fa8ff"/><polygon points="3.6,7.2 7.2,3.6 3.6,3.6" fill="#0a2fb0"/><polygon points="1.9800000000000002,2.7 3.6,1.08 4.14,2.7" fill="#dfe9ff" opacity=".85"/></svg>
<span class="t" style="left:121.50px;top:260.00px;font-size:6.6px;line-height:8.6px;color:#f2f4fa;transform:scaleX(0.865);transform-origin:0 0;text-shadow:.3px 0 0 #f2f4fa,.5px .5px 0 #232c50;">ackmc</span>
<svg style="left:111.0px;top:268.75px;" width="7.2" height="7.2" viewBox="0 0 7.2 7.2"><polygon points="3.6,0 7.2,3.6 3.6,7.2 0,3.6" fill="#1f4ee6"/><polygon points="3.6,0 7.2,3.6 3.6,3.6" fill="#3f74ff"/><polygon points="3.6,0 3.6,3.6 0,3.6" fill="#7fa8ff"/><polygon points="3.6,7.2 7.2,3.6 3.6,3.6" fill="#0a2fb0"/><polygon points="1.9800000000000002,2.7 3.6,1.08 4.14,2.7" fill="#dfe9ff" opacity=".85"/></svg>
<span class="t" style="left:121.50px;top:269.00px;font-size:6.6px;line-height:8.6px;color:#f2f4fa;transform:scaleX(0.889);transform-origin:0 0;text-shadow:.3px 0 0 #f2f4fa,.5px .5px 0 #232c50;">ackcs</span>
<svg style="left:111.0px;top:277.6px;" width="7.2" height="7.2" viewBox="0 0 7.2 7.2"><polygon points="3.6,0 7.2,3.6 3.6,7.2 0,3.6" fill="#1f4ee6"/><polygon points="3.6,0 7.2,3.6 3.6,3.6" fill="#3f74ff"/><polygon points="3.6,0 3.6,3.6 0,3.6" fill="#7fa8ff"/><polygon points="3.6,7.2 7.2,3.6 3.6,3.6" fill="#0a2fb0"/><polygon points="1.9800000000000002,2.7 3.6,1.08 4.14,2.7" fill="#dfe9ff" opacity=".85"/></svg>
<span class="t" style="left:121.50px;top:277.00px;font-size:6.6px;line-height:8.6px;color:#f2f4fa;transform:scaleX(0.888);transform-origin:0 0;text-shadow:.3px 0 0 #f2f4fa,.5px .5px 0 #232c50;">ackcr</span>
<div style="left:99.5px;top:285.65px;width:63.5px;height:3.35px;overflow:hidden">
<svg style="left:11.5px;top:.8px" width="7.2" height="7.2" viewBox="0 0 7.2 7.2"><polygon points="3.6,0 7.2,3.6 3.6,7.2 0,3.6" fill="#2f62f0"/><polygon points="3.6,0 3.6,3.6 0,3.6" fill="#7fa8ff"/></svg>
<span class="t" style="left:22px;top:0px;font-size:6.6px;line-height:8.6px;color:#e8ecf8;transform:scaleX(.86);transform-origin:0 0">ackcm</span></div>
<div style="left:165.5px;top:107px;width:8px;height:182px;background:#f8f8f8"></div>
<svg style="left:165.7px;top:106.8px;" width="7.6" height="7.4" viewBox="0 0 7.6 7.4"><rect x=".5" y=".5" width="6.6" height="6.4" fill="#f0f0f0" stroke="#fdfdfd"/><path d="M7.1,0V6.9H0" stroke="#8c8c8c" fill="none"/><polygon points="2.0999999999999996,4.720000000000001 5.5,4.720000000000001 3.8,2.34" fill="#000"/></svg>
<div style="left:165.7px;top:115px;width:7.6px;height:152px;background:#f0f0f0;border:1px solid;border-color:#fff #8c8c8c #8c8c8c #fff"></div>
<svg style="left:165.7px;top:280.5px;" width="7.6" height="8.5" viewBox="0 0 7.6 8.5"><rect x=".5" y=".5" width="6.6" height="7.5" fill="#f0f0f0" stroke="#fdfdfd"/><path d="M7.1,0V8.0H0" stroke="#8c8c8c" fill="none"/><polygon points="2.0999999999999996,3.23 5.5,3.23 3.8,5.61" fill="#000"/></svg>
<div style="left:99.5px;top:290px;width:65.5px;height:9.5px;background:#f8f8f8"></div>
<svg style="left:99.5px;top:290.5px;" width="8.5" height="9" viewBox="0 0 8.5 9"><rect x=".5" y=".5" width="7.5" height="8" fill="#f0f0f0" stroke="#fdfdfd"/><path d="M8.0,0V8.5H0" stroke="#8c8c8c" fill="none"/><polygon points="5.27,2.8 5.27,6.2 2.8899999999999997,4.5" fill="#000"/></svg>
<svg style="left:155px;top:290.5px;" width="9" height="9" viewBox="0 0 9 9"><rect x=".5" y=".5" width="8" height="8" fill="#f0f0f0" stroke="#fdfdfd"/><path d="M8.5,0V8.5H0" stroke="#8c8c8c" fill="none"/><polygon points="3.48,2.8 3.48,6.2 5.86,4.5" fill="#000"/></svg>
<div style="left:108.5px;top:290.5px;width:17px;height:9px;background:#f0f0f0;border:1px solid;border-color:#fff #8c8c8c #8c8c8c #fff"></div>
<div style="left:178.5px;top:95px;width:577.5px;height:205px;background:#f0f0f0;border:1px solid #e2e2e2;border-left:1px solid #dadada"></div>
<div style="left:179.5px;top:96px;width:576px;height:10.2px;background:linear-gradient(180deg,#b4cbe9,#a6c0e4 50%,#a0bbe0)"></div>
<svg style="left:180.2px;top:97px;" width="8.6" height="8.4" viewBox="0 0 8.6 8.4"><rect x="0" y="0" width="8.6" height="8.4" fill="#f4f4f4"/><rect x=".8" y=".8" width="7.8" height="7.6" fill="#222"/><rect x=".9" y=".9" width="6.8" height="6.6" fill="#031a06"/><path d="M1.5,4.2h1v-1.6h1.4v3h1.3v-2h1.3" stroke="#3fe04f" stroke-width=".7" fill="none"/></svg>
<span class="t" style="left:191.00px;top:97.00px;font-size:6.6px;line-height:8.6px;color:#1a1a2a;transform:scaleX(0.922);transform-origin:0 0;">Wave - Default</span>
<svg style="left:234px;top:99px;" width="496" height="6" viewBox="0 0 496 6"><path d="M0,1H496" stroke="#3e5c94" stroke-width=".8"/><path d="M0,2.6H496" stroke="#e6eefa" stroke-width=".9"/><path d="M0,4.4H496" stroke="#3e5c94" stroke-width=".8"/></svg>
<svg style="left:476px;top:99px;" width="12" height="6" viewBox="0 0 12 6"><rect width="12" height="6" fill="#a6c0e3"/><path d="M1,1.5H11M1,3.5H11" stroke="#eef" stroke-width=".9" stroke-dasharray="1 1"/></svg>
<div style="left:730px;top:97px;width:25px;height:9px;background:#a9c2e4"></div>
<svg style="left:730px;top:97.5px" width="22.5" height="7.5" viewBox="0 0 24 8"><path d="M1.2,4H6.6M3.9,1.3V6.7" stroke="#111" stroke-width="1"/><rect x="9.3" y="3.4" width="3.4" height="3.2" fill="#fff" stroke="#111" stroke-width=".7"/><path d="M11.6,1.6h2.8v2.8M14.2,1.8l-2.2,2.2" stroke="#111" stroke-width=".8" fill="none"/><path d="M17.6,1.6l4.4,4.8M22,1.6l-4.4,4.8" stroke="#111" stroke-width=".9"/></svg>
<div style="left:180.5px;top:106.4px;width:146.5px;height:181.6px;background:#7f7f7f"></div>
<svg style="left:185px;top:107.2px;" width="9.6" height="9.4" viewBox="0 0 9.6 9.4"><polygon points="3.2,0 5.2,1.7 3.2,3.6 1.2,1.7" fill="#c020d8"/><polygon points="3.2,3 6.4,6 3.2,9.2 0,6" fill="#1848f4"/><circle cx="5.9" cy="3.6" r="1.8" fill="#14d4f0"/><polygon points="6.2,4.6 9.4,4 8.6,7.6 6,6.8" fill="#1fae3a"/></svg>
<svg style="left:196.5px;top:111.5px;" width="4" height="3" viewBox="0 0 4 3"><polygon points="0.3,0.4 3.4,0.4 1.85,2.4" fill="#000"/></svg>
<span class="t" style="left:309.00px;top:108.00px;font-size:6.3px;line-height:8.3px;color:#d9d9d9;transform:scaleX(0.864);transform-origin:0 0;">Msgs</span>
<div style="left:180.5px;top:117.6px;width:146.5px;height:1.3px;background:#d2d2d2"></div>
<div style="left:267.8px;top:107px;width:2px;height:181px;background:#d9d9d9"></div>
<div style="left:268.6px;top:107px;width:0.8px;height:181px;background:#9a9a9a"></div>
<div style="left:325.3px;top:107px;width:1.8px;height:181px;background:#d9d9d9"></div>
<div style="left:180.8px;top:119px;width:4.4px;height:144.4px;background:#fbfbfb"></div>
<svg style="left:196.1px;top:120.8px;" width="7.4" height="7.4" viewBox="0 0 7.4 7.4"><polygon points="3.7,0 7.4,3.7 3.7,7.4 0,3.7" fill="#1f4ee6"/><polygon points="3.7,0 7.4,3.7 3.7,3.7" fill="#3f74ff"/><polygon points="3.7,0 3.7,3.7 0,3.7" fill="#7fa8ff"/><polygon points="3.7,7.4 7.4,3.7 3.7,3.7" fill="#0a2fb0"/><polygon points="2.035,2.7750000000000004 3.7,1.11 4.255,2.7750000000000004" fill="#dfe9ff" opacity=".85"/></svg>
<span class="t" style="left:206.80px;top:121.00px;font-size:6.6px;line-height:8.6px;color:#f6f6f6;transform:scaleX(0.969);transform-origin:0 0;text-shadow:.35px 0 0 #f6f6f6,.6px .6px 0 #444;">/cpu_tb/hrst</span>
<span class="t" style="left:271.20px;top:121.00px;font-size:6.6px;line-height:8.6px;color:#f6f6f6;transform:scaleX(0.817);transform-origin:0 0;text-shadow:.35px 0 0 #f6f6f6,.6px .6px 0 #444;">1</span>
<svg style="left:188.3px;top:131.58px;" width="5" height="5" viewBox="0 0 5 5"><rect x=".3" y=".3" width="4.4" height="4.4" fill="#fbfbfb" stroke="#d8d8d8" stroke-width=".6"/><path d="M1.25,2.5H3.75" stroke="#222" stroke-width=".7"/><path d="M2.5,1.25V3.75" stroke="#222" stroke-width=".7"/></svg>
<div style="left:193.3px;top:133.78px;width:3px;height:0.6px;background:#d0d0d0"></div>
<svg style="left:196.1px;top:130.18px;" width="7.4" height="7.4" viewBox="0 0 7.4 7.4"><polygon points="3.7,0 7.4,3.7 3.7,7.4 0,3.7" fill="#1f4ee6"/><polygon points="3.7,0 7.4,3.7 3.7,3.7" fill="#3f74ff"/><polygon points="3.7,0 3.7,3.7 0,3.7" fill="#7fa8ff"/><polygon points="3.7,7.4 7.4,3.7 3.7,3.7" fill="#0a2fb0"/><polygon points="2.035,2.7750000000000004 3.7,1.11 4.255,2.7750000000000004" fill="#dfe9ff" opacity=".85"/></svg>
<span class="t" style="left:206.80px;top:130.00px;font-size:6.6px;line-height:8.6px;color:#f6f6f6;transform:scaleX(0.953);transform-origin:0 0;text-shadow:.35px 0 0 #f6f6f6,.6px .6px 0 #444;">/cpu_tb/cpudo</span>
<span class="t" style="left:271.20px;top:130.00px;font-size:6.6px;line-height:8.6px;color:#f6f6f6;transform:scaleX(0.817);transform-origin:0 0;text-shadow:.35px 0 0 #f6f6f6,.6px .6px 0 #444;">13</span>
<svg style="left:188.3px;top:140.96px;" width="5" height="5" viewBox="0 0 5 5"><rect x=".3" y=".3" width="4.4" height="4.4" fill="#fbfbfb" stroke="#d8d8d8" stroke-width=".6"/><path d="M1.25,2.5H3.75" stroke="#222" stroke-width=".7"/><path d="M2.5,1.25V3.75" stroke="#222" stroke-width=".7"/></svg>
<div style="left:193.3px;top:143.16px;width:3px;height:0.6px;background:#d0d0d0"></div>
<svg style="left:196.1px;top:139.56px;" width="7.4" height="7.4" viewBox="0 0 7.4 7.4"><polygon points="3.7,0 7.4,3.7 3.7,7.4 0,3.7" fill="#1f4ee6"/><polygon points="3.7,0 7.4,3.7 3.7,3.7" fill="#3f74ff"/><polygon points="3.7,0 3.7,3.7 0,3.7" fill="#7fa8ff"/><polygon points="3.7,7.4 7.4,3.7 3.7,3.7" fill="#0a2fb0"/><polygon points="2.035,2.7750000000000004 3.7,1.11 4.255,2.7750000000000004" fill="#dfe9ff" opacity=".85"/></svg>
<span class="t" style="left:206.80px;top:140.00px;font-size:6.6px;line-height:8.6px;color:#f6f6f6;transform:scaleX(0.955);transform-origin:0 0;text-shadow:.35px 0 0 #f6f6f6,.6px .6px 0 #444;">/cpu_tb/cpudi</span>
<span class="t" style="left:271.20px;top:140.00px;font-size:6.6px;line-height:8.6px;color:#f6f6f6;transform:scaleX(0.899);transform-origin:0 0;text-shadow:.35px 0 0 #f6f6f6,.6px .6px 0 #444;">0</span>
<svg style="left:196.1px;top:148.94px;" width="7.4" height="7.4" viewBox="0 0 7.4 7.4"><polygon points="3.7,0 7.4,3.7 3.7,7.4 0,3.7" fill="#1f4ee6"/><polygon points="3.7,0 7.4,3.7 3.7,3.7" fill="#3f74ff"/><polygon points="3.7,0 3.7,3.7 0,3.7" fill="#7fa8ff"/><polygon points="3.7,7.4 7.4,3.7 3.7,3.7" fill="#0a2fb0"/><polygon points="2.035,2.7750000000000004 3.7,1.11 4.255,2.7750000000000004" fill="#dfe9ff" opacity=".85"/></svg>
<span class="t" style="left:206.80px;top:149.00px;font-size:6.6px;line-height:8.6px;color:#f6f6f6;transform:scaleX(0.935);transform-origin:0 0;text-shadow:.35px 0 0 #f6f6f6,.6px .6px 0 #444;">/cpu_tb/clk</span>
<span class="t" style="left:271.20px;top:149.00px;font-size:6.6px;line-height:8.6px;color:#f6f6f6;transform:scaleX(0.817);transform-origin:0 0;text-shadow:.35px 0 0 #f6f6f6,.6px .6px 0 #444;">1</span>
<svg style="left:188.3px;top:159.72px;" width="5" height="5" viewBox="0 0 5 5"><rect x=".3" y=".3" width="4.4" height="4.4" fill="#fbfbfb" stroke="#d8d8d8" stroke-width=".6"/><path d="M1.25,2.5H3.75" stroke="#222" stroke-width=".7"/><path d="M2.5,1.25V3.75" stroke="#222" stroke-width=".7"/></svg>
<div style="left:193.3px;top:161.92000000000002px;width:3px;height:0.6px;background:#d0d0d0"></div>
<svg style="left:196.1px;top:158.32px;" width="7.4" height="7.4" viewBox="0 0 7.4 7.4"><polygon points="3.7,0 7.4,3.7 3.7,7.4 0,3.7" fill="#1f4ee6"/><polygon points="3.7,0 7.4,3.7 3.7,3.7" fill="#3f74ff"/><polygon points="3.7,0 3.7,3.7 0,3.7" fill="#7fa8ff"/><polygon points="3.7,7.4 7.4,3.7 3.7,3.7" fill="#0a2fb0"/><polygon points="2.035,2.7750000000000004 3.7,1.11 4.255,2.7750000000000004" fill="#dfe9ff" opacity=".85"/></svg>
<span class="t" style="left:206.80px;top:158.00px;font-size:6.6px;line-height:8.6px;color:#f6f6f6;transform:scaleX(0.968);transform-origin:0 0;text-shadow:.35px 0 0 #f6f6f6,.6px .6px 0 #444;">/cpu_tb/addr</span>
<span class="t" style="left:271.20px;top:158.00px;font-size:6.6px;line-height:8.6px;color:#f6f6f6;transform:scaleX(0.790);transform-origin:0 0;text-shadow:.35px 0 0 #f6f6f6,.6px .6px 0 #444;">65001</span>
<svg style="left:196.1px;top:167.7px;" width="7.4" height="7.4" viewBox="0 0 7.4 7.4"><polygon points="3.7,0 7.4,3.7 3.7,7.4 0,3.7" fill="#1f4ee6"/><polygon points="3.7,0 7.4,3.7 3.7,3.7" fill="#3f74ff"/><polygon points="3.7,0 3.7,3.7 0,3.7" fill="#7fa8ff"/><polygon points="3.7,7.4 7.4,3.7 3.7,3.7" fill="#0a2fb0"/><polygon points="2.035,2.7750000000000004 3.7,1.11 4.255,2.7750000000000004" fill="#dfe9ff" opacity=".85"/></svg>
<span class="t" style="left:206.80px;top:168.00px;font-size:6.6px;line-height:8.6px;color:#f6f6f6;transform:scaleX(0.912);transform-origin:0 0;text-shadow:.35px 0 0 #f6f6f6,.6px .6px 0 #444;">/cpu_tb/icpu/ispush</span>
<span class="t" style="left:271.20px;top:168.00px;font-size:6.6px;line-height:8.6px;color:#f6f6f6;transform:scaleX(0.899);transform-origin:0 0;text-shadow:.35px 0 0 #f6f6f6,.6px .6px 0 #444;">0</span>
<svg style="left:196.1px;top:177.08px;" width="7.4" height="7.4" viewBox="0 0 7.4 7.4"><polygon points="3.7,0 7.4,3.7 3.7,7.4 0,3.7" fill="#1f4ee6"/><polygon points="3.7,0 7.4,3.7 3.7,3.7" fill="#3f74ff"/><polygon points="3.7,0 3.7,3.7 0,3.7" fill="#7fa8ff"/><polygon points="3.7,7.4 7.4,3.7 3.7,3.7" fill="#0a2fb0"/><polygon points="2.035,2.7750000000000004 3.7,1.11 4.255,2.7750000000000004" fill="#dfe9ff" opacity=".85"/></svg>
<span class="t" style="left:206.80px;top:177.00px;font-size:6.6px;line-height:8.6px;color:#f6f6f6;transform:scaleX(0.938);transform-origin:0 0;text-shadow:.35px 0 0 #f6f6f6,.6px .6px 0 #444;">/cpu_tb/icpu/spop</span>
<span class="t" style="left:271.20px;top:177.00px;font-size:6.6px;line-height:8.6px;color:#f6f6f6;transform:scaleX(0.899);transform-origin:0 0;text-shadow:.35px 0 0 #f6f6f6,.6px .6px 0 #444;">0</span>
<svg style="left:188.3px;top:187.86px;" width="5" height="5" viewBox="0 0 5 5"><rect x=".3" y=".3" width="4.4" height="4.4" fill="#fbfbfb" stroke="#d8d8d8" stroke-width=".6"/><path d="M1.25,2.5H3.75" stroke="#222" stroke-width=".7"/><path d="M2.5,1.25V3.75" stroke="#222" stroke-width=".7"/></svg>
<div style="left:193.3px;top:190.06px;width:3px;height:0.6px;background:#d0d0d0"></div>
<svg style="left:196.1px;top:186.46px;" width="7.4" height="7.4" viewBox="0 0 7.4 7.4"><polygon points="3.7,0 7.4,3.7 3.7,7.4 0,3.7" fill="#1f4ee6"/><polygon points="3.7,0 7.4,3.7 3.7,3.7" fill="#3f74ff"/><polygon points="3.7,0 3.7,3.7 0,3.7" fill="#7fa8ff"/><polygon points="3.7,7.4 7.4,3.7 3.7,3.7" fill="#0a2fb0"/><polygon points="2.035,2.7750000000000004 3.7,1.11 4.255,2.7750000000000004" fill="#dfe9ff" opacity=".85"/></svg>
<span class="t" style="left:206.80px;top:187.00px;font-size:6.6px;line-height:8.6px;color:#f6f6f6;transform:scaleX(0.936);transform-origin:0 0;text-shadow:.35px 0 0 #f6f6f6,.6px .6px 0 #444;">/cpu_tb/icpu/sdo</span>
<span class="t" style="left:271.20px;top:187.00px;font-size:6.6px;line-height:8.6px;color:#f6f6f6;transform:scaleX(0.899);transform-origin:0 0;text-shadow:.35px 0 0 #f6f6f6,.6px .6px 0 #444;">0</span>
<svg style="left:188.3px;top:197.24px;" width="5" height="5" viewBox="0 0 5 5"><rect x=".3" y=".3" width="4.4" height="4.4" fill="#fbfbfb" stroke="#d8d8d8" stroke-width=".6"/><path d="M1.25,2.5H3.75" stroke="#222" stroke-width=".7"/><path d="M2.5,1.25V3.75" stroke="#222" stroke-width=".7"/></svg>
<div style="left:193.3px;top:199.44px;width:3px;height:0.6px;background:#d0d0d0"></div>
<svg style="left:196.1px;top:195.84px;" width="7.4" height="7.4" viewBox="0 0 7.4 7.4"><polygon points="3.7,0 7.4,3.7 3.7,7.4 0,3.7" fill="#1f4ee6"/><polygon points="3.7,0 7.4,3.7 3.7,3.7" fill="#3f74ff"/><polygon points="3.7,0 3.7,3.7 0,3.7" fill="#7fa8ff"/><polygon points="3.7,7.4 7.4,3.7 3.7,3.7" fill="#0a2fb0"/><polygon points="2.035,2.7750000000000004 3.7,1.11 4.255,2.7750000000000004" fill="#dfe9ff" opacity=".85"/></svg>
<span class="t" style="left:206.80px;top:196.00px;font-size:6.6px;line-height:8.6px;color:#f6f6f6;transform:scaleX(0.938);transform-origin:0 0;text-shadow:.35px 0 0 #f6f6f6,.6px .6px 0 #444;">/cpu_tb/icpu/sdi</span>
<span class="t" style="left:271.20px;top:196.00px;font-size:6.6px;line-height:8.6px;color:#f6f6f6;transform:scaleX(0.899);transform-origin:0 0;text-shadow:.35px 0 0 #f6f6f6,.6px .6px 0 #444;">0</span>
<svg style="left:188.3px;top:206.62px;" width="5" height="5" viewBox="0 0 5 5"><rect x=".3" y=".3" width="4.4" height="4.4" fill="#fbfbfb" stroke="#d8d8d8" stroke-width=".6"/><path d="M1.25,2.5H3.75" stroke="#222" stroke-width=".7"/><path d="M2.5,1.25V3.75" stroke="#222" stroke-width=".7"/></svg>
<div style="left:193.3px;top:208.82px;width:3px;height:0.6px;background:#d0d0d0"></div>
<svg style="left:196.1px;top:205.22px;" width="7.4" height="7.4" viewBox="0 0 7.4 7.4"><polygon points="3.7,0 7.4,3.7 3.7,7.4 0,3.7" fill="#1f4ee6"/><polygon points="3.7,0 7.4,3.7 3.7,3.7" fill="#3f74ff"/><polygon points="3.7,0 3.7,3.7 0,3.7" fill="#7fa8ff"/><polygon points="3.7,7.4 7.4,3.7 3.7,3.7" fill="#0a2fb0"/><polygon points="2.035,2.7750000000000004 3.7,1.11 4.255,2.7750000000000004" fill="#dfe9ff" opacity=".85"/></svg>
<span class="t" style="left:206.80px;top:205.00px;font-size:6.6px;line-height:8.6px;color:#f6f6f6;transform:scaleX(0.948);transform-origin:0 0;text-shadow:.35px 0 0 #f6f6f6,.6px .6px 0 #444;">/cpu_tb/icpu/reg</span>
<span class="t" style="left:271.20px;top:205.00px;font-size:6.6px;line-height:8.6px;color:#f6f6f6;text-shadow:.35px 0 0 #f6f6f6,.6px .6px 0 #444;">{13} {0} {0} {0}</span>
<svg style="left:188.3px;top:216.0px;" width="5" height="5" viewBox="0 0 5 5"><rect x=".3" y=".3" width="4.4" height="4.4" fill="#fbfbfb" stroke="#d8d8d8" stroke-width=".6"/><path d="M1.25,2.5H3.75" stroke="#222" stroke-width=".7"/><path d="M2.5,1.25V3.75" stroke="#222" stroke-width=".7"/></svg>
<div style="left:193.3px;top:218.20000000000002px;width:3px;height:0.6px;background:#d0d0d0"></div>
<svg style="left:196.1px;top:214.6px;" width="7.4" height="7.4" viewBox="0 0 7.4 7.4"><polygon points="3.7,0 7.4,3.7 3.7,7.4 0,3.7" fill="#1f4ee6"/><polygon points="3.7,0 7.4,3.7 3.7,3.7" fill="#3f74ff"/><polygon points="3.7,0 3.7,3.7 0,3.7" fill="#7fa8ff"/><polygon points="3.7,7.4 7.4,3.7 3.7,3.7" fill="#0a2fb0"/><polygon points="2.035,2.7750000000000004 3.7,1.11 4.255,2.7750000000000004" fill="#dfe9ff" opacity=".85"/></svg>
<span class="t" style="left:206.80px;top:215.00px;font-size:6.6px;line-height:8.6px;color:#f6f6f6;transform:scaleX(0.946);transform-origin:0 0;text-shadow:.35px 0 0 #f6f6f6,.6px .6px 0 #444;">/cpu_tb/icpu/pc</span>
<span class="t" style="left:271.20px;top:215.00px;font-size:6.6px;line-height:8.6px;color:#f6f6f6;transform:scaleX(0.817);transform-origin:0 0;text-shadow:.35px 0 0 #f6f6f6,.6px .6px 0 #444;">17</span>
<div style="left:185.2px;top:223.08px;width:82.6px;height:8.8px;background:#fff"></div>
<div style="left:269.8px;top:223.08px;width:55.5px;height:8.8px;background:#fff"></div>
<svg style="left:196.1px;top:223.98px;" width="7.4" height="7.4" viewBox="0 0 7.4 7.4"><polygon points="3.7,0 7.4,3.7 3.7,7.4 0,3.7" fill="#1f4ee6"/><polygon points="3.7,0 7.4,3.7 3.7,3.7" fill="#3f74ff"/><polygon points="3.7,0 3.7,3.7 0,3.7" fill="#7fa8ff"/><polygon points="3.7,7.4 7.4,3.7 3.7,3.7" fill="#0a2fb0"/><polygon points="2.035,2.7750000000000004 3.7,1.11 4.255,2.7750000000000004" fill="#dfe9ff" opacity=".85"/></svg>
<span class="t" style="left:206.80px;top:224.00px;font-size:6.6px;line-height:8.6px;color:#111;transform:scaleX(0.925);transform-origin:0 0;">/cpu_tb/pwm2</span>
<span class="t" style="left:271.20px;top:224.00px;font-size:6.6px;line-height:8.6px;color:#111;transform:scaleX(0.899);transform-origin:0 0;">0</span>
<div style="left:185.2px;top:232.46px;width:82.6px;height:8.8px;background:#fff"></div>
<div style="left:269.8px;top:232.46px;width:55.5px;height:8.8px;background:#fff"></div>
<svg style="left:196.1px;top:233.36px;" width="7.4" height="7.4" viewBox="0 0 7.4 7.4"><polygon points="3.7,0 7.4,3.7 3.7,7.4 0,3.7" fill="#1f4ee6"/><polygon points="3.7,0 7.4,3.7 3.7,3.7" fill="#3f74ff"/><polygon points="3.7,0 3.7,3.7 0,3.7" fill="#7fa8ff"/><polygon points="3.7,7.4 7.4,3.7 3.7,3.7" fill="#0a2fb0"/><polygon points="2.035,2.7750000000000004 3.7,1.11 4.255,2.7750000000000004" fill="#dfe9ff" opacity=".85"/></svg>
<span class="t" style="left:206.80px;top:233.00px;font-size:6.6px;line-height:8.6px;color:#111;transform:scaleX(0.925);transform-origin:0 0;">/cpu_tb/pwm1</span>
<span class="t" style="left:271.20px;top:233.00px;font-size:6.6px;line-height:8.6px;color:#111;transform:scaleX(0.899);transform-origin:0 0;">0</span>
<svg style="left:196.1px;top:242.74px;" width="7.4" height="7.4" viewBox="0 0 7.4 7.4"><polygon points="3.7,0 7.4,3.7 3.7,7.4 0,3.7" fill="#1f4ee6"/><polygon points="3.7,0 7.4,3.7 3.7,3.7" fill="#3f74ff"/><polygon points="3.7,0 3.7,3.7 0,3.7" fill="#7fa8ff"/><polygon points="3.7,7.4 7.4,3.7 3.7,3.7" fill="#0a2fb0"/><polygon points="2.035,2.7750000000000004 3.7,1.11 4.255,2.7750000000000004" fill="#dfe9ff" opacity=".85"/></svg>
<span class="t" style="left:206.80px;top:243.00px;font-size:6.6px;line-height:8.6px;color:#f6f6f6;transform:scaleX(0.970);transform-origin:0 0;text-shadow:.35px 0 0 #f6f6f6,.6px .6px 0 #444;">/cpu_tb/icpu/cst</span>
<span class="t" style="left:271.20px;top:243.00px;font-size:6.6px;line-height:8.6px;color:#f6f6f6;transform:scaleX(0.796);transform-origin:0 0;text-shadow:.35px 0 0 #f6f6f6,.6px .6px 0 #444;">MEMWR</span>
<svg style="left:196.1px;top:252.12px;" width="7.4" height="7.4" viewBox="0 0 7.4 7.4"><polygon points="3.7,0 7.4,3.7 3.7,7.4 0,3.7" fill="#1f4ee6"/><polygon points="3.7,0 7.4,3.7 3.7,3.7" fill="#3f74ff"/><polygon points="3.7,0 3.7,3.7 0,3.7" fill="#7fa8ff"/><polygon points="3.7,7.4 7.4,3.7 3.7,3.7" fill="#0a2fb0"/><polygon points="2.035,2.7750000000000004 3.7,1.11 4.255,2.7750000000000004" fill="#dfe9ff" opacity=".85"/></svg>
<svg style="left:196px;top:256.92px;" width="6" height="3" viewBox="0 0 6 3"><ellipse cx="3" cy="1.6" rx="2.8" ry="1.2" fill="#2db82d"/><ellipse cx="2" cy="1.4" rx="1.2" ry=".7" fill="#e8e04a"/></svg>
<span class="t" style="left:206.80px;top:252.00px;font-size:6.6px;line-height:8.6px;color:#f6f6f6;transform:scaleX(0.940);transform-origin:0 0;text-shadow:.35px 0 0 #f6f6f6,.6px .6px 0 #444;">/cpu_tb/icpu/ackrc</span>
<span class="t" style="left:271.20px;top:252.00px;font-size:6.6px;line-height:8.6px;color:#f6f6f6;transform:scaleX(0.899);transform-origin:0 0;text-shadow:.35px 0 0 #f6f6f6,.6px .6px 0 #444;">0</span>
<div style="left:185px;top:260.60px;width:141px;height:2.80px;overflow:hidden">
<svg style="left:11px;top:1.3px" width="7.4" height="7.4" viewBox="0 0 7.4 7.4"><polygon points="3.7,0 7.4,3.7 3.7,7.4 0,3.7" fill="#2f62f0"/><polygon points="3.7,0 3.7,3.7 0,3.7" fill="#9fbfff"/></svg>
<span class="t" style="left:21.8px;top:-.6px;font-size:6.6px;line-height:8.6px;color:#f4f4f4;text-shadow:.35px 0 0 #f6f6f6,.6px .6px 0 #444;">/cpu_tb/icpu/ackcm</span>
<span class="t" style="left:86.2px;top:-.6px;font-size:6.6px;line-height:8.6px;color:#f4f4f4;text-shadow:.35px 0 0 #f6f6f6,.6px .6px 0 #444;">0</span></div>
<div style="left:180.5px;top:263.8px;width:146.5px;height:1.2px;background:#e4e4e4"></div>
<div style="left:180.5px;top:275.6px;width:146.5px;height:0.8px;background:#8c8c8c"></div>
<svg style="left:184px;top:266.5px;" width="22" height="8" viewBox="0 0 22 8"><rect x="1" y="3.8" width="4.4" height="2.6" fill="#7f96cc"/><path d="M1.5,3.2h2.5M2,2h2.5" stroke="#c8d0e8" stroke-width=".6"/><rect x="7.2" y="1.4" width="5" height="5.4" fill="#6c9ae4" stroke="#c4d4f0" stroke-width=".5"/><path d="M8,5h1v-1.6h1.2v2.2h1.2" stroke="#eef" stroke-width=".5" fill="none"/><circle cx="16.6" cy="4.1" r="2.5" fill="#5cc45c"/><circle cx="16.6" cy="4.1" r="2.5" fill="none" stroke="#a8dca8" stroke-width=".5"/><path d="M16.6,2.8v2.6M15.3,4.1h2.6" stroke="#e8ffe8" stroke-width=".7"/></svg>
<span class="t" style="left:252.00px;top:268.00px;font-size:6.6px;line-height:8.6px;color:#f6f6f6;transform:scaleX(0.795);transform-origin:0 0;text-shadow:.35px 0 0 #f6f6f6,.6px .6px 0 #444;">Now</span>
<span class="t" style="left:302.50px;top:268.00px;font-size:6.6px;line-height:8.6px;color:#f6f6f6;transform:scaleX(0.868);transform-origin:0 0;text-shadow:.35px 0 0 #f6f6f6,.6px .6px 0 #444;">100 us</span>
<div style="left:207px;top:276.4px;width:60.8px;height:11.4px;background:#fff"></div>
<div style="left:269.8px;top:276.4px;width:55.5px;height:11.4px;background:#fff"></div>
<svg style="left:186px;top:277.8px;" width="22" height="10" viewBox="0 0 22 10"><rect x="1" y="4" width="5.4" height="4.2" rx=".6" fill="#e8c458" stroke="#a88a30" stroke-width=".5"/><path d="M2.2,4V2.8a1.5,1.5 0 0 1 3,0V4" stroke="#d0d0d0" stroke-width=".8" fill="none"/><path d="M8.6,8l3.2,-4" stroke="#5a8ae8" stroke-width="1.4"/><path d="M11.6,2.4l1.2,1.2" stroke="#cfd8ff" stroke-width=".9"/><circle cx="17.2" cy="5.4" r="2.6" fill="#e4584a"/><circle cx="17.2" cy="5.4" r="2.6" fill="none" stroke="#f0a8a0" stroke-width=".5"/><path d="M15.8,5.4h2.8" stroke="#fff" stroke-width=".9"/></svg>
<span class="t" style="left:239.80px;top:279.00px;font-size:6.6px;line-height:8.6px;color:#222;transform:scaleX(0.897);transform-origin:0 0;">Cursor 1</span>
<span class="t" style="left:287.10px;top:279.00px;font-size:6.6px;line-height:8.6px;color:#222;transform:scaleX(0.897);transform-origin:0 0;">1.249164 us</span>
<div style="left:180.5px;top:287.8px;width:575px;height:0.8px;background:#c8c8c8"></div>
<div style="left:180.5px;top:288.6px;width:574.5px;height:10.4px;background:#f1f1f1"></div>
<div style="left:185px;top:289px;width:82.5px;height:9.5px;background:#fafafa"></div>
<svg style="left:185px;top:289px;" width="8.5" height="9.5" viewBox="0 0 8.5 9.5"><rect x=".5" y=".5" width="7.5" height="8.5" fill="#f0f0f0" stroke="#fdfdfd"/><path d="M8.0,0V9.0H0" stroke="#8c8c8c" fill="none"/><polygon points="5.27,3.05 5.27,6.45 2.8899999999999997,4.75" fill="#999"/></svg>
<svg style="left:259.0px;top:289px;" width="8.5" height="9.5" viewBox="0 0 8.5 9.5"><rect x=".5" y=".5" width="7.5" height="8.5" fill="#f0f0f0" stroke="#fdfdfd"/><path d="M8.0,0V9.0H0" stroke="#8c8c8c" fill="none"/><polygon points="3.23,3.05 3.23,6.45 5.61,4.75" fill="#999"/></svg>
<div style="left:270px;top:289px;width:55px;height:9.5px;background:#fafafa"></div>
<svg style="left:270px;top:289px;" width="8.5" height="9.5" viewBox="0 0 8.5 9.5"><rect x=".5" y=".5" width="7.5" height="8.5" fill="#f0f0f0" stroke="#fdfdfd"/><path d="M8.0,0V9.0H0" stroke="#8c8c8c" fill="none"/><polygon points="5.27,3.05 5.27,6.45 2.8899999999999997,4.75" fill="#999"/></svg>
<svg style="left:316.5px;top:289px;" width="8.5" height="9.5" viewBox="0 0 8.5 9.5"><rect x=".5" y=".5" width="7.5" height="8.5" fill="#f0f0f0" stroke="#fdfdfd"/><path d="M8.0,0V9.0H0" stroke="#8c8c8c" fill="none"/><polygon points="3.23,3.05 3.23,6.45 5.61,4.75" fill="#999"/></svg>
<div style="left:327px;top:289px;width:414.5px;height:9.5px;background:#c9c9c9"></div>
<svg style="left:327px;top:289px;" width="8.5" height="9.5" viewBox="0 0 8.5 9.5"><rect x=".5" y=".5" width="7.5" height="8.5" fill="#f0f0f0" stroke="#fdfdfd"/><path d="M8.0,0V9.0H0" stroke="#8c8c8c" fill="none"/><polygon points="5.27,3.05 5.27,6.45 2.8899999999999997,4.75" fill="#000"/></svg>
<svg style="left:733.0px;top:289px;" width="8.5" height="9.5" viewBox="0 0 8.5 9.5"><rect x=".5" y=".5" width="7.5" height="8.5" fill="#f0f0f0" stroke="#fdfdfd"/><path d="M8.0,0V9.0H0" stroke="#8c8c8c" fill="none"/><polygon points="3.23,3.05 3.23,6.45 5.61,4.75" fill="#000"/></svg>
<div style="left:335px;top:289px;width:28px;height:9.5px;background:#f0f0f0;border:1px solid;border-color:#fff #8c8c8c #8c8c8c #fff"></div>
<div style="left:336.6px;top:290px;width:0.8px;height:7.5px;background:#e8b020"></div>
<div style="left:742.5px;top:288.6px;width:12.5px;height:10.4px;background:#e0e0e0"></div>
<div style="left:744.2px;top:288.8px;width:9.6px;height:9.8px;background:#7f7f7f"></div>
<div style="left:742.5px;top:107px;width:12.5px;height:181px;background:#e0e0e0"></div>
<div style="left:744.2px;top:107px;width:9.6px;height:180.4px;background:#7f7f7f"></div>
<div style="left:744.2px;top:119px;width:9.6px;height:145px;background:#f8f8f8"></div>
<svg style="left:744.2px;top:119.5px;" width="9.6" height="8.5" viewBox="0 0 9.6 8.5"><rect x=".5" y=".5" width="8.6" height="7.5" fill="#f0f0f0" stroke="#fdfdfd"/><path d="M9.1,0V8.0H0" stroke="#8c8c8c" fill="none"/><polygon points="3.0999999999999996,5.27 6.5,5.27 4.8,2.8899999999999997" fill="#000"/></svg>
<svg style="left:744.2px;top:255px;" width="9.6" height="8.5" viewBox="0 0 9.6 8.5"><rect x=".5" y=".5" width="8.6" height="7.5" fill="#f0f0f0" stroke="#fdfdfd"/><path d="M9.1,0V8.0H0" stroke="#8c8c8c" fill="none"/><polygon points="3.0999999999999996,3.23 6.5,3.23 4.8,5.61" fill="#000"/></svg>
<div style="left:744.2px;top:128.5px;width:9.6px;height:126px;background:#f2f2f2;border:1px solid;border-color:#fff #a0a0a0 #a0a0a0 #fff"></div>
<div style="left:745px;top:214px;width:8px;height:15px;background:#fdfdfd"></div>
<svg style="left:327px;top:107px;font-family:'Liberation Sans',sans-serif" width="415.5" height="180.8" viewBox="327 107 415.5 180.8"><rect x="327" y="107" width="415.5" height="180.8" fill="#000"/><path d="M338.6,119V264" stroke="#6a6a6a" stroke-width=".8"/><path d="M370.1,119V264" stroke="#6a6a6a" stroke-width=".8"/><path d="M401.5,119V264" stroke="#6a6a6a" stroke-width=".8"/><path d="M433,119V264" stroke="#6a6a6a" stroke-width=".8"/><path d="M464.4,119V264" stroke="#6a6a6a" stroke-width=".8"/><path d="M495.9,119V264" stroke="#6a6a6a" stroke-width=".8"/><path d="M527.4,119V264" stroke="#6a6a6a" stroke-width=".8"/><path d="M558.8,119V264" stroke="#6a6a6a" stroke-width=".8"/><path d="M590.3,119V264" stroke="#6a6a6a" stroke-width=".8"/><path d="M621.7,119V264" stroke="#6a6a6a" stroke-width=".8"/><path d="M653.2,119V264" stroke="#6a6a6a" stroke-width=".8"/><path d="M684.7,119V264" stroke="#6a6a6a" stroke-width=".8"/><path d="M716.1,119V264" stroke="#6a6a6a" stroke-width=".8"/><path d="M328.3,121.4H741" fill="none" stroke="#00a400" stroke-width="0.9"/><path d="M328.3,130.7H335.4L336.3,133.9L335.4,137.2H328.3M336.3,133.9L337.2,130.7H343.4L344.3,133.9L343.4,137.2H337.2ZM344.3,133.9L345.2,130.7H353.3L354.2,133.9L353.3,137.2H345.2ZM354.2,133.9L355.1,130.7H361.4L362.3,133.9L361.4,137.2H355.1ZM362.3,133.9L363.2,130.7H397.7L398.6,133.9L397.7,137.2H363.2ZM398.6,133.9L399.5,130.7H452.9L453.8,133.9L452.9,137.2H399.5ZM453.8,133.9L454.7,130.7H508.9L509.8,133.9L508.9,137.2H454.7ZM509.8,133.9L510.7,130.7H564.7L565.6,133.9L564.7,137.2H510.7ZM565.6,133.9L566.5,130.7H619.9L620.8,133.9L619.9,137.2H566.5ZM620.8,133.9L621.7,130.7H670.9L671.8,133.9L670.9,137.2H621.7ZM671.8,133.9L672.7,130.7H726.5L727.4,133.9L726.5,137.2H672.7ZM741,130.7H728.3L727.4,133.9L728.3,137.2H741" fill="none" stroke="#93c093" stroke-width="0.9" stroke-linejoin="round"/><text x="347.6" y="136.3" font-size="6.2" fill="#e8e8e8">1</text><text x="365.3" y="136.3" font-size="6.2" fill="#e8e8e8">5</text><text x="400.6" y="136.3" font-size="6.2" fill="#e8e8e8">2</text><text x="456" y="136.3" font-size="6.2" fill="#e8e8e8">4</text><text x="511.6" y="136.3" font-size="6.2" fill="#e8e8e8">6</text><text x="567.4" y="136.3" font-size="6.2" fill="#e8e8e8">8</text><text x="622.4" y="136.3" font-size="6.2" fill="#e8e8e8">10</text><text x="673.4" y="136.3" font-size="6.2" fill="#e8e8e8">2</text><text x="729" y="136.3" font-size="6.2" fill="#e8e8e8">4</text><path d="M328.3,140.1H330.4L331.3,143.3L330.4,146.6H328.3M331.3,143.3L332.2,140.1H333.1L334,143.3L333.1,146.6H332.2ZM334,143.3L334.9,140.1H336.6L337.5,143.3L336.6,146.6H334.9ZM337.5,143.3L338.4,140.1H340.4L341.3,143.3L340.4,146.6H338.4ZM341.3,143.3L342.2,140.1H344.1L345,143.3L344.1,146.6H342.2ZM345,143.3L345.9,140.1H346.9L347.8,143.3L346.9,146.6H345.9ZM347.8,143.3L348.7,140.1H351.5L352.4,143.3L351.5,146.6H348.7ZM352.4,143.3L353.3,140.1H354.6L355.5,143.3L354.6,146.6H353.3ZM355.5,143.3L356.4,140.1H359.5L360.4,143.3L359.5,146.6H356.4ZM360.4,143.3L361.3,140.1H363L363.9,143.3L363,146.6H361.3ZM363.9,143.3L364.8,140.1H365.7L366.6,143.3L365.7,146.6H364.8ZM366.6,143.3L367.5,140.1H369L369.9,143.3L369,146.6H367.5ZM369.9,143.3L370.8,140.1H371.9L372.8,143.3L371.9,146.6H370.8ZM372.8,143.3L373.7,140.1H376.5L377.4,143.3L376.5,146.6H373.7ZM377.4,143.3L378.3,140.1H380.5L381.4,143.3L380.5,146.6H378.3ZM381.4,143.3L382.3,140.1H384L384.9,143.3L384,146.6H382.3ZM384.9,143.3L385.8,140.1H386.7L387.6,143.3L386.7,146.6H385.8ZM387.6,143.3L388.5,140.1H389.8L390.7,143.3L389.8,146.6H388.5ZM390.7,143.3L391.6,140.1H393.4L394.3,143.3L393.4,146.6H391.6ZM394.3,143.3L395.2,140.1H397.5L398.4,143.3L397.5,146.6H395.2ZM398.4,143.3L399.3,140.1H400.8L401.7,143.3L400.8,146.6H399.3ZM401.7,143.3L402.6,140.1H405L405.9,143.3L405,146.6H402.6ZM405.9,143.3L406.8,140.1H409L409.9,143.3L409,146.6H406.8ZM409.9,143.3L410.8,140.1H413.7L414.6,143.3L413.7,146.6H410.8ZM414.6,143.3L415.5,140.1H417L417.9,143.3L417,146.6H415.5ZM417.9,143.3L418.8,140.1H419.9L420.8,143.3L419.9,146.6H418.8ZM420.8,143.3L421.7,140.1H424.3L425.2,143.3L424.3,146.6H421.7ZM425.2,143.3L426.1,140.1H428.1L429,143.3L428.1,146.6H426.1ZM429,143.3L429.9,140.1H432.3L433.2,143.3L432.3,146.6H429.9ZM433.2,143.3L434.1,140.1H436.3L437.2,143.3L436.3,146.6H434.1ZM437.2,143.3L438.1,140.1H439.6L440.5,143.3L439.6,146.6H438.1ZM440.5,143.3L441.4,140.1H443.7L444.6,143.3L443.7,146.6H441.4ZM444.6,143.3L445.5,140.1H447.3L448.2,143.3L447.3,146.6H445.5ZM448.2,143.3L449.1,140.1H452.2L453.1,143.3L452.2,146.6H449.1ZM453.1,143.3L454,140.1H456.4L457.3,143.3L456.4,146.6H454ZM457.3,143.3L458.2,140.1H460.7L461.6,143.3L460.7,146.6H458.2ZM461.6,143.3L462.5,140.1H465.7L466.6,143.3L465.7,146.6H462.5ZM466.6,143.3L467.5,140.1H469L469.9,143.3L469,146.6H467.5ZM469.9,143.3L470.8,140.1H473.2L474.1,143.3L473.2,146.6H470.8ZM474.1,143.3L475,140.1H476.9L477.8,143.3L476.9,146.6H475ZM477.8,143.3L478.7,140.1H479.8L480.7,143.3L479.8,146.6H478.7ZM480.7,143.3L481.6,140.1H484.2L485.1,143.3L484.2,146.6H481.6ZM485.1,143.3L486,140.1H487.4L488.3,143.3L487.4,146.6H486ZM488.3,143.3L489.2,140.1H492.1L493,143.3L492.1,146.6H489.2ZM493,143.3L493.9,140.1H495.8L496.7,143.3L495.8,146.6H493.9ZM496.7,143.3L497.6,140.1H500.5L501.4,143.3L500.5,146.6H497.6ZM501.4,143.3L502.3,140.1H505.2L506.1,143.3L505.2,146.6H502.3ZM506.1,143.3L507,140.1H508.7L509.6,143.3L508.7,146.6H507ZM509.6,143.3L510.5,140.1H513.5L514.4,143.3L513.5,146.6H510.5ZM514.4,143.3L515.3,140.1H516.4L517.3,143.3L516.4,146.6H515.3ZM517.3,143.3L518.2,140.1H519.6L520.5,143.3L519.6,146.6H518.2ZM520.5,143.3L521.4,140.1H523.4L524.3,143.3L523.4,146.6H521.4ZM524.3,143.3L525.2,140.1H526.6L527.5,143.3L526.6,146.6H525.2ZM527.5,143.3L528.4,140.1H530.2L531.1,143.3L530.2,146.6H528.4ZM531.1,143.3L532,140.1H534.1L535,143.3L534.1,146.6H532ZM535,143.3L535.9,140.1H538.4L539.3,143.3L538.4,146.6H535.9ZM539.3,143.3L540.2,140.1H542.5L543.4,143.3L542.5,146.6H540.2ZM543.4,143.3L544.3,140.1H545.2L546.1,143.3L545.2,146.6H544.3ZM546.1,143.3L547,140.1H549.7L550.6,143.3L549.7,146.6H547ZM550.6,143.3L551.5,140.1H554.2L555.1,143.3L554.2,146.6H551.5ZM555.1,143.3L556,140.1H557.8L558.7,143.3L557.8,146.6H556ZM558.7,143.3L559.6,140.1H561.9L562.8,143.3L561.9,146.6H559.6ZM562.8,143.3L563.7,140.1H564.6L565.5,143.3L564.6,146.6H563.7ZM565.5,143.3L566.4,140.1H567.6L568.5,143.3L567.6,146.6H566.4ZM568.5,143.3L569.4,140.1H570.4L571.3,143.3L570.4,146.6H569.4ZM571.3,143.3L572.2,140.1H573.3L574.2,143.3L573.3,146.6H572.2ZM574.2,143.3L575.1,140.1H576.8L577.7,143.3L576.8,146.6H575.1ZM577.7,143.3L578.6,140.1H581.5L582.4,143.3L581.5,146.6H578.6ZM582.4,143.3L583.3,140.1H584.5L585.4,143.3L584.5,146.6H583.3ZM585.4,143.3L586.3,140.1H587.9L588.8,143.3L587.9,146.6H586.3ZM588.8,143.3L589.7,140.1H590.8L591.7,143.3L590.8,146.6H589.7ZM591.7,143.3L592.6,140.1H595.8L596.7,143.3L595.8,146.6H592.6ZM596.7,143.3L597.6,140.1H599.5L600.4,143.3L599.5,146.6H597.6ZM600.4,143.3L601.3,140.1H602.4L603.3,143.3L602.4,146.6H601.3ZM603.3,143.3L604.2,140.1H605.6L606.5,143.3L605.6,146.6H604.2ZM606.5,143.3L607.4,140.1H608.6L609.5,143.3L608.6,146.6H607.4ZM609.5,143.3L610.4,140.1H613.5L614.4,143.3L613.5,146.6H610.4ZM614.4,143.3L615.3,140.1H616.4L617.3,143.3L616.4,146.6H615.3ZM617.3,143.3L618.2,140.1H619.1L620,143.3L619.1,146.6H618.2ZM620,143.3L620.9,140.1H624L624.9,143.3L624,146.6H620.9ZM624.9,143.3L625.8,140.1H628.3L629.2,143.3L628.3,146.6H625.8ZM629.2,143.3L630.1,140.1H631.8L632.7,143.3L631.8,146.6H630.1ZM632.7,143.3L633.6,140.1H636.2L637.1,143.3L636.2,146.6H633.6ZM637.1,143.3L638,140.1H640.7L641.6,143.3L640.7,146.6H638ZM641.6,143.3L642.5,140.1H643.8L644.7,143.3L643.8,146.6H642.5ZM644.7,143.3L645.6,140.1H648.8L649.7,143.3L648.8,146.6H645.6ZM649.7,143.3L650.6,140.1H653.3L654.2,143.3L653.3,146.6H650.6ZM654.2,143.3L655.1,140.1H657.7L658.6,143.3L657.7,146.6H655.1ZM658.6,143.3L659.5,140.1H661.6L662.5,143.3L661.6,146.6H659.5ZM662.5,143.3L663.4,140.1H664.2L665.1,143.3L664.2,146.6H663.4ZM665.1,143.3L666,140.1H667.5L668.4,143.3L667.5,146.6H666ZM668.4,143.3L669.3,140.1H671.8L672.7,143.3L671.8,146.6H669.3ZM672.7,143.3L673.6,140.1H675.4L676.3,143.3L675.4,146.6H673.6ZM676.3,143.3L677.2,140.1H680.4L681.3,143.3L680.4,146.6H677.2ZM681.3,143.3L682.2,140.1H683.9L684.8,143.3L683.9,146.6H682.2ZM684.8,143.3L685.7,140.1H687L687.9,143.3L687,146.6H685.7ZM687.9,143.3L688.8,140.1H690.1L691,143.3L690.1,146.6H688.8ZM691,143.3L691.9,140.1H694.9L695.8,143.3L694.9,146.6H691.9ZM695.8,143.3L696.7,140.1H698.6L699.5,143.3L698.6,146.6H696.7ZM699.5,143.3L700.4,140.1H703.2L704.1,143.3L703.2,146.6H700.4ZM704.1,143.3L705,140.1H707.3L708.2,143.3L707.3,146.6H705ZM708.2,143.3L709.1,140.1H711.8L712.7,143.3L711.8,146.6H709.1ZM712.7,143.3L713.6,140.1H715.6L716.5,143.3L715.6,146.6H713.6ZM716.5,143.3L717.4,140.1H720.1L721,143.3L720.1,146.6H717.4ZM721,143.3L721.9,140.1H724.6L725.5,143.3L724.6,146.6H721.9ZM725.5,143.3L726.4,140.1H728.1L729,143.3L728.1,146.6H726.4ZM729,143.3L729.9,140.1H733L733.9,143.3L733,146.6H729.9ZM733.9,143.3L734.8,140.1H736L736.9,143.3L736,146.6H734.8ZM736.9,143.3L737.8,140.1H739L739.9,143.3L739,146.6H737.8ZM741,140.1H740.5L739.9,143.3L740.5,146.6H741" fill="none" stroke="#94c494" stroke-width="1.0" stroke-linejoin="round"/><rect x="328.3" y="149.4" width="412.7" height="7.2" fill="#00ff00"/><path d="M328.3,158.8H332.2L333.1,162.1L332.2,165.3H328.3M333.1,162.1L334,158.8H336.6L337.5,162.1L336.6,165.3H334ZM337.5,162.1L338.4,158.8H340.7L341.6,162.1L340.7,165.3H338.4ZM341.6,162.1L342.5,158.8H343.5L344.4,162.1L343.5,165.3H342.5ZM344.4,162.1L345.3,158.8H347.9L348.8,162.1L347.9,165.3H345.3ZM348.8,162.1L349.7,158.8H352.9L353.8,162.1L352.9,165.3H349.7ZM353.8,162.1L354.7,158.8H357.8L358.7,162.1L357.8,165.3H354.7ZM358.7,162.1L359.6,158.8H361.1L362,162.1L361.1,165.3H359.6ZM362,162.1L362.9,158.8H364.6L365.5,162.1L364.6,165.3H362.9ZM365.5,162.1L366.4,158.8H368.8L369.7,162.1L368.8,165.3H366.4ZM369.7,162.1L370.6,158.8H372.6L373.5,162.1L372.6,165.3H370.6ZM373.5,162.1L374.4,158.8H377.6L378.5,162.1L377.6,165.3H374.4ZM378.5,162.1L379.4,158.8H381.5L382.4,162.1L381.5,165.3H379.4ZM382.4,162.1L383.3,158.8H386.5L387.4,162.1L386.5,165.3H383.3ZM387.4,162.1L388.3,158.8H391.5L392.4,162.1L391.5,165.3H388.3ZM392.4,162.1L393.3,158.8H395.6L396.5,162.1L395.6,165.3H393.3ZM396.5,162.1L397.4,158.8H398.4L399.3,162.1L398.4,165.3H397.4ZM399.3,162.1L400.2,158.8H401.6L402.5,162.1L401.6,165.3H400.2ZM402.5,162.1L403.4,158.8H406.4L407.3,162.1L406.4,165.3H403.4ZM407.3,162.1L408.2,158.8H410.3L411.2,162.1L410.3,165.3H408.2ZM411.2,162.1L412.1,158.8H414.4L415.3,162.1L414.4,165.3H412.1ZM415.3,162.1L416.2,158.8H418.5L419.4,162.1L418.5,165.3H416.2ZM419.4,162.1L420.3,158.8H423.2L424.1,162.1L423.2,165.3H420.3ZM424.1,162.1L425,158.8H427.3L428.2,162.1L427.3,165.3H425ZM428.2,162.1L429.1,158.8H430.8L431.7,162.1L430.8,165.3H429.1ZM431.7,162.1L432.6,158.8H434.8L435.7,162.1L434.8,165.3H432.6ZM435.7,162.1L436.6,158.8H439.4L440.3,162.1L439.4,165.3H436.6ZM440.3,162.1L441.2,158.8H443.3L444.2,162.1L443.3,165.3H441.2ZM444.2,162.1L445.1,158.8H447.3L448.2,162.1L447.3,165.3H445.1ZM448.2,162.1L449.1,158.8H451.8L452.7,162.1L451.8,165.3H449.1ZM452.7,162.1L453.6,158.8H455.8L456.7,162.1L455.8,165.3H453.6ZM456.7,162.1L457.6,158.8H460.9L461.8,162.1L460.9,165.3H457.6ZM461.8,162.1L462.7,158.8H465.8L466.7,162.1L465.8,165.3H462.7ZM466.7,162.1L467.6,158.8H469.2L470.1,162.1L469.2,165.3H467.6ZM470.1,162.1L471,158.8H474.3L475.2,162.1L474.3,165.3H471ZM475.2,162.1L476.1,158.8H477.4L478.3,162.1L477.4,165.3H476.1ZM478.3,162.1L479.2,158.8H481.3L482.2,162.1L481.3,165.3H479.2ZM482.2,162.1L483.1,158.8H484.6L485.5,162.1L484.6,165.3H483.1ZM485.5,162.1L486.4,158.8H489.1L490,162.1L489.1,165.3H486.4ZM490,162.1L490.9,158.8H494L494.9,162.1L494,165.3H490.9ZM494.9,162.1L495.8,158.8H498.5L499.4,162.1L498.5,165.3H495.8ZM499.4,162.1L500.3,158.8H501.7L502.6,162.1L501.7,165.3H500.3ZM502.6,162.1L503.5,158.8H506.8L507.7,162.1L506.8,165.3H503.5ZM507.7,162.1L508.6,158.8H511.9L512.8,162.1L511.9,165.3H508.6ZM512.8,162.1L513.7,158.8H515.8L516.7,162.1L515.8,165.3H513.7ZM516.7,162.1L517.6,158.8H520.6L521.5,162.1L520.6,165.3H517.6ZM521.5,162.1L522.4,158.8H524.5L525.4,162.1L524.5,165.3H522.4ZM525.4,162.1L526.3,158.8H528.1L529,162.1L528.1,165.3H526.3ZM529,162.1L529.9,158.8H531.7L532.6,162.1L531.7,165.3H529.9ZM532.6,162.1L533.5,158.8H534.5L535.4,162.1L534.5,165.3H533.5ZM535.4,162.1L536.3,158.8H538.4L539.3,162.1L538.4,165.3H536.3ZM539.3,162.1L540.2,158.8H542L542.9,162.1L542,165.3H540.2ZM542.9,162.1L543.8,158.8H546L546.9,162.1L546,165.3H543.8ZM546.9,162.1L547.8,158.8H551.2L552.1,162.1L551.2,165.3H547.8ZM552.1,162.1L553,158.8H556.3L557.2,162.1L556.3,165.3H553ZM557.2,162.1L558.1,158.8H559.7L560.6,162.1L559.7,165.3H558.1ZM560.6,162.1L561.5,158.8H564.4L565.3,162.1L564.4,165.3H561.5ZM565.3,162.1L566.2,158.8H567.5L568.4,162.1L567.5,165.3H566.2ZM568.4,162.1L569.3,158.8H572.5L573.4,162.1L572.5,165.3H569.3ZM573.4,162.1L574.3,158.8H575.9L576.8,162.1L575.9,165.3H574.3ZM576.8,162.1L577.7,158.8H580.9L581.8,162.1L580.9,165.3H577.7ZM581.8,162.1L582.7,158.8H585.4L586.3,162.1L585.4,165.3H582.7ZM586.3,162.1L587.2,158.8H588.3L589.2,162.1L588.3,165.3H587.2ZM589.2,162.1L590.1,158.8H592.2L593.1,162.1L592.2,165.3H590.1ZM593.1,162.1L594,158.8H597.2L598.1,162.1L597.2,165.3H594ZM598.1,162.1L599,158.8H601.9L602.8,162.1L601.9,165.3H599ZM602.8,162.1L603.7,158.8H606.8L607.7,162.1L606.8,165.3H603.7ZM607.7,162.1L608.6,158.8H611.7L612.6,162.1L611.7,165.3H608.6ZM612.6,162.1L613.5,158.8H615.3L616.2,162.1L615.3,165.3H613.5ZM616.2,162.1L617.1,158.8H620.3L621.2,162.1L620.3,165.3H617.1ZM621.2,162.1L622.1,158.8H623.4L624.3,162.1L623.4,165.3H622.1ZM624.3,162.1L625.2,158.8H626.8L627.7,162.1L626.8,165.3H625.2ZM627.7,162.1L628.6,158.8H630L630.9,162.1L630,165.3H628.6ZM630.9,162.1L631.8,158.8H633.3L634.2,162.1L633.3,165.3H631.8ZM634.2,162.1L635.1,158.8H636.8L637.7,162.1L636.8,165.3H635.1ZM637.7,162.1L638.6,158.8H640.3L641.2,162.1L640.3,165.3H638.6ZM641.2,162.1L642.1,158.8H643.5L644.4,162.1L643.5,165.3H642.1ZM644.4,162.1L645.3,158.8H646.3L647.2,162.1L646.3,165.3H645.3ZM647.2,162.1L648.1,158.8H649.2L650.1,162.1L649.2,165.3H648.1ZM650.1,162.1L651,158.8H653.3L654.2,162.1L653.3,165.3H651ZM654.2,162.1L655.1,158.8H657.2L658.1,162.1L657.2,165.3H655.1ZM658.1,162.1L659,158.8H660.3L661.2,162.1L660.3,165.3H659ZM661.2,162.1L662.1,158.8H664.1L665,162.1L664.1,165.3H662.1ZM665,162.1L665.9,158.8H668.9L669.8,162.1L668.9,165.3H665.9ZM669.8,162.1L670.7,158.8H673L673.9,162.1L673,165.3H670.7ZM673.9,162.1L674.8,158.8H678.1L679,162.1L678.1,165.3H674.8ZM679,162.1L679.9,158.8H682.9L683.8,162.1L682.9,165.3H679.9ZM683.8,162.1L684.7,158.8H687.2L688.1,162.1L687.2,165.3H684.7ZM688.1,162.1L689,158.8H690.9L691.8,162.1L690.9,165.3H689ZM691.8,162.1L692.7,158.8H694L694.9,162.1L694,165.3H692.7ZM694.9,162.1L695.8,158.8H698.6L699.5,162.1L698.6,165.3H695.8ZM699.5,162.1L700.4,158.8H701.8L702.7,162.1L701.8,165.3H700.4ZM702.7,162.1L703.6,158.8H706.6L707.5,162.1L706.6,165.3H703.6ZM707.5,162.1L708.4,158.8H711L711.9,162.1L711,165.3H708.4ZM711.9,162.1L712.8,158.8H714.4L715.3,162.1L714.4,165.3H712.8ZM715.3,162.1L716.2,158.8H718.3L719.2,162.1L718.3,165.3H716.2ZM719.2,162.1L720.1,158.8H722.1L723,162.1L722.1,165.3H720.1ZM723,162.1L723.9,158.8H727.2L728.1,162.1L727.2,165.3H723.9ZM728.1,162.1L729,158.8H731.4L732.3,162.1L731.4,165.3H729ZM732.3,162.1L733.2,158.8H736.5L737.4,162.1L736.5,165.3H733.2ZM741,158.8H738.3L737.4,162.1L738.3,165.3H741" fill="none" stroke="#90c090" stroke-width="1.0" stroke-linejoin="round"/><path d="M328.3,174.9H741" fill="none" stroke="#00a400" stroke-width="0.9"/><path d="M328.3,184.3H741" fill="none" stroke="#00a400" stroke-width="0.9"/><path d="M328.3,187H741M328.3,193.5H741" fill="none" stroke="#93c093" stroke-width="0.9" stroke-linejoin="round"/><path d="M328.3,196.3H741M328.3,202.8H741" fill="none" stroke="#93c093" stroke-width="0.9" stroke-linejoin="round"/><text x="329.4" y="192.6" font-size="6.4" fill="#f0f0f0">0</text><text x="329.4" y="201.9" font-size="6.4" fill="#f0f0f0">0</text><path d="M328.3,205.4H335.3L336.8,209L335.3,212.5H328.3M336.8,209L338.3,205.4H344.3L345.8,209L344.3,212.5H338.3ZM345.8,209L347.3,205.4H353.3L354.8,209L353.3,212.5H347.3ZM354.8,209L356.3,205.4H363.8L365.3,209L363.8,212.5H356.3ZM365.3,209L366.8,205.4H368L369.5,209L368,212.5H366.8ZM369.5,209L371,205.4H377.5L379,209L377.5,212.5H371ZM379,209L380.5,205.4H381.7L383.2,209L381.7,212.5H380.5ZM383.2,209L384.7,205.4H391.7L393.2,209L391.7,212.5H384.7ZM393.2,209L394.7,205.4H400.2L401.7,209L400.2,212.5H394.7ZM401.7,209L403.2,205.4H410.2L411.7,209L410.2,212.5H403.2ZM411.7,209L413.2,205.4H420.2L421.7,209L420.2,212.5H413.2ZM421.7,209L423.2,205.4H429.7L431.2,209L429.7,212.5H423.2ZM431.2,209L432.7,205.4H433.1L434.6,209L433.1,212.5H432.7ZM434.6,209L436.1,205.4H436.5L438,209L436.5,212.5H436.1ZM438,209L439.5,205.4H443L444.5,209L443,212.5H439.5ZM444.5,209L446,205.4H446.2L447.7,209L446.2,212.5H446ZM447.7,209L449.2,205.4H451.7L453.2,209L451.7,212.5H449.2ZM453.2,209L454.7,205.4H462.7L464.2,209L462.7,212.5H454.7ZM464.2,209L465.7,205.4H471.2L472.7,209L471.2,212.5H465.7ZM472.7,209L474.2,205.4H480.7L482.2,209L480.7,212.5H474.2ZM482.2,209L483.7,205.4H490.2L491.7,209L490.2,212.5H483.7ZM491.7,209L493.2,205.4H493.6L495.1,209L493.6,212.5H493.2ZM495.1,209L496.6,205.4H502.6L504.1,209L502.6,212.5H496.6ZM504.1,209L505.6,205.4H507.7L509.2,209L507.7,212.5H505.6ZM509.2,209L510.7,205.4H518.7L520.2,209L518.7,212.5H510.7ZM520.2,209L521.7,205.4H522.9L524.4,209L522.9,212.5H521.7ZM524.4,209L525.9,205.4H526.3L527.8,209L526.3,212.5H525.9ZM527.8,209L529.3,205.4H532.8L534.3,209L532.8,212.5H529.3ZM534.3,209L535.8,205.4H542.8L544.3,209L542.8,212.5H535.8ZM544.3,209L545.8,205.4H547L548.5,209L547,212.5H545.8ZM548.5,209L550,205.4H556.5L558,209L556.5,212.5H550ZM558,209L559.5,205.4H563.5L565,209L563.5,212.5H559.5ZM565,209L566.5,205.4H574.5L576,209L574.5,212.5H566.5ZM576,209L577.5,205.4H583L584.5,209L583,212.5H577.5ZM584.5,209L586,205.4H592.5L594,209L592.5,212.5H586ZM594,209L595.5,205.4H602L603.5,209L602,212.5H595.5ZM603.5,209L605,205.4H605.4L606.9,209L605.4,212.5H605ZM606.9,209L608.4,205.4H609.6L611.1,209L609.6,212.5H608.4ZM611.1,209L612.6,205.4H618.7L620.2,209L618.7,212.5H612.6ZM620.2,209L621.7,205.4H629.7L631.2,209L629.7,212.5H621.7ZM631.2,209L632.7,205.4H636.2L637.7,209L636.2,212.5H632.7ZM637.7,209L639.2,205.4H645.2L646.7,209L645.2,212.5H639.2ZM646.7,209L648.2,205.4H649.4L650.9,209L649.4,212.5H648.2ZM650.9,209L652.4,205.4H657.9L659.4,209L657.9,212.5H652.4ZM659.4,209L660.9,205.4H666.4L667.9,209L666.4,212.5H660.9ZM667.9,209L669.4,205.4H669.7L671.2,209L669.7,212.5H669.4ZM671.2,209L672.7,205.4H680.7L682.2,209L680.7,212.5H672.7ZM682.2,209L683.7,205.4H690.2L691.7,209L690.2,212.5H683.7ZM691.7,209L693.2,205.4H699.7L701.2,209L699.7,212.5H693.2ZM701.2,209L702.7,205.4H709.2L710.7,209L709.2,212.5H702.7ZM710.7,209L712.2,205.4H718.7L720.2,209L718.7,212.5H712.2ZM720.2,209L721.7,205.4H721.9L723.4,209L721.9,212.5H721.7ZM723.4,209L724.9,205.4H725.3L726.8,209L725.3,212.5H724.9ZM726.8,209L728.3,205.4H736.3L737.8,209L736.3,212.5H728.3ZM741,205.4H739.3L737.8,209L739.3,212.5H741" fill="none" stroke="#98c898" stroke-width="1.1" stroke-linejoin="round"/><text x="454.8" y="211.2" font-size="5.6" fill="#e0e0ec">{...</text><text x="510.8" y="211.2" font-size="5.6" fill="#e0e0ec">{...</text><text x="566.6" y="211.2" font-size="5.6" fill="#e0e0ec">{...</text><text x="621.8" y="211.2" font-size="5.6" fill="#e0e0ec">{...</text><text x="672.8" y="211.2" font-size="5.6" fill="#e0e0ec">{...</text><text x="728.4" y="211.2" font-size="5.6" fill="#e0e0ec">{...</text><path d="M328.3,215.1H331.4L332.4,218.4L331.4,221.6H328.3M332.4,218.4L333.4,215.1H335.9L336.9,218.4L335.9,221.6H333.4ZM336.9,218.4L337.9,215.1H340.3L341.3,218.4L340.3,221.6H337.9ZM341.3,218.4L342.3,215.1H343.8L344.8,218.4L343.8,221.6H342.3ZM344.8,218.4L345.8,215.1H347.7L348.7,218.4L347.7,221.6H345.8ZM348.7,218.4L349.7,215.1H350.6L351.6,218.4L350.6,221.6H349.7ZM351.6,218.4L352.6,215.1H353.7L354.7,218.4L353.7,221.6H352.6ZM354.7,218.4L355.7,215.1H357.4L358.4,218.4L357.4,221.6H355.7ZM358.4,218.4L359.4,215.1H360.4L361.4,218.4L360.4,221.6H359.4ZM361.4,218.4L362.4,215.1H364.9L365.9,218.4L364.9,221.6H362.4ZM365.9,218.4L366.9,215.1H367.8L368.8,218.4L367.8,221.6H366.9ZM368.8,218.4L369.8,215.1H370.7L371.7,218.4L370.7,221.6H369.8ZM371.7,218.4L372.7,215.1H373.5L374.5,218.4L373.5,221.6H372.7ZM374.5,218.4L375.5,215.1H377.9L378.9,218.4L377.9,221.6H375.5ZM378.9,218.4L379.9,215.1H380.9L381.9,218.4L380.9,221.6H379.9ZM381.9,218.4L382.9,215.1H385.2L386.2,218.4L385.2,221.6H382.9ZM386.2,218.4L387.2,215.1H389.8L390.8,218.4L389.8,221.6H387.2ZM390.8,218.4L391.8,215.1H393.7L394.7,218.4L393.7,221.6H391.8ZM394.7,218.4L395.7,215.1H398.2L399.2,218.4L398.2,221.6H395.7ZM399.2,218.4L400.2,215.1H402.7L403.7,218.4L402.7,221.6H400.2ZM403.7,218.4L404.7,215.1H405.9L406.9,218.4L405.9,221.6H404.7ZM406.9,218.4L407.9,215.1H408.9L409.9,218.4L408.9,221.6H407.9ZM409.9,218.4L410.9,215.1H411.6L412.6,218.4L411.6,221.6H410.9ZM412.6,218.4L413.6,215.1H415.4L416.4,218.4L415.4,221.6H413.6ZM416.4,218.4L417.4,215.1H419.4L420.4,218.4L419.4,221.6H417.4ZM420.4,218.4L421.4,215.1H422.6L423.6,218.4L422.6,221.6H421.4ZM423.6,218.4L424.6,215.1H426.1L427.1,218.4L426.1,221.6H424.6ZM427.1,218.4L428.1,215.1H429.7L430.7,218.4L429.7,221.6H428.1ZM430.7,218.4L431.7,215.1H432.4L433.4,218.4L432.4,221.6H431.7ZM433.4,218.4L434.4,215.1H435.1L436.1,218.4L435.1,221.6H434.4ZM436.1,218.4L437.1,215.1H439.4L440.4,218.4L439.4,221.6H437.1ZM440.4,218.4L441.4,215.1H443.5L444.5,218.4L443.5,221.6H441.4ZM444.5,218.4L445.5,215.1H447.3L448.3,218.4L447.3,221.6H445.5ZM448.3,218.4L449.3,215.1H450L451,218.4L450,221.6H449.3ZM451,218.4L452,215.1H454.5L455.5,218.4L454.5,221.6H452ZM455.5,218.4L456.5,215.1H458.6L459.6,218.4L458.6,221.6H456.5ZM459.6,218.4L460.6,215.1H463.1L464.1,218.4L463.1,221.6H460.6ZM464.1,218.4L465.1,215.1H466.4L467.4,218.4L466.4,221.6H465.1ZM467.4,218.4L468.4,215.1H470.5L471.5,218.4L470.5,221.6H468.4ZM471.5,218.4L472.5,215.1H474.6L475.6,218.4L474.6,221.6H472.5ZM475.6,218.4L476.6,215.1H479L480,218.4L479,221.6H476.6ZM480,218.4L481,215.1H483.5L484.5,218.4L483.5,221.6H481ZM484.5,218.4L485.5,215.1H486.7L487.7,218.4L486.7,221.6H485.5ZM487.7,218.4L488.7,215.1H491.2L492.2,218.4L491.2,221.6H488.7ZM492.2,218.4L493.2,215.1H495.6L496.6,218.4L495.6,221.6H493.2ZM496.6,218.4L497.6,215.1H498.8L499.8,218.4L498.8,221.6H497.6ZM499.8,218.4L500.8,215.1H501.8L502.8,218.4L501.8,221.6H500.8ZM502.8,218.4L503.8,215.1H504.7L505.7,218.4L504.7,221.6H503.8ZM505.7,218.4L506.7,215.1H509.3L510.3,218.4L509.3,221.6H506.7ZM510.3,218.4L511.3,215.1H512L513,218.4L512,221.6H511.3ZM513,218.4L514,215.1H515.7L516.7,218.4L515.7,221.6H514ZM516.7,218.4L517.7,215.1H518.7L519.7,218.4L518.7,221.6H517.7ZM519.7,218.4L520.7,215.1H523L524,218.4L523,221.6H520.7ZM524,218.4L525,215.1H526.4L527.4,218.4L526.4,221.6H525ZM527.4,218.4L528.4,215.1H530.9L531.9,218.4L530.9,221.6H528.4ZM531.9,218.4L532.9,215.1H534.4L535.4,218.4L534.4,221.6H532.9ZM535.4,218.4L536.4,215.1H537.3L538.3,218.4L537.3,221.6H536.4ZM538.3,218.4L539.3,215.1H541.8L542.8,218.4L541.8,221.6H539.3ZM542.8,218.4L543.8,215.1H546L547,218.4L546,221.6H543.8ZM547,218.4L548,215.1H549.5L550.5,218.4L549.5,221.6H548ZM550.5,218.4L551.5,215.1H553.7L554.7,218.4L553.7,221.6H551.5ZM554.7,218.4L555.7,215.1H557.2L558.2,218.4L557.2,221.6H555.7ZM558.2,218.4L559.2,215.1H561.6L562.6,218.4L561.6,221.6H559.2ZM562.6,218.4L563.6,215.1H565.1L566.1,218.4L565.1,221.6H563.6ZM566.1,218.4L567.1,215.1H569.1L570.1,218.4L569.1,221.6H567.1ZM570.1,218.4L571.1,215.1H572.3L573.3,218.4L572.3,221.6H571.1ZM573.3,218.4L574.3,215.1H575.2L576.2,218.4L575.2,221.6H574.3ZM576.2,218.4L577.2,215.1H579.8L580.8,218.4L579.8,221.6H577.2ZM580.8,218.4L581.8,215.1H583.6L584.6,218.4L583.6,221.6H581.8ZM584.6,218.4L585.6,215.1H586.9L587.9,218.4L586.9,221.6H585.6ZM587.9,218.4L588.9,215.1H590L591,218.4L590,221.6H588.9ZM591,218.4L592,215.1H594.4L595.4,218.4L594.4,221.6H592ZM595.4,218.4L596.4,215.1H598.6L599.6,218.4L598.6,221.6H596.4ZM599.6,218.4L600.6,215.1H602.5L603.5,218.4L602.5,221.6H600.6ZM603.5,218.4L604.5,215.1H606.7L607.7,218.4L606.7,221.6H604.5ZM607.7,218.4L608.7,215.1H610.7L611.7,218.4L610.7,221.6H608.7ZM611.7,218.4L612.7,215.1H614.2L615.2,218.4L614.2,221.6H612.7ZM615.2,218.4L616.2,215.1H618.2L619.2,218.4L618.2,221.6H616.2ZM619.2,218.4L620.2,215.1H622.7L623.7,218.4L622.7,221.6H620.2ZM623.7,218.4L624.7,215.1H626.5L627.5,218.4L626.5,221.6H624.7ZM627.5,218.4L628.5,215.1H630.2L631.2,218.4L630.2,221.6H628.5ZM631.2,218.4L632.2,215.1H634.1L635.1,218.4L634.1,221.6H632.2ZM635.1,218.4L636.1,215.1H638.3L639.3,218.4L638.3,221.6H636.1ZM639.3,218.4L640.3,215.1H642.5L643.5,218.4L642.5,221.6H640.3ZM643.5,218.4L644.5,215.1H646.4L647.4,218.4L646.4,221.6H644.5ZM647.4,218.4L648.4,215.1H650.7L651.7,218.4L650.7,221.6H648.4ZM651.7,218.4L652.7,215.1H655L656,218.4L655,221.6H652.7ZM656,218.4L657,215.1H658.9L659.9,218.4L658.9,221.6H657ZM659.9,218.4L660.9,215.1H663.5L664.5,218.4L663.5,221.6H660.9ZM664.5,218.4L665.5,215.1H667.1L668.1,218.4L667.1,221.6H665.5ZM668.1,218.4L669.1,215.1H671.4L672.4,218.4L671.4,221.6H669.1ZM672.4,218.4L673.4,215.1H674.9L675.9,218.4L674.9,221.6H673.4ZM675.9,218.4L676.9,215.1H679L680,218.4L679,221.6H676.9ZM680,218.4L681,215.1H681.9L682.9,218.4L681.9,221.6H681ZM682.9,218.4L683.9,215.1H685.7L686.7,218.4L685.7,221.6H683.9ZM686.7,218.4L687.7,215.1H689.1L690.1,218.4L689.1,221.6H687.7ZM690.1,218.4L691.1,215.1H693.3L694.3,218.4L693.3,221.6H691.1ZM694.3,218.4L695.3,215.1H697.3L698.3,218.4L697.3,221.6H695.3ZM698.3,218.4L699.3,215.1H700.2L701.2,218.4L700.2,221.6H699.3ZM701.2,218.4L702.2,215.1H704.1L705.1,218.4L704.1,221.6H702.2ZM705.1,218.4L706.1,215.1H708.1L709.1,218.4L708.1,221.6H706.1ZM709.1,218.4L710.1,215.1H710.8L711.8,218.4L710.8,221.6H710.1ZM711.8,218.4L712.8,215.1H713.9L714.9,218.4L713.9,221.6H712.8ZM714.9,218.4L715.9,215.1H716.7L717.7,218.4L716.7,221.6H715.9ZM717.7,218.4L718.7,215.1H719.7L720.7,218.4L719.7,221.6H718.7ZM720.7,218.4L721.7,215.1H722.4L723.4,218.4L722.4,221.6H721.7ZM723.4,218.4L724.4,215.1H725.7L726.7,218.4L725.7,221.6H724.4ZM726.7,218.4L727.7,215.1H729.5L730.5,218.4L729.5,221.6H727.7ZM730.5,218.4L731.5,215.1H733.9L734.9,218.4L733.9,221.6H731.5ZM734.9,218.4L735.9,215.1H737.3L738.3,218.4L737.3,221.6H735.9ZM741,215.1H739.3L738.3,218.4L739.3,221.6H741" fill="none" stroke="#98c498" stroke-width="0.9" stroke-linejoin="round"/><path d="M328.3,231.2H364.5V224.6H371V231.2H371.9V224.6H377.9V231.2H378.8V224.6H384.9V231.2H385.8V224.6H391.8V231.2H392.7V224.6H398.8V231.2H399.7V224.6H405.7V231.2H406.6V224.6H412.7V231.2H413.6V224.6H419.6V231.2H420.5V224.6H426.6V231.2H427.5V224.6H433.5V231.2H434.4V224.6H440.5V231.2H441.4V224.6H447.4V231.2H448.3V224.6H454.4V231.2H455.3V224.6H457.5V231.2H460.9V224.6H464.4V231.2H467.8V224.6H471.4V231.2H474.8V224.6H478.3V231.2H481.7V224.6H485.3V231.2H488.7V224.6H492.2V231.2H495.6V224.6H499.2V231.2H502.6V224.6H506.1V231.2H509.5V224.6H513.1V231.2H516.5V224.6H520V231.2H523.4V224.6H527V231.2H530.4V224.6H534V231.2H537.4V224.6H540.9V231.2H544.3V224.6H547.9V231.2H551.3V224.6H554.8V231.2H558.2V224.6H561.8V231.2H565.2V224.6H568.7V231.2H572.1V224.6H575.7V231.2H579.1V224.6H582.6V231.2H586V224.6H589.6V231.2H593V224.6H596.5V231.2H599.9V224.6H603.5V231.2H606.9V224.6H610.4V231.2H613.8V224.6H617.4V231.2H620.8V224.6H623.2V231.2H629V224.6H629.9V231.2H636V224.6H636.9V231.2H642.9V224.6H643.8V231.2H649.9V224.6H650.8V231.2H656.8V224.6H657.7V231.2H663.8V224.6H664.7V231.2H670.7V224.6H671.6V231.2H677.7V224.6H678.6V231.2H683.6V224.6H689.5V231.2H690.4V224.6H696.5V231.2H697.4V224.6H703.4V231.2H704.3V224.6H710.4V231.2H711.3V224.6H717.3V231.2H718.2V224.6H724.3V231.2H725.2V224.6H731.2V231.2H732.1V224.6H738.2V231.2H739.1V224.6H741" fill="none" stroke="#00d200" stroke-width="0.95"/><path d="M328.3,240.6H355.2V234H356.1V240.6H362.1V234H363V240.6H369.1V234H370V240.6H376V234H376.9V240.6H383V234H383.9V240.6H389.9V234H390.8V240.6H396.9V234H397.8V240.6H403.8V234H404.7V240.6H410.8V234H411.7V240.6H417.7V234H418.6V240.6H424.7V234H425.6V240.6H431.6V234H432.5V240.6H438.6V234H439.5V240.6H445.5V234H446.4V240.6H452.5V234H453.4V240.6H459.5V234H463V240.6H466.4V234H469.9V240.6H473.4V234H476.9V240.6H480.3V234H483.8V240.6H487.3V234H490.8V240.6H494.2V234H497.7V240.6H501.2V234H504.7V240.6H508.1V234H511.6V240.6H515.1V234H518.6V240.6H522V234H525.5V240.6H529V234H532.5V240.6H536V234H539.5V240.6H542.9V234H546.4V240.6H549.9V234H553.4V240.6H556.8V234H560.3V240.6H563.8V234H567.3V240.6H570.7V234H574.2V240.6H577.7V234H581.2V240.6H584.6V234H588.1V240.6H591.6V234H595.1V240.6H598.5V234H602V240.6H605.5V234H609V240.6H612.4V234H615.9V240.6H622V234H626V240.6H626.9V234H633V240.6H633.9V234H639.9V240.6H640.8V234H646.9V240.6H647.8V234H653.8V240.6H654.7V234H660.8V240.6H661.7V234H667.7V240.6H668.6V234H674V240.6H680V234H680.9V240.6H687V234H687.9V240.6H693.9V234H694.8V240.6H700.9V234H701.8V240.6H707.8V234H708.7V240.6H714.8V234H715.7V240.6H721.7V234H722.6V240.6H728.7V234H729.6V240.6H735.6V234H736.5V240.6H741" fill="none" stroke="#00d200" stroke-width="0.95"/><path d="M328.3,243.2H330.3L331.6,246.5L330.3,249.7H328.3M331.6,246.5L332.9,243.2H333.4L334.7,246.5L333.4,249.7H332.9ZM334.7,246.5L336,243.2H336.8L338.1,246.5L336.8,249.7H336ZM338.1,246.5L339.4,243.2H340L341.3,246.5L340,249.7H339.4ZM341.3,246.5L342.6,243.2H343.7L345,246.5L343.7,249.7H342.6ZM345,246.5L346.3,243.2H346.6L347.9,246.5L346.6,249.7H346.3ZM347.9,246.5L349.2,243.2H350.2L351.5,246.5L350.2,249.7H349.2ZM351.5,246.5L352.8,243.2H352.8L354,246.5L352.8,249.7H352.8ZM354,246.5L355.3,243.2H356.7L358,246.5L356.7,249.7H355.3ZM358,246.5L359.3,243.2H360L361.3,246.5L360,249.7H359.3ZM361.3,246.5L362.6,243.2H362.6L363.8,246.5L362.6,249.7H362.6ZM363.8,246.5L365.1,243.2H365.1L366.3,246.5L365.1,249.7H365.1ZM366.3,246.5L367.6,243.2H367.8L369.1,246.5L367.8,249.7H367.6ZM369.1,246.5L370.4,243.2H370.9L372.2,246.5L370.9,249.7H370.4ZM372.2,246.5L373.5,243.2H374.6L375.9,246.5L374.6,249.7H373.5ZM375.9,246.5L377.2,243.2H378.1L379.4,246.5L378.1,249.7H377.2ZM379.4,246.5L380.7,243.2H381.5L382.8,246.5L381.5,249.7H380.7ZM382.8,246.5L384.1,243.2H384.4L385.7,246.5L384.4,249.7H384.1ZM385.7,246.5L387,243.2H388.4L389.7,246.5L388.4,249.7H387ZM389.7,246.5L391,243.2H391.9L393.2,246.5L391.9,249.7H391ZM393.2,246.5L394.5,243.2H394.7L396,246.5L394.7,249.7H394.5ZM396,246.5L397.2,243.2H397.2L398.5,246.5L397.2,249.7H397.2ZM398.5,246.5L399.8,243.2H400.2L401.5,246.5L400.2,249.7H399.8ZM401.5,246.5L402.8,243.2H403.2L404.5,246.5L403.2,249.7H402.8ZM404.5,246.5L405.8,243.2H407L408.3,246.5L407,249.7H405.8ZM408.3,246.5L409.6,243.2H409.7L411,246.5L409.7,249.7H409.6ZM411,246.5L412.3,243.2H412.9L414.2,246.5L412.9,249.7H412.3ZM414.2,246.5L415.5,243.2H415.9L417.2,246.5L415.9,249.7H415.5ZM417.2,246.5L418.5,243.2H419.3L420.6,246.5L419.3,249.7H418.5ZM420.6,246.5L421.9,243.2H422.2L423.5,246.5L422.2,249.7H421.9ZM423.5,246.5L424.8,243.2H425.1L426.4,246.5L425.1,249.7H424.8ZM426.4,246.5L427.7,243.2H428.7L430,246.5L428.7,249.7H427.7ZM430,246.5L431.3,243.2H431.5L432.8,246.5L431.5,249.7H431.3ZM432.8,246.5L434.1,243.2H434.1L435.3,246.5L434.1,249.7H434.1ZM435.3,246.5L436.6,243.2H436.7L438,246.5L436.7,249.7H436.6ZM438,246.5L439.3,243.2H439.8L441.1,246.5L439.8,249.7H439.3ZM441.1,246.5L442.4,243.2H443.4L444.7,246.5L443.4,249.7H442.4ZM444.7,246.5L446,243.2H446.8L448.1,246.5L446.8,249.7H446ZM448.1,246.5L449.4,243.2H449.9L451.2,246.5L449.9,249.7H449.4ZM451.2,246.5L452.5,243.2H452.7L454,246.5L452.7,249.7H452.5ZM454,246.5L455.3,243.2H456.4L457.7,246.5L456.4,249.7H455.3ZM457.7,246.5L459,243.2H460.2L461.5,246.5L460.2,249.7H459ZM461.5,246.5L462.8,243.2H463.2L464.5,246.5L463.2,249.7H462.8ZM464.5,246.5L465.8,243.2H466.7L468,246.5L466.7,249.7H465.8ZM468,246.5L469.3,243.2H470.6L471.9,246.5L470.6,249.7H469.3ZM471.9,246.5L473.2,243.2H473.4L474.7,246.5L473.4,249.7H473.2ZM474.7,246.5L476,243.2H476.4L477.7,246.5L476.4,249.7H476ZM477.7,246.5L478.9,243.2H478.9L480.2,246.5L478.9,249.7H478.9ZM480.2,246.5L481.5,243.2H482.2L483.5,246.5L482.2,249.7H481.5ZM483.5,246.5L484.8,243.2H485.6L486.9,246.5L485.6,249.7H484.8ZM486.9,246.5L488.2,243.2H488.7L490,246.5L488.7,249.7H488.2ZM490,246.5L491.3,243.2H491.9L493.2,246.5L491.9,249.7H491.3ZM493.2,246.5L494.5,243.2H495.7L497,246.5L495.7,249.7H494.5ZM497,246.5L498.3,243.2H498.3L499.6,246.5L498.3,249.7H498.3ZM499.6,246.5L500.9,243.2H502L503.3,246.5L502,249.7H500.9ZM503.3,246.5L504.6,243.2H504.7L506,246.5L504.7,249.7H504.6ZM506,246.5L507.3,243.2H508.6L509.9,246.5L508.6,249.7H507.3ZM509.9,246.5L511.2,243.2H512.6L513.9,246.5L512.6,249.7H511.2ZM513.9,246.5L515.2,243.2H515.9L517.2,246.5L515.9,249.7H515.2ZM517.2,246.5L518.5,243.2H518.5L519.8,246.5L518.5,249.7H518.5ZM519.8,246.5L521.1,243.2H522.4L523.7,246.5L522.4,249.7H521.1ZM523.7,246.5L525,243.2H526L527.3,246.5L526,249.7H525ZM527.3,246.5L528.6,243.2H529.7L531,246.5L529.7,249.7H528.6ZM531,246.5L532.3,243.2H532.5L533.8,246.5L532.5,249.7H532.3ZM533.8,246.5L535.1,243.2H536.1L537.4,246.5L536.1,249.7H535.1ZM537.4,246.5L538.7,243.2H538.9L540.2,246.5L538.9,249.7H538.7ZM540.2,246.5L541.5,243.2H542.6L543.9,246.5L542.6,249.7H541.5ZM543.9,246.5L545.2,243.2H545.5L546.8,246.5L545.5,249.7H545.2ZM546.8,246.5L548.1,243.2H548.2L549.5,246.5L548.2,249.7H548.1ZM549.5,246.5L550.8,243.2H551L552.3,246.5L551,249.7H550.8ZM552.3,246.5L553.5,243.2H553.5L554.8,246.5L553.5,249.7H553.5ZM554.8,246.5L556.1,243.2H556.5L557.8,246.5L556.5,249.7H556.1ZM557.8,246.5L559.1,243.2H559.1L560.4,246.5L559.1,249.7H559.1ZM560.4,246.5L561.7,243.2H563L564.3,246.5L563,249.7H561.7ZM564.3,246.5L565.6,243.2H566.4L567.7,246.5L566.4,249.7H565.6ZM567.7,246.5L569,243.2H569.7L571,246.5L569.7,249.7H569ZM571,246.5L572.2,243.2H572.2L573.5,246.5L572.2,249.7H572.2ZM573.5,246.5L574.8,243.2H576.1L577.4,246.5L576.1,249.7H574.8ZM577.4,246.5L578.7,243.2H580L581.3,246.5L580,249.7H578.7ZM581.3,246.5L582.6,243.2H583.4L584.7,246.5L583.4,249.7H582.6ZM584.7,246.5L586,243.2H587L588.3,246.5L587,249.7H586ZM588.3,246.5L589.6,243.2H591L592.3,246.5L591,249.7H589.6ZM592.3,246.5L593.6,243.2H594.3L595.6,246.5L594.3,249.7H593.6ZM595.6,246.5L596.9,243.2H598.1L599.4,246.5L598.1,249.7H596.9ZM599.4,246.5L600.7,243.2H601.6L602.9,246.5L601.6,249.7H600.7ZM602.9,246.5L604.2,243.2H605.5L606.8,246.5L605.5,249.7H604.2ZM606.8,246.5L608.1,243.2H609L610.3,246.5L609,249.7H608.1ZM610.3,246.5L611.6,243.2H612.8L614.1,246.5L612.8,249.7H611.6ZM614.1,246.5L615.4,243.2H616.4L617.7,246.5L616.4,249.7H615.4ZM617.7,246.5L619,243.2H619.8L621.1,246.5L619.8,249.7H619ZM621.1,246.5L622.4,243.2H622.8L624.1,246.5L622.8,249.7H622.4ZM624.1,246.5L625.4,243.2H626.1L627.4,246.5L626.1,249.7H625.4ZM627.4,246.5L628.7,243.2H629.6L630.9,246.5L629.6,249.7H628.7ZM630.9,246.5L632.2,243.2H633.4L634.7,246.5L633.4,249.7H632.2ZM634.7,246.5L636,243.2H636.4L637.7,246.5L636.4,249.7H636ZM637.7,246.5L639,243.2H639.7L641,246.5L639.7,249.7H639ZM641,246.5L642.3,243.2H643.5L644.8,246.5L643.5,249.7H642.3ZM644.8,246.5L646.1,243.2H647.1L648.4,246.5L647.1,249.7H646.1ZM648.4,246.5L649.7,243.2H650.4L651.7,246.5L650.4,249.7H649.7ZM651.7,246.5L653,243.2H653.2L654.5,246.5L653.2,249.7H653ZM654.5,246.5L655.8,243.2H656.4L657.7,246.5L656.4,249.7H655.8ZM657.7,246.5L659,243.2H660.3L661.6,246.5L660.3,249.7H659ZM661.6,246.5L662.8,243.2H662.8L664,246.5L662.8,249.7H662.8ZM664,246.5L665.3,243.2H666.2L667.5,246.5L666.2,249.7H665.3ZM667.5,246.5L668.8,243.2H668.8L670.1,246.5L668.8,249.7H668.8ZM670.1,246.5L671.4,243.2H672.3L673.6,246.5L672.3,249.7H671.4ZM673.6,246.5L674.9,243.2H676.1L677.4,246.5L676.1,249.7H674.9ZM677.4,246.5L678.7,243.2H679.6L680.9,246.5L679.6,249.7H678.7ZM680.9,246.5L682.2,243.2H682.7L684,246.5L682.7,249.7H682.2ZM684,246.5L685.3,243.2H686.5L687.8,246.5L686.5,249.7H685.3ZM687.8,246.5L689.1,243.2H689.6L690.9,246.5L689.6,249.7H689.1ZM690.9,246.5L692.2,243.2H692.5L693.8,246.5L692.5,249.7H692.2ZM693.8,246.5L695.1,243.2H695.7L697,246.5L695.7,249.7H695.1ZM697,246.5L698.3,243.2H699.4L700.7,246.5L699.4,249.7H698.3ZM700.7,246.5L702,243.2H703.3L704.6,246.5L703.3,249.7H702ZM704.6,246.5L705.9,243.2H706L707.3,246.5L706,249.7H705.9ZM707.3,246.5L708.6,243.2H708.8L710.1,246.5L708.8,249.7H708.6ZM710.1,246.5L711.4,243.2H711.9L713.2,246.5L711.9,249.7H711.4ZM713.2,246.5L714.5,243.2H715.1L716.4,246.5L715.1,249.7H714.5ZM716.4,246.5L717.7,243.2H718.8L720.1,246.5L718.8,249.7H717.7ZM720.1,246.5L721.4,243.2H722L723.3,246.5L722,249.7H721.4ZM723.3,246.5L724.5,243.2H724.5L725.7,246.5L724.5,249.7H724.5ZM725.7,246.5L727,243.2H727L728.2,246.5L727,249.7H727ZM728.2,246.5L729.5,243.2H730.2L731.5,246.5L730.2,249.7H729.5ZM731.5,246.5L732.8,243.2H733.9L735.2,246.5L733.9,249.7H732.8ZM735.2,246.5L736.5,243.2H736.5L737.8,246.5L736.5,249.7H736.5ZM737.8,246.5L739,243.2H739L740.2,246.5L739,249.7H739ZM741,243.2H740.6L740.2,246.5L740.6,249.7H741" fill="none" stroke="#c2e6c2" stroke-width="0.95" stroke-linejoin="round"/><path d="M328.3,259.3H329.8V252.7H331V259.3H334.2V252.7H336.4V259.3H338.4V252.7H340V259.3H343.2V252.7H344.2V259.3H347.4V252.7H348.4V259.3H351.6V252.7H352.6V259.3H354.2V252.7H355.8V259.3H359V252.7H360.2V259.3H362.2V252.7H363.2V259.3H366.4V252.7H368.6V259.3H370.2V252.7H371.2V259.3H373.2V252.7H374.4V259.3H376.4V252.7H378.6V259.3H380.2V252.7H381.2V259.3H382.8V252.7H384V259.3H387.2V252.7H388.2V259.3H390.6V252.7H391.6V259.3H394V252.7H395V259.3H398.2V252.7H399.2V259.3H400.8V252.7H401.8V259.3H405V252.7H406V259.3H408V252.7H409.6V259.3H411.2V252.7H412.2V259.3H414.2V252.7H415.2V259.3H417.2V252.7H418.8V259.3H420.4V252.7H422V259.3H423.6V252.7H425.8V259.3H427.4V252.7H429.6V259.3H432V252.7H434.2V259.3H437.4V252.7H438.4V259.3H441.6V252.7H442.8V259.3H445.2V252.7H446.2V259.3H448.6V252.7H450.8V259.3H452.8V252.7H454.4V259.3H457.6V252.7H459.8V259.3H463V252.7H464V259.3H466V252.7H468.2V259.3H470.6V252.7H472.2V259.3H473.8V252.7H474.8V259.3H476.4V252.7H477.4V259.3H479V252.7H480.6V259.3H482.2V252.7H483.2V259.3H485.2V252.7H486.2V259.3H488.6V252.7H489.6V259.3H491.2V252.7H492.2V259.3H493.8V252.7H496V259.3H499.2V252.7H500.2V259.3H501.8V252.7H504V259.3H506.4V252.7H508.6V259.3H511V252.7H513.2V259.3H515.2V252.7H516.2V259.3H518.6V252.7H519.6V259.3H521.2V252.7H522.2V259.3H525.4V252.7H527.6V259.3H529.2V252.7H530.4V259.3H532V252.7H533.6V259.3H536.8V252.7H538.4V259.3H540.4V252.7H541.4V259.3H543.8V252.7H545.4V259.3H547.8V252.7H549V259.3H550.6V252.7H551.6V259.3H553.2V252.7H555.4V259.3H557V252.7H559.2V259.3H562.4V252.7H563.4V259.3H566.6V252.7H568.8V259.3H571.2V252.7H572.2V259.3H574.2V252.7H575.8V259.3H577.4V252.7H579V259.3H582.2V252.7H583.8V259.3H587V252.7H588.6V259.3H590.2V252.7H591.2V259.3H594.4V252.7H596V259.3H597.6V252.7H598.6V259.3H601.8V252.7H604V259.3H606V252.7H607V259.3H609.4V252.7H610.4V259.3H612.8V252.7H614.4V259.3H617.6V252.7H619.2V259.3H620.8V252.7H621.8V259.3H625V252.7H626V259.3H627.6V252.7H629.2V259.3H631.6V252.7H632.6V259.3H635V252.7H637.2V259.3H640.4V252.7H642V259.3H644V252.7H645.6V259.3H647.6V252.7H649.2V259.3H651.6V252.7H653.8V259.3H656.2V252.7H657.8V259.3H659.4V252.7H660.4V259.3H662V252.7H664.2V259.3H666.2V252.7H667.8V259.3H671V252.7H672.2V259.3H674.6V252.7H675.8V259.3H678.2V252.7H679.4V259.3H681V252.7H682V259.3H683.6V252.7H685.8V259.3H688.2V252.7H689.8V259.3H691.8V252.7H692.8V259.3H694.8V252.7H695.8V259.3H698.2V252.7H699.4V259.3H702.6V252.7H703.6V259.3H706V252.7H707.2V259.3H708.8V252.7H709.8V259.3H713V252.7H714.2V259.3H716.6V252.7H718.8V259.3H720.8V252.7H722.4V259.3H724.8V252.7H725.8V259.3H729V252.7H730.6V259.3H733.8V252.7H735V259.3H736.6V252.7H738.2V259.3H741" fill="none" stroke="#00c000" stroke-width="0.9"/><path d="M330.3,262.1H332.5M334.9,262.1H337.1M339.5,262.1H341.7M344.1,262.1H346.3M348.7,262.1H350.9M353.3,262.1H355.5M357.9,262.1H360.1M362.5,262.1H364.7M367.1,262.1H369.3M371.7,262.1H373.9M376.3,262.1H378.5M380.9,262.1H383.1M385.5,262.1H387.7M390.1,262.1H392.3M394.7,262.1H396.9M399.3,262.1H401.5M403.9,262.1H406.1M408.5,262.1H410.7M413.1,262.1H415.3M417.7,262.1H419.9M422.3,262.1H424.5M426.9,262.1H429.1M431.5,262.1H433.7M436.1,262.1H438.3M440.7,262.1H442.9M445.3,262.1H447.5M449.9,262.1H452.1M454.5,262.1H456.7M459.1,262.1H461.3M463.7,262.1H465.9M468.3,262.1H470.5M472.9,262.1H475.1M477.5,262.1H479.7M482.1,262.1H484.3M486.7,262.1H488.9M491.3,262.1H493.5M495.9,262.1H498.1M500.5,262.1H502.7M505.1,262.1H507.3M509.7,262.1H511.9M514.3,262.1H516.5M518.9,262.1H521.1M523.5,262.1H525.7M528.1,262.1H530.3M532.7,262.1H534.9M537.3,262.1H539.5M541.9,262.1H544.1M546.5,262.1H548.7M551.1,262.1H553.3M555.7,262.1H557.9M560.3,262.1H562.5M564.9,262.1H567.1M569.5,262.1H571.7M574.1,262.1H576.3M578.7,262.1H580.9M583.3,262.1H585.5M587.9,262.1H590.1M592.5,262.1H594.7M597.1,262.1H599.3M601.7,262.1H603.9M606.3,262.1H608.5M610.9,262.1H613.1M615.5,262.1H617.7M620.1,262.1H622.3M624.7,262.1H626.9M629.3,262.1H631.5M633.9,262.1H636.1M638.5,262.1H640.7M643.1,262.1H645.3M647.7,262.1H649.9M652.3,262.1H654.5M656.9,262.1H659.1M661.5,262.1H663.7M666.1,262.1H668.3M670.7,262.1H672.9M675.3,262.1H677.5M679.9,262.1H682.1M684.5,262.1H686.7M689.1,262.1H691.3M693.7,262.1H695.9M698.3,262.1H700.5M702.9,262.1H705.1M707.5,262.1H709.7M712.1,262.1H714.3M716.7,262.1H718.9M721.3,262.1H723.5M725.9,262.1H728.1M730.5,262.1H732.7M735.1,262.1H737.3" stroke="#00a800" stroke-width="1.2"/><rect x="327" y="117.6" width="415.5" height="1.3" fill="#b4b4b4"/><rect x="327" y="263.8" width="415.5" height="1.2" fill="#e6e6e6"/><rect x="327" y="265" width="415.5" height="22.8" fill="#000"/><path d="M338.6,265.8V268.8" stroke="#00a800" stroke-width=".8"/><path d="M351.2,266.2V268.4" stroke="#00a800" stroke-width=".8"/><path d="M363.8,266.2V268.4" stroke="#00a800" stroke-width=".8"/><path d="M376.4,266.2V268.4" stroke="#00a800" stroke-width=".8"/><path d="M388.9,266.2V268.4" stroke="#00a800" stroke-width=".8"/><path d="M401.5,265.4V269.6" stroke="#00d000" stroke-width=".8"/><path d="M414.1,266.2V268.4" stroke="#00a800" stroke-width=".8"/><path d="M426.7,266.2V268.4" stroke="#00a800" stroke-width=".8"/><path d="M439.3,266.2V268.4" stroke="#00a800" stroke-width=".8"/><path d="M451.9,266.2V268.4" stroke="#00a800" stroke-width=".8"/><path d="M464.4,265.8V268.8" stroke="#00a800" stroke-width=".8"/><path d="M477,266.2V268.4" stroke="#00a800" stroke-width=".8"/><path d="M489.6,266.2V268.4" stroke="#00a800" stroke-width=".8"/><path d="M502.2,266.2V268.4" stroke="#00a800" stroke-width=".8"/><path d="M514.8,266.2V268.4" stroke="#00a800" stroke-width=".8"/><path d="M527.4,265.4V269.6" stroke="#00d000" stroke-width=".8"/><path d="M539.9,266.2V268.4" stroke="#00a800" stroke-width=".8"/><path d="M552.5,266.2V268.4" stroke="#00a800" stroke-width=".8"/><path d="M565.1,266.2V268.4" stroke="#00a800" stroke-width=".8"/><path d="M577.7,266.2V268.4" stroke="#00a800" stroke-width=".8"/><path d="M590.3,265.8V268.8" stroke="#00a800" stroke-width=".8"/><path d="M602.9,266.2V268.4" stroke="#00a800" stroke-width=".8"/><path d="M615.4,266.2V268.4" stroke="#00a800" stroke-width=".8"/><path d="M628,266.2V268.4" stroke="#00a800" stroke-width=".8"/><path d="M640.6,266.2V268.4" stroke="#00a800" stroke-width=".8"/><path d="M653.2,265.4V269.6" stroke="#00d000" stroke-width=".8"/><path d="M665.8,266.2V268.4" stroke="#00a800" stroke-width=".8"/><path d="M678.4,266.2V268.4" stroke="#00a800" stroke-width=".8"/><path d="M691,266.2V268.4" stroke="#00a800" stroke-width=".8"/><path d="M703.5,266.2V268.4" stroke="#00a800" stroke-width=".8"/><path d="M716.1,265.8V268.8" stroke="#00a800" stroke-width=".8"/><path d="M728.7,266.2V268.4" stroke="#00a800" stroke-width=".8"/><text x="395.7" y="275.6" font-size="6.1" fill="#00c000" textLength="10.8" lengthAdjust="spacingAndGlyphs">2 us</text><text x="521.6" y="275.6" font-size="6.1" fill="#00c000" textLength="10.8" lengthAdjust="spacingAndGlyphs">4 us</text><text x="647.4" y="275.6" font-size="6.1" fill="#00c000" textLength="10.8" lengthAdjust="spacingAndGlyphs">6 us</text><path d="M328.3,277.6H741.0" stroke="#7a7a7a" stroke-width=".8"/><path d="M354.6,107.5V278" stroke="#ffc20a" stroke-width="1.8"/><rect x="353.9" y="149.4" width="1.2" height="7.2" fill="#ff3010"/><rect x="353.7" y="216.2" width="1.6" height="4.5" fill="#f0e020"/><rect x="353.7" y="243.8" width="1.8" height="5" fill="#2838a0"/><rect x="336.6" y="278.2" width="35.8" height="8" fill="#000" stroke="#d8a418" stroke-width=".9"/><text x="338" y="285" font-size="6.2" fill="#f0b820" textLength="32.8" lengthAdjust="spacingAndGlyphs">1.249164 us</text></svg>
<div style="left:0px;top:299.4px;width:756px;height:5.2px;background:linear-gradient(180deg,#e4e4e4 0,#cdcdcd 18%,#d2d2d2 80%,#e8e8e8 100%)"></div>
<div style="left:0px;top:304.6px;width:756px;height:10.4px;background:#f0f0f0;border-top:1px solid #fbfbfb"></div>
<svg style="left:2.2px;top:306.4px;" width="7.4" height="7.6" viewBox="0 0 7.4 7.6"><path d="M.6,7.2V2.8a3,2.4 0 0 1 6,0V7.2h-1.5V3.8h-3V7.2z" fill="#9a9a9a" stroke="#444" stroke-width=".5"/><rect x="2.2" y="2.2" width="2.8" height="1.8" fill="#fff"/></svg>
<span class="t" style="left:12.00px;top:307.00px;font-size:6.6px;line-height:8.6px;color:#222;transform:scaleX(0.904);transform-origin:0 0;">Transcript</span>
<svg style="left:42px;top:308px;" width="689" height="5" viewBox="0 0 689 5"><path d="M0,1.3H689M0,3.5H689" stroke="#9c9c9c" stroke-width=".8"/><path d="M0,2.1H689M0,4.3H689" stroke="#fff" stroke-width=".6"/></svg>
<svg style="left:380px;top:308px;" width="12" height="5" viewBox="0 0 12 5"><rect width="12" height="5" fill="#f0f0f0"/><path d="M1,1.5H11M1,3.5H11" stroke="#999" stroke-width=".8" stroke-dasharray="1 1"/></svg>
<svg style="left:731px;top:306.8px" width="22.5" height="7.5" viewBox="0 0 24 8"><path d="M1.2,4H6.6M3.9,1.3V6.7" stroke="#111" stroke-width="1"/><rect x="9.3" y="3.4" width="3.4" height="3.2" fill="#fff" stroke="#111" stroke-width=".7"/><path d="M11.6,1.6h2.8v2.8M14.2,1.8l-2.2,2.2" stroke="#111" stroke-width=".8" fill="none"/><path d="M17.6,1.6l4.4,4.8M22,1.6l-4.4,4.8" stroke="#111" stroke-width=".9"/></svg>
<div style="left:1.5px;top:315px;width:754.5px;height:73.5px;background:#fff;border-top:1px solid #7a7a7a;border-left:1.6px solid #7a7a7a;border-bottom:1px solid #d8d8d8"></div>
<div style="left:3.5px;top:315.2px;width:741px;height:72px;overflow:hidden">
<span class="m" style="left:1.2px;top:-1.20px;font-size:6.42px;line-height:8.4px;color:#2a2ae6">#    Time: 0 ps  Iteration: 0  Instance: /cpu_tb/iromf</span>
<span class="m" style="left:1.2px;top:6.80px;font-size:6.42px;line-height:8.4px;color:#2a2ae6"># ** Note: 1835008</span>
<span class="m" style="left:1.2px;top:14.80px;font-size:6.42px;line-height:8.4px;color:#2a2ae6">#    Time: 0 ps  Iteration: 0  Instance: /cpu_tb/iromf</span>
<span class="m" style="left:1.2px;top:22.80px;font-size:6.42px;line-height:8.4px;color:#2a2ae6"># ** Note: 1900545</span>
<span class="m" style="left:1.2px;top:31.80px;font-size:6.42px;line-height:8.4px;color:#2a2ae6">#    Time: 0 ps  Iteration: 0  Instance: /cpu_tb/iromf</span>
<span class="m" style="left:1.2px;top:39.80px;font-size:6.42px;line-height:8.4px;color:#2a2ae6"># ** Note: 786455</span>
<span class="m" style="left:1.2px;top:47.80px;font-size:6.42px;line-height:8.4px;color:#2a2ae6">#    Time: 0 ps  Iteration: 0  Instance: /cpu_tb/iromf</span>
</div>
<span class="t" style="left:3.60px;top:379.00px;font-size:6.6px;line-height:8.6px;color:#333;transform:scaleX(0.864);transform-origin:0 0;">VSIM 41&gt;</span>
<div style="left:745px;top:316px;width:11px;height:72px;background:#f6f6f6"></div>
<svg style="left:745.5px;top:316.2px;" width="9.5" height="7.6" viewBox="0 0 9.5 7.6"><rect x=".5" y=".5" width="8.5" height="6.6" fill="#f0f0f0" stroke="#fdfdfd"/><path d="M9.0,0V7.1H0" stroke="#8c8c8c" fill="none"/><polygon points="3.05,4.82 6.45,4.82 4.75,2.4399999999999995" fill="#000"/></svg>
<svg style="left:745.5px;top:379.5px;" width="10" height="8" viewBox="0 0 10 8"><rect x=".5" y=".5" width="9" height="7" fill="#f0f0f0" stroke="#fdfdfd"/><path d="M9.5,0V7.5H0" stroke="#8c8c8c" fill="none"/><polygon points="3.3,2.98 6.7,2.98 5.0,5.36" fill="#000"/></svg>
<div style="left:745.5px;top:374px;width:10px;height:5.5px;background:#f0f0f0;border:1px solid;border-color:#fff #8c8c8c #8c8c8c #fff"></div>
<div style="left:0px;top:388.5px;width:756px;height:13.5px;background:#f0f0f0"></div>
<div style="left:1.3px;top:390px;width:94.0px;height:11px;border:1px solid;border-color:#a6a6a6 #fdfdfd #fdfdfd #a6a6a6;background:#f0f0f0"></div>
<div style="left:98.5px;top:390px;width:51.5px;height:11px;border:1px solid;border-color:#a6a6a6 #fdfdfd #fdfdfd #a6a6a6;background:#f0f0f0"></div>
<div style="left:151.7px;top:390px;width:109.0px;height:11px;border:1px solid;border-color:#a6a6a6 #fdfdfd #fdfdfd #a6a6a6;background:#f0f0f0"></div>
<div style="left:262.7px;top:390px;width:479.3px;height:11px;border:1px solid;border-color:#a6a6a6 #fdfdfd #fdfdfd #a6a6a6;background:#f0f0f0"></div>
<span class="t" style="left:5.00px;top:392.00px;font-size:6.5px;line-height:8.5px;color:#222;transform:scaleX(0.924);transform-origin:0 0;">833333 ps to 7395845 ps</span>
<span class="t" style="left:100.70px;top:392.00px;font-size:6.5px;line-height:8.5px;color:#222;transform:scaleX(0.890);transform-origin:0 0;">Project : uHMCU1</span>
<span class="t" style="left:153.30px;top:392.00px;font-size:6.5px;line-height:8.5px;color:#222;transform:scaleX(0.945);transform-origin:0 0;">Now: 100 us  Delta: 2</span>
<span class="t" style="left:265.00px;top:392.00px;font-size:6.5px;line-height:8.5px;color:#222;transform:scaleX(0.935);transform-origin:0 0;">/cpu_tb/icpu/ackrc</span>
<svg style="left:746px;top:392px;" width="10" height="10" viewBox="0 0 10 10"><path d="M9.5,1L1,9.5M9.5,4L4,9.5M9.5,7L7,9.5" stroke="#a8a8a8" stroke-width=".9"/></svg>
</body></html>
